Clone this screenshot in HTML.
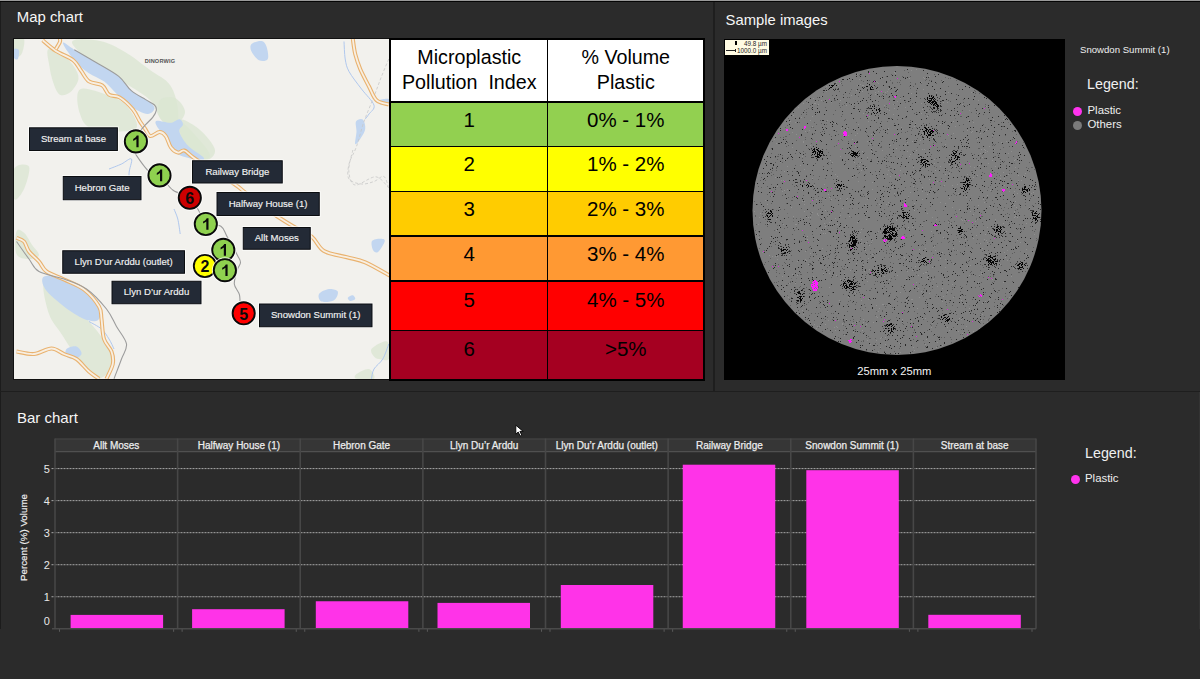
<!DOCTYPE html>
<html><head><meta charset="utf-8"><style>
html,body{margin:0;padding:0;width:1200px;height:679px;overflow:hidden;background:#2b2b2b;font-family:"Liberation Sans", sans-serif;}
div{box-sizing:border-box;}
</style></head><body>
<div style="position:relative;width:1200px;height:679px;overflow:hidden">
<div style="position:absolute;left:0px;top:0px;width:1200px;height:1px;background:#9a9a9a"></div><div style="position:absolute;left:0px;top:1px;width:1200px;height:1px;background:#050505"></div><div style="position:absolute;left:0px;top:2px;width:1px;height:627px;background:#1c1c1c"></div><div style="position:absolute;left:713px;top:2px;width:2px;height:389px;background:#1e1e1e"></div><div style="position:absolute;left:0px;top:390.5px;width:1200px;height:1.8000000000000114px;background:#1e1e1e"></div><div style="position:absolute;left:16.8px;top:9.6px;font-size:14.9px;line-height:1;color:#f6f6f6;font-weight:400;white-space:nowrap;">Map chart</div><div style="position:absolute;left:725.6px;top:12.8px;font-size:14.8px;line-height:1;color:#f6f6f6;font-weight:400;white-space:nowrap;">Sample images</div><div style="position:absolute;left:17px;top:410px;font-size:15px;line-height:1;color:#f6f6f6;font-weight:400;white-space:nowrap;">Bar chart</div><div style="position:absolute;left:13px;top:38px;width:377px;height:342px;background:#111"></div><div style="position:absolute;left:14px;top:39px;width:376px;height:340px;overflow:hidden"><svg width="376" height="340" viewBox="14 39 376 340" style="display:block">
<rect x="0" y="0" width="400" height="400" fill="#f2f1ed"/>
<path d="M72.0,42.0 C72.8,38.0 91.2,39.3 100.0,41.0 C108.8,42.7 116.7,47.2 125.0,52.0 C133.3,56.8 142.5,64.5 150.0,70.0 C157.5,75.5 165.3,78.3 170.0,85.0 C174.7,91.7 177.2,101.7 178.0,110.0 C178.8,118.3 178.0,133.7 175.0,135.0 C172.0,136.3 164.2,123.8 160.0,118.0 C155.8,112.2 156.7,106.3 150.0,100.0 C143.3,93.7 129.2,85.8 120.0,80.0 C110.8,74.2 103.0,71.3 95.0,65.0 C87.0,58.7 71.2,46.0 72.0,42.0Z" fill="#dbe6d2" fill-opacity="0.8"/>
<path d="M178.0,120.0 C180.8,119.5 189.7,129.2 195.0,135.0 C200.3,140.8 209.2,150.8 210.0,155.0 C210.8,159.2 204.2,160.8 200.0,160.0 C195.8,159.2 188.7,153.7 185.0,150.0 C181.3,146.3 179.2,143.0 178.0,138.0 C176.8,133.0 175.2,120.5 178.0,120.0Z" fill="#dbe6d2" fill-opacity="0.8"/>
<path d="M48.0,49.6 C49.7,47.4 55.7,49.6 59.9,52.3 C64.1,54.9 70.1,61.1 73.2,65.5 C76.3,69.9 78.9,74.4 78.5,78.8 C78.0,83.2 73.6,89.4 70.5,92.1 C67.4,94.7 62.8,96.3 59.9,94.7 C57.0,93.2 55.0,87.6 53.3,82.8 C51.5,77.9 50.2,71.1 49.3,65.5 C48.4,60.0 46.2,51.8 48.0,49.6Z" fill="#dbe6d2" fill-opacity="0.8"/>
<path d="M79.8,89.4 C84.2,86.3 98.6,92.1 106.3,94.7 C114.0,97.4 121.3,99.6 126.2,105.3 C131.1,111.0 141.0,125.1 135.5,129.1 C130.0,133.0 102.3,131.7 93.1,129.1 C83.8,126.4 82.0,119.9 79.8,113.3 C77.6,106.7 75.4,92.5 79.8,89.4Z" fill="#dbe6d2" fill-opacity="0.8"/>
<path d="M160.0,100.0 C162.5,96.7 170.8,96.0 175.0,98.0 C179.2,100.0 185.0,107.5 185.0,112.0 C185.0,116.5 179.2,124.0 175.0,125.0 C170.8,126.0 162.5,122.2 160.0,118.0 C157.5,113.8 157.5,103.3 160.0,100.0Z" fill="#dbe6d2" fill-opacity="0.8"/>
<path d="M180.0,120.0 C182.5,117.5 194.2,125.0 200.0,130.0 C205.8,135.0 214.2,145.0 215.0,150.0 C215.8,155.0 210.0,160.8 205.0,160.0 C200.0,159.2 189.2,151.7 185.0,145.0 C180.8,138.3 177.5,122.5 180.0,120.0Z" fill="#dbe6d2" fill-opacity="0.8"/>
<path d="M44.0,284.0 C46.5,281.5 56.5,292.8 64.0,299.0 C71.5,305.2 81.5,313.2 89.0,321.5 C96.5,329.8 105.5,341.1 109.0,349.0 C112.5,356.9 112.3,364.0 110.2,369.0 C108.2,374.0 101.3,379.6 96.5,378.8 C91.7,377.9 87.3,371.5 81.5,364.0 C75.7,356.5 66.9,342.3 61.5,334.0 C56.1,325.7 51.9,322.3 49.0,314.0 C46.1,305.7 41.5,286.5 44.0,284.0Z" fill="#dbe6d2" fill-opacity="0.8"/>
<path d="M16.5,231.5 C17.8,228.0 21.5,230.7 24.0,232.8 C26.5,234.8 29.0,240.2 31.5,244.0 C34.0,247.8 39.4,252.8 39.0,255.2 C38.6,257.8 32.8,259.2 29.0,259.0 C25.2,258.8 18.6,258.6 16.5,254.0 C14.4,249.4 15.2,235.0 16.5,231.5Z" fill="#dbe6d2" fill-opacity="0.8"/>
<path d="M371.5,349.0 C373.2,346.5 381.1,342.3 384.0,341.5 C386.9,340.7 388.0,341.1 388.8,344.0 C389.5,346.9 390.4,356.5 388.8,359.0 C387.1,361.5 381.5,359.4 379.0,359.0 C376.5,358.6 375.2,358.2 374.0,356.5 C372.8,354.8 369.8,351.5 371.5,349.0Z" fill="#dbe6d2" fill-opacity="0.8"/>
<path d="M356.5,374.0 C358.6,372.4 366.1,368.2 369.0,369.0 C371.9,369.8 376.1,377.1 374.0,378.8 C371.9,380.4 359.4,379.5 356.5,378.8 C353.6,378.0 354.4,375.6 356.5,374.0Z" fill="#dbe6d2" fill-opacity="0.8"/>
<path d="M14.0,169.0 C16.5,163.6 27.3,163.2 29.0,166.5 C30.7,169.8 26.5,183.6 24.0,189.0 C21.5,194.4 15.7,202.3 14.0,199.0 C12.3,195.7 11.5,174.4 14.0,169.0Z" fill="#dbe6d2" fill-opacity="0.8"/>
<path d="M14.0,39.0 C15.7,36.1 22.8,36.5 24.0,39.0 C25.2,41.5 23.2,51.1 21.5,54.0 C19.8,56.9 15.2,59.0 14.0,56.5 C12.8,54.0 12.3,41.9 14.0,39.0Z" fill="#dbe6d2" fill-opacity="0.8"/>
<path d="M63.6,42.6 C65.1,42.9 69.0,46.4 74.3,49.7 C79.6,53.0 88.3,57.8 95.7,62.2 C103.1,66.7 112.9,71.7 118.8,76.4 C124.7,81.2 126.3,86.5 131.3,90.7 C136.4,94.9 145.2,98.4 149.1,101.4 C153.0,104.4 154.8,106.4 154.5,108.5 C154.2,110.6 151.2,114.2 147.3,113.9 C143.4,113.6 136.4,110.0 131.3,106.7 C126.3,103.4 121.5,98.5 117.0,94.3 C112.5,90.1 109.3,85.4 104.6,81.8 C99.8,78.2 93.3,76.2 88.5,72.9 C83.7,69.6 79.9,66.4 76.0,62.2 C72.1,58.0 67.4,51.2 65.3,47.9 C63.2,44.6 62.1,42.3 63.6,42.6Z" fill="#c2d6f0"/>
<path d="M156.3,121.0 C158.4,120.1 166.7,123.1 170.5,122.8 C174.3,122.5 177.3,118.9 179.4,119.2 C181.5,119.5 183.0,122.5 183.0,124.6 C183.0,126.7 178.5,128.1 179.4,131.7 C180.3,135.3 184.4,141.8 188.3,146.0 C192.2,150.2 200.2,154.3 202.6,156.6 C205.0,158.9 204.2,159.4 203.0,160.0 C201.8,160.6 200.0,161.2 195.5,160.0 C191.0,158.8 180.7,156.6 175.9,153.1 C171.2,149.6 170.0,143.0 167.0,138.8 C164.0,134.6 159.8,131.1 158.0,128.1 C156.2,125.1 154.2,121.9 156.3,121.0Z" fill="#c2d6f0"/>
<path d="M251.5,44.0 C253.2,42.2 259.0,40.6 261.5,41.0 C264.0,41.4 265.5,43.5 266.5,46.5 C267.5,49.5 269.0,56.7 267.8,59.0 C266.5,61.3 261.7,61.5 259.0,60.2 C256.3,59.0 252.8,54.2 251.5,51.5 C250.2,48.8 249.8,45.8 251.5,44.0Z" fill="#c2d6f0"/>
<path d="M356.0,121.5 C357.0,119.5 361.2,118.2 362.8,119.5 C364.3,120.8 365.7,125.8 365.2,129.0 C364.8,132.2 361.9,136.5 360.2,139.0 C358.6,141.5 355.9,145.2 355.2,144.0 C354.6,142.8 356.4,135.2 356.5,131.5 C356.6,127.8 355.0,123.5 356.0,121.5Z" fill="#c2d6f0"/>
<path d="M379.0,100.2 C380.4,99.3 387.1,98.3 388.8,99.0 C390.4,99.7 390.2,103.6 388.8,104.5 C387.3,105.4 381.9,105.2 380.2,104.5 C378.6,103.8 377.6,101.2 379.0,100.2Z" fill="#c2d6f0"/>
<path d="M44.0,276.5 C47.1,274.8 57.3,276.0 64.0,278.5 C70.7,281.0 78.2,286.4 84.0,291.5 C89.8,296.6 96.7,304.2 99.0,309.0 C101.3,313.8 100.2,318.6 97.8,320.2 C95.2,321.9 89.6,321.3 84.0,319.0 C78.4,316.7 70.5,311.5 64.0,306.5 C57.5,301.5 48.6,294.0 45.2,289.0 C41.9,284.0 40.9,278.2 44.0,276.5Z" fill="#c2d6f0"/>
<path d="M66.5,349.0 C68.2,347.3 74.0,345.7 76.5,346.5 C79.0,347.3 81.9,351.9 81.5,354.0 C81.1,356.1 76.5,358.6 74.0,359.0 C71.5,359.4 67.8,358.2 66.5,356.5 C65.2,354.8 64.8,350.7 66.5,349.0Z" fill="#c2d6f0"/>
<path d="M372.0,241.0 C373.2,239.1 377.9,238.7 380.0,238.7 C382.1,238.7 385.1,238.8 384.8,241.0 C384.5,243.2 380.0,250.5 378.0,252.0 C376.0,253.5 374.0,251.8 373.0,250.0 C372.0,248.2 370.8,242.9 372.0,241.0Z" fill="#c2d6f0"/>
<path d="M319.0,294.0 C320.2,291.9 325.9,289.4 329.0,289.0 C332.1,288.6 336.9,289.6 337.8,291.5 C338.6,293.4 336.7,298.6 334.0,300.2 C331.3,301.9 324.0,302.5 321.5,301.5 C319.0,300.5 317.8,296.1 319.0,294.0Z" fill="#c2d6f0"/>
<path d="M347.8,297.8 C348.2,296.8 351.5,295.0 352.8,295.2 C354.0,295.5 355.7,298.0 355.2,299.0 C354.8,300.0 351.5,301.2 350.2,301.0 C349.0,300.8 347.3,298.7 347.8,297.8Z" fill="#c2d6f0"/>
<path d="M14.0,49.0 C14.8,47.8 18.4,48.6 19.0,50.2 C19.6,51.9 18.6,57.8 17.8,59.0 C16.9,60.2 14.6,59.4 14.0,57.8 C13.4,56.1 13.2,50.2 14.0,49.0Z" fill="#c2d6f0"/>
<path d="M344.0,41.5 C344.2,44.4 344.4,54.0 345.2,59.0 C346.1,64.0 346.3,66.5 349.0,71.5 C351.7,76.5 357.3,83.4 361.5,89.0 C365.7,94.6 372.8,101.1 374.0,105.2 C375.2,109.4 370.5,111.7 369.0,114.0 C367.5,116.3 365.9,118.2 365.2,119.0" fill="none" stroke="#b0c8ee" stroke-width="1"/>
<path d="M109.0,169.0 C111.1,168.2 117.8,165.7 121.5,164.0 C125.2,162.3 130.2,157.3 131.5,159.0 C132.8,160.7 129.0,169.0 129.0,174.0 C129.0,179.0 131.1,186.5 131.5,189.0" fill="none" stroke="#b0c8ee" stroke-width="1"/>
<path d="M174.0,209.0 C174.6,210.7 176.7,214.8 177.8,219.0 C178.8,223.2 179.8,231.5 180.2,234.0" fill="none" stroke="#b0c8ee" stroke-width="1"/>
<path d="M89.0,321.5 C91.1,322.8 98.2,326.1 101.5,329.0 C104.8,331.9 106.9,335.7 109.0,339.0 C111.1,342.3 113.2,347.3 114.0,349.0" fill="none" stroke="#b0c8ee" stroke-width="1"/>
<path d="M388.8,344.0 C387.8,346.5 385.2,354.8 382.8,359.0 C380.3,363.2 375.9,365.7 374.0,369.0 C372.1,372.3 371.9,377.1 371.5,378.8" fill="none" stroke="#b0c8ee" stroke-width="1"/>
<path d="M388.8,59.0 C387.5,61.9 384.0,70.2 381.5,76.5 C379.0,82.8 376.9,89.0 374.0,96.5 C371.1,104.0 366.9,113.2 364.0,121.5 C361.1,129.8 359.0,139.4 356.5,146.5 C354.0,153.6 350.2,158.6 349.0,164.0 C347.8,169.4 346.9,175.7 349.0,179.0 C351.1,182.3 357.3,183.6 361.5,184.0 C365.7,184.4 370.2,182.8 374.0,181.5 C377.8,180.2 381.5,175.2 384.0,176.5 C386.5,177.8 388.0,186.9 388.8,189.0" fill="none" stroke="#c8c8c8" stroke-width="0.8" stroke-dasharray="3,2"/>
<path d="M352.9,150.0 C352.2,153.4 348.4,164.8 348.8,170.6 C349.2,176.4 350.5,184.0 355.0,185.0 C359.5,186.0 370.1,176.5 375.6,176.8 C381.1,177.1 385.9,185.3 388.0,187.0" fill="none" stroke="#c8c8c8" stroke-width="0.8" stroke-dasharray="3,2"/>
<path d="M42.7,40.3 C44.9,42.1 50.8,47.6 55.9,50.9 C61.0,54.2 69.0,56.9 73.2,60.2 C77.4,63.5 78.4,67.3 81.1,70.8 C83.8,74.3 85.6,79.0 89.1,81.4 C92.6,83.8 99.0,83.2 102.3,85.4 C105.6,87.6 106.1,92.7 109.0,94.7 C111.9,96.7 115.6,95.0 119.6,97.4 C123.6,99.8 129.4,105.3 132.8,109.3 C136.2,113.3 137.9,118.3 140.0,121.6 C142.1,124.9 143.5,126.5 145.2,128.9 C146.9,131.3 147.9,135.6 150.3,136.1 C152.7,136.6 157.0,132.0 159.6,132.0 C162.2,132.0 163.9,133.5 165.8,136.1 C167.7,138.7 168.9,144.7 170.9,147.4 C172.9,150.2 175.9,152.1 178.1,152.6 C180.3,153.1 181.7,149.7 184.3,150.5 C186.9,151.3 188.5,154.1 193.6,157.7 C198.7,161.3 208.2,167.6 215.0,172.0 C221.8,176.4 229.5,180.8 234.3,184.0 C239.1,187.2 239.0,187.5 243.6,191.2 C248.2,194.9 256.5,201.9 262.0,206.0 C267.5,210.1 271.4,212.6 276.6,216.0 C281.8,219.4 287.3,222.9 293.1,226.3 C298.9,229.7 306.5,232.5 311.6,236.6 C316.8,240.7 318.1,247.6 324.0,251.0 C329.9,254.4 339.8,255.3 346.7,257.2 C353.6,259.1 358.1,259.3 365.3,262.4 C372.5,265.5 385.9,273.6 390.0,275.8" fill="none" stroke="#e9b26f" stroke-width="4.0" stroke-linejoin="round"/>
<path d="M42.7,40.3 C44.9,42.1 50.8,47.6 55.9,50.9 C61.0,54.2 69.0,56.9 73.2,60.2 C77.4,63.5 78.4,67.3 81.1,70.8 C83.8,74.3 85.6,79.0 89.1,81.4 C92.6,83.8 99.0,83.2 102.3,85.4 C105.6,87.6 106.1,92.7 109.0,94.7 C111.9,96.7 115.6,95.0 119.6,97.4 C123.6,99.8 129.4,105.3 132.8,109.3 C136.2,113.3 137.9,118.3 140.0,121.6 C142.1,124.9 143.5,126.5 145.2,128.9 C146.9,131.3 147.9,135.6 150.3,136.1 C152.7,136.6 157.0,132.0 159.6,132.0 C162.2,132.0 163.9,133.5 165.8,136.1 C167.7,138.7 168.9,144.7 170.9,147.4 C172.9,150.2 175.9,152.1 178.1,152.6 C180.3,153.1 181.7,149.7 184.3,150.5 C186.9,151.3 188.5,154.1 193.6,157.7 C198.7,161.3 208.2,167.6 215.0,172.0 C221.8,176.4 229.5,180.8 234.3,184.0 C239.1,187.2 239.0,187.5 243.6,191.2 C248.2,194.9 256.5,201.9 262.0,206.0 C267.5,210.1 271.4,212.6 276.6,216.0 C281.8,219.4 287.3,222.9 293.1,226.3 C298.9,229.7 306.5,232.5 311.6,236.6 C316.8,240.7 318.1,247.6 324.0,251.0 C329.9,254.4 339.8,255.3 346.7,257.2 C353.6,259.1 358.1,259.3 365.3,262.4 C372.5,265.5 385.9,273.6 390.0,275.8" fill="none" stroke="#f8efe2" stroke-width="1.7999999999999998" stroke-linejoin="round"/>
<path d="M59.9,39.0 C59.9,39.5 60.6,40.3 59.9,42.0 C59.2,43.7 56.6,47.8 55.9,49.0" fill="none" stroke="#e9b26f" stroke-width="4.0" stroke-linejoin="round"/>
<path d="M59.9,39.0 C59.9,39.5 60.6,40.3 59.9,42.0 C59.2,43.7 56.6,47.8 55.9,49.0" fill="none" stroke="#f8efe2" stroke-width="1.7999999999999998" stroke-linejoin="round"/>
<path d="M352.8,39.0 C353.2,41.5 354.0,49.0 355.2,54.0 C356.5,59.0 358.0,63.6 360.2,69.0 C362.5,74.4 366.3,81.3 369.0,86.5 C371.7,91.7 373.2,97.2 376.5,100.2 C379.8,103.2 386.7,103.8 388.8,104.5" fill="none" stroke="#e9b26f" stroke-width="4.0" stroke-linejoin="round"/>
<path d="M352.8,39.0 C353.2,41.5 354.0,49.0 355.2,54.0 C356.5,59.0 358.0,63.6 360.2,69.0 C362.5,74.4 366.3,81.3 369.0,86.5 C371.7,91.7 373.2,97.2 376.5,100.2 C379.8,103.2 386.7,103.8 388.8,104.5" fill="none" stroke="#f8efe2" stroke-width="1.7999999999999998" stroke-linejoin="round"/>
<path d="M16.5,237.8 C17.8,238.4 21.9,239.2 24.0,241.5 C26.1,243.8 26.5,248.2 29.0,251.5 C31.5,254.8 36.1,258.2 39.0,261.5 C41.9,264.8 42.3,268.5 46.5,271.5 C50.7,274.5 57.8,276.5 64.0,279.5 C70.2,282.5 78.2,285.0 84.0,289.5 C89.8,294.0 96.1,301.6 99.0,306.5 C101.9,311.4 100.7,313.6 101.5,319.0 C102.3,324.4 102.3,333.6 104.0,339.0 C105.7,344.4 110.0,347.3 111.5,351.5 C113.0,355.7 113.6,359.5 112.8,364.0 C111.9,368.5 107.5,376.3 106.5,378.8" fill="none" stroke="#e9b26f" stroke-width="4.0" stroke-linejoin="round"/>
<path d="M16.5,237.8 C17.8,238.4 21.9,239.2 24.0,241.5 C26.1,243.8 26.5,248.2 29.0,251.5 C31.5,254.8 36.1,258.2 39.0,261.5 C41.9,264.8 42.3,268.5 46.5,271.5 C50.7,274.5 57.8,276.5 64.0,279.5 C70.2,282.5 78.2,285.0 84.0,289.5 C89.8,294.0 96.1,301.6 99.0,306.5 C101.9,311.4 100.7,313.6 101.5,319.0 C102.3,324.4 102.3,333.6 104.0,339.0 C105.7,344.4 110.0,347.3 111.5,351.5 C113.0,355.7 113.6,359.5 112.8,364.0 C111.9,368.5 107.5,376.3 106.5,378.8" fill="none" stroke="#f8efe2" stroke-width="1.7999999999999998" stroke-linejoin="round"/>
<path d="M16.5,351.5 C19.4,351.9 28.2,354.5 34.0,354.0 C39.8,353.5 46.5,348.5 51.5,348.5 C56.5,348.5 59.8,352.2 64.0,354.0 C68.2,355.8 72.3,356.1 76.5,359.0 C80.7,361.9 85.2,368.2 89.0,371.5 C92.8,374.8 97.3,377.5 99.0,378.8" fill="none" stroke="#e9b26f" stroke-width="4.0" stroke-linejoin="round"/>
<path d="M16.5,351.5 C19.4,351.9 28.2,354.5 34.0,354.0 C39.8,353.5 46.5,348.5 51.5,348.5 C56.5,348.5 59.8,352.2 64.0,354.0 C68.2,355.8 72.3,356.1 76.5,359.0 C80.7,361.9 85.2,368.2 89.0,371.5 C92.8,374.8 97.3,377.5 99.0,378.8" fill="none" stroke="#f8efe2" stroke-width="1.7999999999999998" stroke-linejoin="round"/>
<path d="M74.3,49.7 C77.9,51.8 88.3,57.8 95.7,62.2 C103.1,66.7 112.9,71.7 118.8,76.4 C124.7,81.2 126.8,86.8 131.3,90.7 C135.8,94.6 141.7,97.2 145.6,99.6 C149.5,102.0 152.7,103.2 154.5,105.0 C156.3,106.8 156.6,108.2 156.3,110.3 C156.0,112.4 154.5,115.0 152.7,117.4 C150.9,119.8 148.0,121.9 145.6,124.6 C143.2,127.3 140.0,130.8 138.4,133.5 C136.8,136.2 136.9,138.4 136.0,141.0 C135.1,143.6 130.6,143.7 132.7,148.8 C134.8,153.9 144.3,167.1 148.8,171.5 C153.3,175.9 155.4,172.3 159.5,175.4 C163.6,178.5 168.0,186.6 173.1,190.3 C178.2,194.0 185.8,194.2 190.0,197.4 C194.2,200.7 195.6,205.7 198.2,209.8 C200.8,213.9 201.7,219.2 205.5,222.0 C209.3,224.8 217.3,223.9 220.9,226.3 C224.5,228.7 224.3,231.8 227.1,236.6 C229.8,241.4 235.2,250.9 237.4,255.2 C239.6,259.5 240.5,260.0 240.5,262.4 C240.5,264.8 238.4,266.0 237.4,269.6 C236.4,273.2 234.0,279.8 234.3,284.0 C234.7,288.2 238.6,290.7 239.5,295.0 C240.4,299.3 239.9,307.5 240.0,310.0" fill="none" stroke="#9c9c9c" stroke-width="1.1"/>
<path d="M16.5,241.5 C18.6,244.4 25.2,254.0 29.0,259.0 C32.8,264.0 33.2,268.2 39.0,271.5 C44.8,274.8 56.1,276.1 64.0,279.0 C71.9,281.9 79.4,284.0 86.5,289.0 C93.6,294.0 101.5,302.8 106.5,309.0 C111.5,315.2 113.2,320.7 116.5,326.5 C119.8,332.3 125.7,338.6 126.5,344.0 C127.3,349.4 123.6,353.2 121.5,359.0 C119.4,364.8 115.2,375.5 114.0,378.8" fill="none" stroke="#9c9c9c" stroke-width="1.1"/>
<text x="160" y="63" font-family="Liberation Sans" font-size="5.6" font-weight="700" fill="#555" text-anchor="middle" letter-spacing="0.2">DINORWIG</text>
<rect x="28.2" y="126.5" width="90.5" height="25.300000000000004" fill="#fff" opacity="0.85"/>
<rect x="29.5" y="127.8" width="87.9" height="22.700000000000003" fill="#232a36" stroke="#0b0d10" stroke-width="1"/>
<text x="73.45" y="142.05" font-family="Liberation Sans" font-size="9.6" fill="#f2f2f2" stroke="#f2f2f2" stroke-width="0.15" text-anchor="middle">Stream at base</text>
<rect x="61.95" y="175.2" width="80.35" height="25.85" fill="#fff" opacity="0.85"/>
<rect x="63.25" y="176.5" width="77.75" height="23.25" fill="#232a36" stroke="#0b0d10" stroke-width="1"/>
<text x="102.12" y="191.03" font-family="Liberation Sans" font-size="9.6" fill="#f2f2f2" stroke="#f2f2f2" stroke-width="0.15" text-anchor="middle">Hebron Gate</text>
<rect x="191.2" y="159.45" width="92.35" height="24.85" fill="#fff" opacity="0.85"/>
<rect x="192.5" y="160.75" width="89.75" height="22.25" fill="#232a36" stroke="#0b0d10" stroke-width="1"/>
<text x="237.38" y="174.78" font-family="Liberation Sans" font-size="9.6" fill="#f2f2f2" stroke="#f2f2f2" stroke-width="0.15" text-anchor="middle">Railway Bridge</text>
<rect x="215.7" y="191.2" width="104.85" height="25.6" fill="#fff" opacity="0.85"/>
<rect x="217.0" y="192.5" width="102.25" height="23" fill="#232a36" stroke="#0b0d10" stroke-width="1"/>
<text x="268.12" y="206.90" font-family="Liberation Sans" font-size="9.6" fill="#f2f2f2" stroke="#f2f2f2" stroke-width="0.15" text-anchor="middle">Halfway House (1)</text>
<rect x="241.95" y="226.2" width="69.6" height="24.35" fill="#fff" opacity="0.85"/>
<rect x="243.25" y="227.5" width="67.0" height="21.75" fill="#232a36" stroke="#0b0d10" stroke-width="1"/>
<text x="276.75" y="241.28" font-family="Liberation Sans" font-size="9.6" fill="#f2f2f2" stroke="#f2f2f2" stroke-width="0.15" text-anchor="middle">Allt Moses</text>
<rect x="61.45" y="249.45" width="124.35" height="25.1" fill="#fff" opacity="0.85"/>
<rect x="62.75" y="250.75" width="121.75" height="22.5" fill="#232a36" stroke="#0b0d10" stroke-width="1"/>
<text x="123.62" y="264.90" font-family="Liberation Sans" font-size="9.6" fill="#f2f2f2" stroke="#f2f2f2" stroke-width="0.15" text-anchor="middle">Llyn D’ur Arddu (outlet)</text>
<rect x="110.7" y="279.95" width="91.6" height="25.1" fill="#fff" opacity="0.85"/>
<rect x="112.0" y="281.25" width="89.0" height="22.5" fill="#232a36" stroke="#0b0d10" stroke-width="1"/>
<text x="156.50" y="295.40" font-family="Liberation Sans" font-size="9.6" fill="#f2f2f2" stroke="#f2f2f2" stroke-width="0.15" text-anchor="middle">Llyn D’ur Arddu</text>
<rect x="258.2" y="302.7" width="115.1" height="25.35" fill="#fff" opacity="0.85"/>
<rect x="259.5" y="304.0" width="112.5" height="22.75" fill="#232a36" stroke="#0b0d10" stroke-width="1"/>
<text x="315.75" y="318.27" font-family="Liberation Sans" font-size="9.6" fill="#f2f2f2" stroke="#f2f2f2" stroke-width="0.15" text-anchor="middle">Snowdon Summit (1)</text>
<circle cx="135.9" cy="141.4" r="12.4" fill="none" stroke="#fff" stroke-opacity="0.75" stroke-width="1.2"/>
<circle cx="135.9" cy="141.4" r="11.1" fill="#8fd14f" stroke="#0a0a0a" stroke-width="1.9"/>
<path transform="translate(131.80 147.20)" d="M6.8,0 L6.8,-11.6 L5.0,-11.6 C4.4,-10.1 3.0,-8.9 1.4,-8.3 L1.4,-6.3 C2.6,-6.7 3.8,-7.4 4.6,-8.2 L4.6,0 Z" fill="#0a0a0a"/>
<circle cx="159.5" cy="175.4" r="12.4" fill="none" stroke="#fff" stroke-opacity="0.75" stroke-width="1.2"/>
<circle cx="159.5" cy="175.4" r="11.1" fill="#8fd14f" stroke="#0a0a0a" stroke-width="1.9"/>
<path transform="translate(155.40 181.20)" d="M6.8,0 L6.8,-11.6 L5.0,-11.6 C4.4,-10.1 3.0,-8.9 1.4,-8.3 L1.4,-6.3 C2.6,-6.7 3.8,-7.4 4.6,-8.2 L4.6,0 Z" fill="#0a0a0a"/>
<circle cx="189.8" cy="197.8" r="12.4" fill="none" stroke="#fff" stroke-opacity="0.75" stroke-width="1.2"/>
<circle cx="189.8" cy="197.8" r="11.1" fill="#cc0000" stroke="#0a0a0a" stroke-width="1.9"/>
<text x="189.8" y="204.0" font-family="Liberation Sans" font-size="16" font-weight="700" fill="#0a0a0a" text-anchor="middle">6</text>
<circle cx="205.8" cy="224.0" r="12.4" fill="none" stroke="#fff" stroke-opacity="0.75" stroke-width="1.2"/>
<circle cx="205.8" cy="224.0" r="11.1" fill="#8fd14f" stroke="#0a0a0a" stroke-width="1.9"/>
<path transform="translate(201.70 229.80)" d="M6.8,0 L6.8,-11.6 L5.0,-11.6 C4.4,-10.1 3.0,-8.9 1.4,-8.3 L1.4,-6.3 C2.6,-6.7 3.8,-7.4 4.6,-8.2 L4.6,0 Z" fill="#0a0a0a"/>
<circle cx="223.3" cy="249.9" r="12.4" fill="none" stroke="#fff" stroke-opacity="0.75" stroke-width="1.2"/>
<circle cx="223.3" cy="249.9" r="11.1" fill="#8fd14f" stroke="#0a0a0a" stroke-width="1.9"/>
<path transform="translate(219.20 255.70)" d="M6.8,0 L6.8,-11.6 L5.0,-11.6 C4.4,-10.1 3.0,-8.9 1.4,-8.3 L1.4,-6.3 C2.6,-6.7 3.8,-7.4 4.6,-8.2 L4.6,0 Z" fill="#0a0a0a"/>
<circle cx="204.9" cy="266.0" r="12.4" fill="none" stroke="#fff" stroke-opacity="0.75" stroke-width="1.2"/>
<circle cx="204.9" cy="266.0" r="11.1" fill="#ffff00" stroke="#0a0a0a" stroke-width="1.9"/>
<text x="204.9" y="272.2" font-family="Liberation Sans" font-size="16" font-weight="700" fill="#0a0a0a" text-anchor="middle">2</text>
<circle cx="224.9" cy="270.2" r="12.4" fill="none" stroke="#fff" stroke-opacity="0.75" stroke-width="1.2"/>
<circle cx="224.9" cy="270.2" r="11.1" fill="#8fd14f" stroke="#0a0a0a" stroke-width="1.9"/>
<path transform="translate(220.80 276.00)" d="M6.8,0 L6.8,-11.6 L5.0,-11.6 C4.4,-10.1 3.0,-8.9 1.4,-8.3 L1.4,-6.3 C2.6,-6.7 3.8,-7.4 4.6,-8.2 L4.6,0 Z" fill="#0a0a0a"/>
<circle cx="243.7" cy="313.3" r="12.4" fill="none" stroke="#fff" stroke-opacity="0.75" stroke-width="1.2"/>
<circle cx="243.7" cy="313.3" r="11.1" fill="#ff0000" stroke="#0a0a0a" stroke-width="1.9"/>
<text x="243.7" y="319.5" font-family="Liberation Sans" font-size="16" font-weight="700" fill="#0a0a0a" text-anchor="middle">5</text>
</svg></div><div style="position:absolute;left:389px;top:38px;width:316px;height:342.5px;background:#000"></div><div style="position:absolute;left:391px;top:40px;width:155.75px;height:60.75px;background:#ffffff"></div><div style="position:absolute;left:548.25px;top:40px;width:154.75px;height:60.75px;background:#ffffff"></div><div style="position:absolute;left:391px;top:102.5px;width:155.75px;height:43.05000000000001px;background:#92d050"></div><div style="position:absolute;left:548.25px;top:102.5px;width:154.75px;height:43.05000000000001px;background:#92d050"></div><div style="position:absolute;left:391px;width:156.5px;top:109.59px;height:21px;line-height:20.5px;text-align:center;font-size:20.5px;color:#000">1</div><div style="position:absolute;left:548.5px;width:154.5px;top:109.59px;height:21px;line-height:20.5px;text-align:center;font-size:20.5px;color:#000">0% - 1%</div><div style="position:absolute;left:391px;top:147.3px;width:155.75px;height:43.25px;background:#ffff00"></div><div style="position:absolute;left:548.25px;top:147.3px;width:154.75px;height:43.25px;background:#ffff00"></div><div style="position:absolute;left:391px;width:156.5px;top:154.39px;height:21px;line-height:20.5px;text-align:center;font-size:20.5px;color:#000">2</div><div style="position:absolute;left:548.5px;width:154.5px;top:154.39px;height:21px;line-height:20.5px;text-align:center;font-size:20.5px;color:#000">1% - 2%</div><div style="position:absolute;left:391px;top:192.3px;width:155.75px;height:42.94999999999999px;background:#ffcc00"></div><div style="position:absolute;left:548.25px;top:192.3px;width:154.75px;height:42.94999999999999px;background:#ffcc00"></div><div style="position:absolute;left:391px;width:156.5px;top:199.39px;height:21px;line-height:20.5px;text-align:center;font-size:20.5px;color:#000">3</div><div style="position:absolute;left:548.5px;width:154.5px;top:199.39px;height:21px;line-height:20.5px;text-align:center;font-size:20.5px;color:#000">2% - 3%</div><div style="position:absolute;left:391px;top:237px;width:155.75px;height:43.25px;background:#ff9933"></div><div style="position:absolute;left:548.25px;top:237px;width:154.75px;height:43.25px;background:#ff9933"></div><div style="position:absolute;left:391px;width:156.5px;top:244.09px;height:21px;line-height:20.5px;text-align:center;font-size:20.5px;color:#000">4</div><div style="position:absolute;left:548.5px;width:154.5px;top:244.09px;height:21px;line-height:20.5px;text-align:center;font-size:20.5px;color:#000">3% - 4%</div><div style="position:absolute;left:391px;top:282px;width:155.75px;height:47.55000000000001px;background:#ff0000"></div><div style="position:absolute;left:548.25px;top:282px;width:154.75px;height:47.55000000000001px;background:#ff0000"></div><div style="position:absolute;left:391px;width:156.5px;top:289.89px;height:21px;line-height:20.5px;text-align:center;font-size:20.5px;color:#000">5</div><div style="position:absolute;left:548.5px;width:154.5px;top:289.89px;height:21px;line-height:20.5px;text-align:center;font-size:20.5px;color:#000">4% - 5%</div><div style="position:absolute;left:391px;top:331.3px;width:155.75px;height:47.44999999999999px;background:#a50021"></div><div style="position:absolute;left:548.25px;top:331.3px;width:154.75px;height:47.44999999999999px;background:#a50021"></div><div style="position:absolute;left:391px;width:156.5px;top:339.19px;height:21px;line-height:20.5px;text-align:center;font-size:20.5px;color:#000">6</div><div style="position:absolute;left:548.5px;width:154.5px;top:339.19px;height:21px;line-height:20.5px;text-align:center;font-size:20.5px;color:#000">&gt;5%</div><div style="position:absolute;left:391px;width:156.5px;top:45.1px;line-height:25px;text-align:center;font-size:19.7px;color:#000">Microplastic<br>Pollution&nbsp; Index</div><div style="position:absolute;left:548.5px;width:154.5px;top:45.1px;line-height:25px;text-align:center;font-size:19.7px;color:#000">% Volume<br>Plastic</div><div style="position:absolute;left:724px;top:39px;width:341px;height:341px;background:#000"></div><svg style="position:absolute;left:724px;top:39px" width="341" height="341" viewBox="724 39 341 341" shape-rendering="crispEdges"><circle cx="897" cy="210.5" r="144.5" fill="#7e7e7e" shape-rendering="auto"/><path fill="#111" fill-opacity="0.8" d="M990 297h1v1h-1zM1012 163h1v1h-1zM846 328h1v1h-1zM995 161h1v1h-1zM800 294h1v1h-1zM907 138h1v1h-1zM773 268h1v1h-1zM983 146h1v1h-1zM770 163h1v1h-1zM875 81h1v1h-1zM989 233h1v1h-1zM977 166h1v1h-1zM1017 185h1v1h-1zM902 321h1v1h-1zM986 208h1v1h-1zM794 196h1v1h-1zM913 183h1v1h-1zM1014 213h1v1h-1zM957 121h1v1h-1zM900 263h1v1h-1zM859 92h1v1h-1zM992 258h1v1h-1zM955 280h1v1h-1zM853 204h1v1h-1zM924 110h1v1h-1zM911 236h1v1h-1zM812 134h1v1h-1zM878 117h1v1h-1zM990 315h1v1h-1zM848 295h1v1h-1zM1012 163h1v1h-1zM819 280h1v1h-1zM948 125h1v1h-1zM954 281h1v1h-1zM890 221h1v1h-1zM762 173h1v1h-1zM847 267h1v1h-1zM826 175h1v1h-1zM978 198h1v1h-1zM756 234h1v1h-1zM903 263h1v1h-1zM798 172h1v1h-1zM876 73h1v1h-1zM940 256h1v1h-1zM984 131h1v1h-1zM999 135h1v1h-1zM949 159h1v1h-1zM830 225h1v1h-1zM868 193h1v1h-1zM849 147h1v1h-1zM950 313h1v1h-1zM792 281h1v1h-1zM1014 196h1v1h-1zM874 266h1v1h-1zM883 281h1v1h-1zM1003 216h1v1h-1zM1018 155h1v1h-1zM787 130h1v1h-1zM868 311h1v1h-1zM895 174h1v1h-1zM856 74h1v1h-1zM787 203h1v1h-1zM962 294h1v1h-1zM879 96h1v1h-1zM775 156h1v1h-1zM896 254h1v1h-1zM799 251h1v1h-1zM822 296h1v1h-1zM921 333h1v1h-1zM935 225h1v1h-1zM786 225h1v1h-1zM915 135h1v1h-1zM940 88h1v1h-1zM818 240h1v1h-1zM932 109h1v1h-1zM994 105h1v1h-1zM947 260h1v1h-1zM793 112h1v1h-1zM811 197h1v1h-1zM965 235h1v1h-1zM950 300h1v1h-1zM977 302h1v1h-1zM767 224h1v1h-1zM796 312h1v1h-1zM763 183h1v1h-1zM809 320h1v1h-1zM1000 196h1v1h-1zM906 139h1v1h-1zM855 331h1v1h-1zM838 241h1v1h-1zM978 321h1v1h-1zM875 233h1v1h-1zM959 194h1v1h-1zM853 286h1v1h-1zM854 175h1v1h-1zM948 178h1v1h-1zM914 173h1v1h-1zM821 134h1v1h-1zM1006 245h1v1h-1zM893 152h1v1h-1zM809 296h1v1h-1zM993 206h1v1h-1zM861 277h1v1h-1zM947 332h1v1h-1zM1004 227h1v1h-1zM983 230h1v1h-1zM894 87h1v1h-1zM895 247h1v1h-1zM959 298h1v1h-1zM849 78h1v1h-1zM888 187h1v1h-1zM824 90h1v1h-1zM811 294h1v1h-1zM940 105h1v1h-1zM853 168h1v1h-1zM995 197h1v1h-1zM770 157h1v1h-1zM867 205h1v1h-1zM929 342h1v1h-1zM833 267h1v1h-1zM866 110h1v1h-1zM962 264h1v1h-1zM818 296h1v1h-1zM984 166h1v1h-1zM927 303h1v1h-1zM919 170h1v1h-1zM802 129h1v1h-1zM861 190h1v1h-1zM951 110h1v1h-1zM910 340h1v1h-1zM916 200h1v1h-1zM760 244h1v1h-1zM927 347h1v1h-1zM967 206h1v1h-1zM863 98h1v1h-1zM840 338h1v1h-1zM923 137h1v1h-1zM992 142h1v1h-1zM977 318h1v1h-1zM796 179h1v1h-1zM1038 214h1v1h-1zM1038 197h1v1h-1zM911 261h1v1h-1zM858 221h1v1h-1zM1020 205h1v1h-1zM1006 168h1v1h-1zM810 323h1v1h-1zM837 99h1v1h-1zM963 272h1v1h-1zM889 192h1v1h-1zM817 239h1v1h-1zM974 309h1v1h-1zM1020 228h1v1h-1zM807 164h1v1h-1zM885 132h1v1h-1zM851 145h1v1h-1zM868 72h1v1h-1zM897 230h1v1h-1zM933 191h1v1h-1zM1007 119h1v1h-1zM1007 128h1v1h-1zM1013 194h1v1h-1zM853 337h1v1h-1zM944 277h1v1h-1zM1023 147h1v1h-1zM1027 170h1v1h-1zM1025 177h1v1h-1zM1023 176h1v1h-1zM871 243h1v1h-1zM844 227h1v1h-1zM913 165h1v1h-1zM863 165h1v1h-1zM801 134h1v1h-1zM874 133h1v1h-1zM797 198h1v1h-1zM950 115h1v1h-1zM974 281h1v1h-1zM854 272h1v1h-1zM854 249h1v1h-1zM936 125h1v1h-1zM1010 241h1v1h-1zM1009 162h1v1h-1zM827 163h1v1h-1zM846 124h1v1h-1zM856 154h1v1h-1zM832 210h1v1h-1zM820 302h1v1h-1zM791 115h1v1h-1zM919 266h1v1h-1zM991 284h1v1h-1zM1015 247h1v1h-1zM972 173h1v1h-1zM772 168h1v1h-1zM844 274h1v1h-1zM984 250h1v1h-1zM941 273h1v1h-1zM851 150h1v1h-1zM759 231h1v1h-1zM795 273h1v1h-1zM849 324h1v1h-1zM926 198h1v1h-1zM895 125h1v1h-1zM833 273h1v1h-1zM820 234h1v1h-1zM1027 255h1v1h-1zM973 158h1v1h-1zM959 171h1v1h-1zM846 102h1v1h-1zM926 220h1v1h-1zM992 117h1v1h-1zM777 184h1v1h-1zM891 219h1v1h-1zM924 176h1v1h-1zM959 159h1v1h-1zM951 329h1v1h-1zM1006 175h1v1h-1zM813 268h1v1h-1zM807 187h1v1h-1zM883 293h1v1h-1zM957 324h1v1h-1zM777 166h1v1h-1zM802 198h1v1h-1zM880 207h1v1h-1zM926 347h1v1h-1zM964 332h1v1h-1zM803 293h1v1h-1zM775 263h1v1h-1zM833 263h1v1h-1zM993 152h1v1h-1zM781 285h1v1h-1zM1005 281h1v1h-1zM897 335h1v1h-1zM956 225h1v1h-1zM939 337h1v1h-1zM898 313h1v1h-1zM890 353h1v1h-1zM897 217h1v1h-1zM877 87h1v1h-1zM832 275h1v1h-1zM951 93h1v1h-1zM913 269h1v1h-1zM777 229h1v1h-1zM789 180h1v1h-1zM971 310h1v1h-1zM880 190h1v1h-1zM802 305h1v1h-1zM825 191h1v1h-1zM965 299h1v1h-1zM812 170h1v1h-1zM778 248h1v1h-1zM1022 145h1v1h-1zM815 252h1v1h-1zM978 137h1v1h-1zM965 299h1v1h-1zM886 280h1v1h-1zM938 337h1v1h-1zM822 214h1v1h-1zM817 188h1v1h-1zM998 124h1v1h-1zM1009 224h1v1h-1zM1011 249h1v1h-1zM892 205h1v1h-1zM894 188h1v1h-1zM849 193h1v1h-1zM1009 166h1v1h-1zM756 204h1v1h-1zM884 283h1v1h-1zM804 179h1v1h-1zM1029 208h1v1h-1zM872 257h1v1h-1zM999 311h1v1h-1zM933 173h1v1h-1zM925 241h1v1h-1zM1005 134h1v1h-1zM790 127h1v1h-1zM981 175h1v1h-1zM979 283h1v1h-1zM884 265h1v1h-1zM829 254h1v1h-1zM830 232h1v1h-1zM900 346h1v1h-1zM846 284h1v1h-1zM941 115h1v1h-1zM988 231h1v1h-1zM794 287h1v1h-1zM989 219h1v1h-1zM910 175h1v1h-1zM793 221h1v1h-1zM1005 233h1v1h-1zM896 139h1v1h-1zM864 249h1v1h-1zM919 253h1v1h-1zM812 231h1v1h-1zM977 208h1v1h-1zM908 300h1v1h-1zM914 179h1v1h-1zM956 330h1v1h-1zM879 109h1v1h-1zM937 253h1v1h-1zM764 252h1v1h-1zM954 264h1v1h-1zM940 265h1v1h-1zM842 111h1v1h-1zM984 210h1v1h-1zM763 179h1v1h-1zM903 77h1v1h-1zM968 98h1v1h-1zM1031 222h1v1h-1zM923 107h1v1h-1zM892 119h1v1h-1zM912 109h1v1h-1zM801 282h1v1h-1zM877 178h1v1h-1zM925 301h1v1h-1zM953 245h1v1h-1zM924 236h1v1h-1zM821 318h1v1h-1zM962 244h1v1h-1zM797 303h1v1h-1zM1020 251h1v1h-1zM967 281h1v1h-1zM826 191h1v1h-1zM835 258h1v1h-1zM837 230h1v1h-1zM856 265h1v1h-1zM901 206h1v1h-1zM909 124h1v1h-1zM907 145h1v1h-1zM843 97h1v1h-1zM912 121h1v1h-1zM853 160h1v1h-1zM935 177h1v1h-1zM872 307h1v1h-1zM1012 180h1v1h-1zM978 160h1v1h-1zM895 272h1v1h-1zM840 225h1v1h-1zM997 199h1v1h-1zM1000 272h1v1h-1zM927 346h1v1h-1zM799 313h1v1h-1zM865 270h1v1h-1zM777 177h1v1h-1zM820 263h1v1h-1zM892 95h1v1h-1zM873 71h1v1h-1zM993 256h1v1h-1zM982 192h1v1h-1zM967 146h1v1h-1zM964 146h1v1h-1zM916 140h1v1h-1zM884 330h1v1h-1zM819 202h1v1h-1zM779 143h1v1h-1zM856 142h1v1h-1zM817 108h1v1h-1zM932 204h1v1h-1zM997 305h1v1h-1zM1011 221h1v1h-1zM965 164h1v1h-1zM798 291h1v1h-1zM858 85h1v1h-1zM832 225h1v1h-1zM913 225h1v1h-1zM959 104h1v1h-1zM1036 222h1v1h-1zM936 104h1v1h-1zM823 120h1v1h-1zM953 302h1v1h-1zM814 293h1v1h-1zM995 187h1v1h-1zM810 300h1v1h-1zM829 214h1v1h-1zM944 342h1v1h-1zM904 238h1v1h-1zM796 197h1v1h-1zM848 168h1v1h-1zM944 122h1v1h-1zM920 224h1v1h-1zM992 235h1v1h-1zM980 261h1v1h-1zM799 118h1v1h-1zM824 114h1v1h-1zM819 157h1v1h-1zM844 164h1v1h-1zM957 84h1v1h-1zM989 112h1v1h-1zM803 182h1v1h-1zM815 288h1v1h-1zM960 103h1v1h-1zM926 284h1v1h-1zM1013 137h1v1h-1zM857 141h1v1h-1zM949 313h1v1h-1zM921 277h1v1h-1zM914 191h1v1h-1zM885 235h1v1h-1zM848 241h1v1h-1zM909 291h1v1h-1zM945 170h1v1h-1zM1012 236h1v1h-1zM902 118h1v1h-1zM833 195h1v1h-1zM1027 218h1v1h-1zM1032 185h1v1h-1zM932 322h1v1h-1zM1014 138h1v1h-1zM853 330h1v1h-1zM852 79h1v1h-1zM853 108h1v1h-1zM821 191h1v1h-1zM996 279h1v1h-1zM922 234h1v1h-1zM798 250h1v1h-1zM888 303h1v1h-1zM815 297h1v1h-1zM821 188h1v1h-1zM1038 201h1v1h-1zM838 237h1v1h-1zM826 128h1v1h-1zM938 189h1v1h-1zM937 150h1v1h-1zM791 298h1v1h-1zM768 272h1v1h-1zM844 136h1v1h-1zM909 261h1v1h-1zM854 276h1v1h-1zM949 126h1v1h-1zM959 154h1v1h-1zM924 332h1v1h-1zM819 200h1v1h-1zM876 236h1v1h-1zM826 272h1v1h-1zM1006 118h1v1h-1zM992 242h1v1h-1zM960 210h1v1h-1zM1000 303h1v1h-1zM961 288h1v1h-1zM921 334h1v1h-1zM1018 287h1v1h-1zM916 93h1v1h-1zM903 287h1v1h-1zM944 230h1v1h-1zM908 101h1v1h-1zM877 129h1v1h-1zM980 190h1v1h-1zM1009 269h1v1h-1zM874 345h1v1h-1zM908 268h1v1h-1zM872 101h1v1h-1zM940 345h1v1h-1zM836 179h1v1h-1zM967 128h1v1h-1zM903 190h1v1h-1zM905 78h1v1h-1zM918 154h1v1h-1zM784 291h1v1h-1zM955 138h1v1h-1zM934 184h1v1h-1zM775 222h1v1h-1zM912 223h1v1h-1zM918 321h1v1h-1zM825 307h1v1h-1zM857 169h1v1h-1zM903 96h1v1h-1zM852 227h1v1h-1zM933 307h1v1h-1zM1024 186h1v1h-1zM850 91h1v1h-1zM806 222h1v1h-1zM912 206h1v1h-1zM967 135h1v1h-1zM923 293h1v1h-1zM964 106h1v1h-1zM838 180h1v1h-1zM909 127h1v1h-1zM852 203h1v1h-1zM844 186h1v1h-1zM1008 217h1v1h-1zM891 256h1v1h-1zM1016 183h1v1h-1zM906 158h1v1h-1zM867 207h1v1h-1zM819 112h1v1h-1zM988 105h1v1h-1zM897 341h1v1h-1zM880 282h1v1h-1zM796 150h1v1h-1zM897 163h1v1h-1zM877 157h1v1h-1zM894 346h1v1h-1zM766 161h1v1h-1zM988 262h1v1h-1zM782 158h1v1h-1zM936 230h1v1h-1zM1016 215h1v1h-1zM1024 155h1v1h-1zM836 123h1v1h-1zM975 186h1v1h-1zM883 186h1v1h-1zM884 316h1v1h-1zM1030 179h1v1h-1zM1007 199h1v1h-1zM770 169h1v1h-1zM844 232h1v1h-1zM1006 288h1v1h-1zM1009 292h1v1h-1zM886 81h1v1h-1zM789 124h1v1h-1zM873 140h1v1h-1zM779 225h1v1h-1zM969 87h1v1h-1zM912 335h1v1h-1zM887 321h1v1h-1zM839 259h1v1h-1zM882 193h1v1h-1zM833 320h1v1h-1zM984 97h1v1h-1zM913 276h1v1h-1zM991 252h1v1h-1zM862 87h1v1h-1zM817 316h1v1h-1zM820 140h1v1h-1zM875 275h1v1h-1zM798 267h1v1h-1zM1036 218h1v1h-1zM993 283h1v1h-1zM869 217h1v1h-1zM881 126h1v1h-1zM1034 189h1v1h-1zM966 302h1v1h-1zM796 182h1v1h-1zM938 224h1v1h-1zM924 177h1v1h-1zM772 148h1v1h-1zM958 95h1v1h-1zM927 156h1v1h-1zM988 267h1v1h-1zM861 261h1v1h-1zM945 91h1v1h-1zM862 280h1v1h-1zM929 192h1v1h-1zM835 311h1v1h-1zM856 270h1v1h-1zM861 305h1v1h-1zM909 307h1v1h-1zM980 316h1v1h-1zM844 315h1v1h-1zM856 342h1v1h-1zM948 280h1v1h-1zM893 251h1v1h-1zM892 75h1v1h-1zM1017 159h1v1h-1zM886 328h1v1h-1zM953 177h1v1h-1zM889 118h1v1h-1zM936 95h1v1h-1zM830 250h1v1h-1zM822 189h1v1h-1zM916 262h1v1h-1zM982 108h1v1h-1zM947 232h1v1h-1zM883 331h1v1h-1zM780 220h1v1h-1zM953 188h1v1h-1zM848 143h1v1h-1zM1015 131h1v1h-1zM768 172h1v1h-1zM911 276h1v1h-1zM969 311h1v1h-1zM885 226h1v1h-1zM983 259h1v1h-1zM827 170h1v1h-1zM895 339h1v1h-1zM982 273h1v1h-1zM821 263h1v1h-1zM1016 248h1v1h-1zM867 118h1v1h-1zM901 255h1v1h-1zM928 176h1v1h-1zM904 100h1v1h-1zM932 128h1v1h-1zM943 186h1v1h-1zM884 112h1v1h-1zM970 127h1v1h-1zM952 318h1v1h-1zM948 234h1v1h-1zM897 320h1v1h-1zM895 179h1v1h-1zM833 272h1v1h-1zM855 309h1v1h-1zM837 245h1v1h-1zM874 332h1v1h-1zM799 241h1v1h-1zM968 143h1v1h-1zM996 197h1v1h-1zM1035 223h1v1h-1zM813 252h1v1h-1zM784 273h1v1h-1zM891 93h1v1h-1zM945 319h1v1h-1zM905 306h1v1h-1zM918 195h1v1h-1zM770 243h1v1h-1zM917 257h1v1h-1zM886 161h1v1h-1zM992 262h1v1h-1zM926 251h1v1h-1zM767 176h1v1h-1zM964 98h1v1h-1zM893 100h1v1h-1zM989 296h1v1h-1zM947 263h1v1h-1zM1011 205h1v1h-1zM910 319h1v1h-1zM936 308h1v1h-1zM850 204h1v1h-1zM868 198h1v1h-1zM864 186h1v1h-1zM887 243h1v1h-1zM912 172h1v1h-1zM954 146h1v1h-1zM850 148h1v1h-1zM833 236h1v1h-1zM902 255h1v1h-1zM964 212h1v1h-1zM939 339h1v1h-1zM1007 187h1v1h-1zM879 251h1v1h-1zM918 157h1v1h-1zM1015 130h1v1h-1zM804 224h1v1h-1zM809 297h1v1h-1zM772 149h1v1h-1zM963 312h1v1h-1zM779 242h1v1h-1zM881 269h1v1h-1zM1011 266h1v1h-1zM881 194h1v1h-1zM940 233h1v1h-1zM845 236h1v1h-1zM818 281h1v1h-1zM816 203h1v1h-1zM834 130h1v1h-1zM854 258h1v1h-1zM901 184h1v1h-1zM993 134h1v1h-1zM889 204h1v1h-1zM966 195h1v1h-1zM955 263h1v1h-1zM823 90h1v1h-1zM832 126h1v1h-1zM773 165h1v1h-1zM898 248h1v1h-1zM959 234h1v1h-1zM999 153h1v1h-1zM943 100h1v1h-1zM910 290h1v1h-1zM897 180h1v1h-1zM952 274h1v1h-1zM824 265h1v1h-1zM862 345h1v1h-1zM896 141h1v1h-1zM978 155h1v1h-1zM880 315h1v1h-1zM973 127h1v1h-1zM829 231h1v1h-1zM761 204h1v1h-1zM892 270h1v1h-1zM892 230h1v1h-1zM868 107h1v1h-1zM998 168h1v1h-1zM884 352h1v1h-1zM778 143h1v1h-1zM910 106h1v1h-1zM924 313h1v1h-1zM823 169h1v1h-1zM961 313h1v1h-1zM781 176h1v1h-1zM1033 195h1v1h-1zM893 162h1v1h-1zM900 193h1v1h-1zM842 79h1v1h-1zM838 341h1v1h-1zM812 104h1v1h-1zM890 249h1v1h-1zM910 98h1v1h-1zM784 252h1v1h-1zM887 191h1v1h-1zM1005 270h1v1h-1zM909 338h1v1h-1zM803 312h1v1h-1zM957 275h1v1h-1zM880 78h1v1h-1zM868 231h1v1h-1zM950 255h1v1h-1zM1011 207h1v1h-1zM938 296h1v1h-1zM933 225h1v1h-1zM894 100h1v1h-1zM916 114h1v1h-1zM887 237h1v1h-1zM861 158h1v1h-1zM860 90h1v1h-1zM907 171h1v1h-1zM842 243h1v1h-1zM806 145h1v1h-1zM825 256h1v1h-1zM931 159h1v1h-1zM958 114h1v1h-1zM916 341h1v1h-1zM856 76h1v1h-1zM841 230h1v1h-1zM786 121h1v1h-1zM916 286h1v1h-1zM994 178h1v1h-1zM1007 275h1v1h-1zM843 205h1v1h-1zM787 265h1v1h-1zM916 159h1v1h-1zM934 334h1v1h-1zM945 94h1v1h-1zM860 242h1v1h-1zM977 283h1v1h-1zM1010 124h1v1h-1zM814 298h1v1h-1zM975 305h1v1h-1zM966 262h1v1h-1zM1008 183h1v1h-1zM944 343h1v1h-1zM983 294h1v1h-1zM897 89h1v1h-1zM779 232h1v1h-1zM991 234h1v1h-1zM883 226h1v1h-1zM848 306h1v1h-1zM1003 122h1v1h-1zM871 161h1v1h-1zM824 124h1v1h-1zM880 199h1v1h-1zM785 160h1v1h-1zM771 241h1v1h-1zM880 331h1v1h-1zM930 298h1v1h-1zM858 340h1v1h-1zM852 316h1v1h-1zM895 188h1v1h-1zM789 120h1v1h-1zM1003 189h1v1h-1zM785 143h1v1h-1zM939 157h1v1h-1zM803 236h1v1h-1zM770 243h1v1h-1zM864 213h1v1h-1zM812 279h1v1h-1zM845 264h1v1h-1zM797 171h1v1h-1zM1024 227h1v1h-1zM972 259h1v1h-1zM759 239h1v1h-1zM913 208h1v1h-1zM858 173h1v1h-1zM844 131h1v1h-1zM839 304h1v1h-1zM894 125h1v1h-1zM884 242h1v1h-1zM935 223h1v1h-1zM787 171h1v1h-1zM936 224h1v1h-1zM961 168h1v1h-1zM826 102h1v1h-1zM888 283h1v1h-1zM943 275h1v1h-1zM894 299h1v1h-1zM820 325h1v1h-1zM815 114h1v1h-1zM929 329h1v1h-1zM965 186h1v1h-1zM1004 126h1v1h-1zM897 129h1v1h-1zM898 106h1v1h-1zM984 181h1v1h-1zM996 264h1v1h-1zM853 277h1v1h-1zM864 295h1v1h-1zM784 253h1v1h-1zM966 236h1v1h-1zM896 291h1v1h-1zM889 215h1v1h-1zM758 191h1v1h-1zM943 133h1v1h-1zM880 264h1v1h-1zM967 208h1v1h-1zM926 118h1v1h-1zM802 298h1v1h-1zM859 111h1v1h-1zM938 74h1v1h-1zM943 81h1v1h-1zM928 77h1v1h-1zM831 306h1v1h-1zM789 251h1v1h-1zM839 303h1v1h-1zM1010 227h1v1h-1zM865 76h1v1h-1zM954 287h1v1h-1zM869 343h1v1h-1zM957 177h1v1h-1zM1017 173h1v1h-1zM1006 255h1v1h-1zM825 329h1v1h-1zM954 115h1v1h-1zM837 195h1v1h-1zM994 127h1v1h-1zM973 305h1v1h-1zM941 253h1v1h-1zM931 277h1v1h-1zM800 220h1v1h-1zM815 100h1v1h-1zM873 132h1v1h-1zM1014 223h1v1h-1zM902 246h1v1h-1zM877 192h1v1h-1zM963 304h1v1h-1zM779 177h1v1h-1zM983 153h1v1h-1zM987 136h1v1h-1zM831 139h1v1h-1zM840 274h1v1h-1zM812 277h1v1h-1zM757 183h1v1h-1zM830 122h1v1h-1zM944 146h1v1h-1zM902 337h1v1h-1zM808 318h1v1h-1zM905 344h1v1h-1zM775 265h1v1h-1zM965 219h1v1h-1zM792 175h1v1h-1zM885 340h1v1h-1zM809 280h1v1h-1zM920 316h1v1h-1zM822 322h1v1h-1zM801 267h1v1h-1zM905 202h1v1h-1zM884 178h1v1h-1zM940 109h1v1h-1zM971 310h1v1h-1zM948 249h1v1h-1zM972 236h1v1h-1zM982 125h1v1h-1zM777 225h1v1h-1zM835 336h1v1h-1zM917 270h1v1h-1zM866 116h1v1h-1zM942 82h1v1h-1zM912 250h1v1h-1zM999 183h1v1h-1zM943 274h1v1h-1zM934 192h1v1h-1zM939 254h1v1h-1zM906 173h1v1h-1zM780 227h1v1h-1zM846 320h1v1h-1zM928 93h1v1h-1zM799 175h1v1h-1zM881 204h1v1h-1zM969 257h1v1h-1zM957 111h1v1h-1zM898 115h1v1h-1zM795 269h1v1h-1zM867 194h1v1h-1zM920 82h1v1h-1zM914 142h1v1h-1zM831 212h1v1h-1zM896 95h1v1h-1zM954 108h1v1h-1zM926 77h1v1h-1zM860 345h1v1h-1zM966 237h1v1h-1zM790 154h1v1h-1zM794 291h1v1h-1zM823 259h1v1h-1zM981 289h1v1h-1zM812 293h1v1h-1zM915 102h1v1h-1zM811 248h1v1h-1zM812 269h1v1h-1zM910 352h1v1h-1zM810 174h1v1h-1zM801 278h1v1h-1zM917 340h1v1h-1zM823 129h1v1h-1zM831 206h1v1h-1zM993 274h1v1h-1zM945 168h1v1h-1zM975 264h1v1h-1zM837 231h1v1h-1zM929 149h1v1h-1zM931 259h1v1h-1zM1018 264h1v1h-1zM983 302h1v1h-1zM935 141h1v1h-1zM998 268h1v1h-1zM919 112h1v1h-1zM1002 185h1v1h-1zM885 245h1v1h-1zM962 89h1v1h-1zM883 98h1v1h-1zM882 259h1v1h-1zM876 175h1v1h-1zM973 99h1v1h-1zM963 337h1v1h-1zM985 264h1v1h-1zM1001 126h1v1h-1zM870 161h1v1h-1zM804 222h1v1h-1zM1008 142h1v1h-1zM769 246h1v1h-1zM1002 236h1v1h-1zM1002 143h1v1h-1zM980 248h1v1h-1zM906 116h1v1h-1zM878 145h1v1h-1zM863 168h1v1h-1zM1025 242h1v1h-1zM813 149h1v1h-1zM849 152h1v1h-1zM940 232h1v1h-1zM938 121h1v1h-1zM900 201h1v1h-1zM808 193h1v1h-1zM935 76h1v1h-1zM840 341h1v1h-1zM881 216h1v1h-1zM898 195h1v1h-1zM886 314h1v1h-1zM790 205h1v1h-1zM766 211h1v1h-1zM894 326h1v1h-1zM829 265h1v1h-1zM819 111h1v1h-1zM1025 199h1v1h-1zM908 93h1v1h-1zM970 251h1v1h-1zM1029 185h1v1h-1zM998 297h1v1h-1zM941 242h1v1h-1zM862 324h1v1h-1zM930 184h1v1h-1zM808 102h1v1h-1zM813 165h1v1h-1zM940 224h1v1h-1zM933 138h1v1h-1zM963 139h1v1h-1zM791 289h1v1h-1zM1021 160h1v1h-1zM933 321h1v1h-1zM853 118h1v1h-1zM965 137h1v1h-1zM1000 164h1v1h-1zM821 219h1v1h-1zM883 237h1v1h-1zM864 205h1v1h-1zM831 284h1v1h-1zM913 152h1v1h-1zM807 123h1v1h-1zM904 220h1v1h-1zM847 332h1v1h-1zM942 100h1v1h-1zM862 268h1v1h-1zM870 274h1v1h-1zM931 237h1v1h-1zM864 243h1v1h-1zM875 200h1v1h-1zM776 255h1v1h-1zM1021 237h1v1h-1zM1018 246h1v1h-1zM984 186h1v1h-1zM964 155h1v1h-1zM854 142h1v1h-1zM860 195h1v1h-1zM983 311h1v1h-1zM865 236h1v1h-1zM846 187h1v1h-1zM885 333h1v1h-1zM882 77h1v1h-1zM846 225h1v1h-1zM870 99h1v1h-1zM906 326h1v1h-1zM920 170h1v1h-1zM769 192h1v1h-1zM877 292h1v1h-1zM863 88h1v1h-1zM822 255h1v1h-1zM934 101h1v1h-1zM789 264h1v1h-1zM821 280h1v1h-1zM871 239h1v1h-1zM857 260h1v1h-1zM898 353h1v1h-1zM946 99h1v1h-1zM969 147h1v1h-1zM825 100h1v1h-1zM857 147h1v1h-1zM1004 181h1v1h-1zM915 241h1v1h-1zM822 135h1v1h-1zM824 229h1v1h-1zM773 164h1v1h-1zM873 135h1v1h-1zM873 298h1v1h-1zM940 256h1v1h-1zM813 205h1v1h-1zM826 102h1v1h-1zM846 243h1v1h-1zM909 230h1v1h-1zM845 128h1v1h-1zM892 335h1v1h-1zM886 113h1v1h-1zM793 180h1v1h-1zM910 323h1v1h-1zM847 148h1v1h-1zM921 119h1v1h-1zM902 313h1v1h-1zM987 245h1v1h-1zM1002 304h1v1h-1zM771 163h1v1h-1zM827 306h1v1h-1zM778 210h1v1h-1zM835 89h1v1h-1zM840 271h1v1h-1zM860 76h1v1h-1zM764 178h1v1h-1zM969 321h1v1h-1zM764 159h1v1h-1zM927 73h1v1h-1zM837 221h1v1h-1zM773 238h1v1h-1zM885 353h1v1h-1zM941 308h1v1h-1zM880 228h1v1h-1zM837 248h1v1h-1zM825 279h1v1h-1zM987 197h1v1h-1zM922 317h1v1h-1zM871 149h1v1h-1zM1039 213h1v1h-1zM839 226h1v1h-1zM872 350h1v1h-1zM958 146h1v1h-1zM925 211h1v1h-1zM929 311h1v1h-1zM1006 271h1v1h-1zM889 320h1v1h-1zM798 229h1v1h-1zM783 139h1v1h-1zM765 209h1v1h-1zM895 91h1v1h-1zM872 270h1v1h-1zM773 196h1v1h-1zM851 324h1v1h-1zM804 284h1v1h-1zM829 214h1v1h-1zM913 323h1v1h-1zM1009 241h1v1h-1zM852 176h1v1h-1zM980 218h1v1h-1zM817 192h1v1h-1zM892 218h1v1h-1zM842 126h1v1h-1zM995 221h1v1h-1zM876 88h1v1h-1zM927 307h1v1h-1zM956 99h1v1h-1zM833 122h1v1h-1zM884 213h1v1h-1zM951 225h1v1h-1zM882 161h1v1h-1zM885 130h1v1h-1zM781 289h1v1h-1zM960 267h1v1h-1zM867 262h1v1h-1zM932 86h1v1h-1zM1007 183h1v1h-1zM870 126h1v1h-1zM830 330h1v1h-1zM972 227h1v1h-1zM990 205h1v1h-1zM847 79h1v1h-1zM888 118h1v1h-1zM921 234h1v1h-1zM900 338h1v1h-1zM907 303h1v1h-1zM781 236h1v1h-1zM807 209h1v1h-1zM863 333h1v1h-1zM879 213h1v1h-1zM854 252h1v1h-1zM875 288h1v1h-1zM919 269h1v1h-1zM787 239h1v1h-1zM778 247h1v1h-1zM903 335h1v1h-1zM862 274h1v1h-1zM872 308h1v1h-1zM792 128h1v1h-1zM971 287h1v1h-1zM995 278h1v1h-1zM880 343h1v1h-1zM848 159h1v1h-1zM781 142h1v1h-1zM891 229h1v1h-1zM889 87h1v1h-1zM783 287h1v1h-1zM806 309h1v1h-1zM851 195h1v1h-1zM889 303h1v1h-1zM976 131h1v1h-1zM969 321h1v1h-1zM877 272h1v1h-1zM874 275h1v1h-1zM877 94h1v1h-1zM994 272h1v1h-1zM789 266h1v1h-1zM991 120h1v1h-1zM858 191h1v1h-1zM1001 227h1v1h-1zM813 237h1v1h-1zM907 77h1v1h-1zM865 326h1v1h-1zM962 270h1v1h-1zM850 197h1v1h-1zM889 295h1v1h-1zM858 253h1v1h-1zM975 170h1v1h-1zM983 288h1v1h-1zM913 174h1v1h-1zM907 111h1v1h-1zM985 308h1v1h-1zM944 324h1v1h-1zM957 104h1v1h-1zM868 217h1v1h-1zM869 298h1v1h-1zM974 174h1v1h-1zM904 181h1v1h-1zM965 242h1v1h-1zM970 198h1v1h-1zM798 260h1v1h-1zM865 269h1v1h-1zM905 166h1v1h-1zM974 96h1v1h-1zM862 266h1v1h-1zM786 239h1v1h-1zM938 310h1v1h-1zM880 197h1v1h-1zM918 326h1v1h-1zM763 206h1v1h-1zM927 336h1v1h-1zM1005 233h1v1h-1zM837 319h1v1h-1zM1001 214h1v1h-1zM967 140h1v1h-1zM987 302h1v1h-1zM900 246h1v1h-1zM973 92h1v1h-1zM905 345h1v1h-1zM838 252h1v1h-1zM862 260h1v1h-1zM892 140h1v1h-1zM935 341h1v1h-1zM1028 257h1v1h-1zM955 273h1v1h-1zM828 225h1v1h-1zM879 171h1v1h-1zM843 79h1v1h-1zM812 109h1v1h-1zM765 163h1v1h-1zM887 76h1v1h-1zM766 215h1v1h-1zM921 174h1v1h-1zM937 230h1v1h-1zM924 177h1v1h-1zM994 226h1v1h-1zM896 324h1v1h-1zM935 180h1v1h-1zM1032 180h1v1h-1zM915 142h1v1h-1zM926 291h1v1h-1zM972 155h1v1h-1zM845 153h1v1h-1zM994 247h1v1h-1zM930 176h1v1h-1zM915 181h1v1h-1zM997 252h1v1h-1zM782 183h1v1h-1zM917 88h1v1h-1zM932 317h1v1h-1zM1025 263h1v1h-1zM891 88h1v1h-1zM830 231h1v1h-1zM899 179h1v1h-1zM934 193h1v1h-1zM879 215h1v1h-1zM905 199h1v1h-1zM938 224h1v1h-1zM965 154h1v1h-1zM889 154h1v1h-1zM809 149h1v1h-1zM801 306h1v1h-1zM1014 163h1v1h-1zM911 345h1v1h-1zM979 322h1v1h-1zM877 277h1v1h-1zM951 251h1v1h-1zM1010 201h1v1h-1zM991 293h1v1h-1zM866 211h1v1h-1zM763 217h1v1h-1zM906 266h1v1h-1zM985 212h1v1h-1zM1019 163h1v1h-1zM988 256h1v1h-1zM984 112h1v1h-1zM955 322h1v1h-1zM1035 182h1v1h-1zM851 104h1v1h-1zM808 192h1v1h-1zM1025 237h1v1h-1zM910 85h1v1h-1zM900 330h1v1h-1zM934 104h1v1h-1zM951 122h1v1h-1zM780 154h1v1h-1zM876 321h1v1h-1zM862 294h1v1h-1zM1030 238h1v1h-1zM864 175h1v1h-1zM789 190h1v1h-1zM911 236h1v1h-1zM846 200h1v1h-1zM848 180h1v1h-1zM836 95h1v1h-1zM928 83h1v1h-1zM823 169h1v1h-1zM994 230h1v1h-1zM884 160h1v1h-1zM915 124h1v1h-1zM1040 221h1v1h-1zM948 195h1v1h-1zM950 160h1v1h-1zM964 319h1v1h-1zM770 188h1v1h-1zM894 204h1v1h-1zM854 108h1v1h-1zM785 194h1v1h-1zM847 187h1v1h-1zM947 214h1v1h-1zM813 262h1v1h-1zM915 318h1v1h-1zM962 317h1v1h-1zM948 128h1v1h-1zM1023 195h1v1h-1zM766 250h1v1h-1zM920 265h1v1h-1zM827 158h1v1h-1zM856 322h1v1h-1zM981 163h1v1h-1zM849 262h1v1h-1zM991 181h1v1h-1zM975 258h1v1h-1zM835 252h1v1h-1zM778 245h1v1h-1zM786 141h1v1h-1zM893 149h1v1h-1zM875 261h1v1h-1zM826 110h1v1h-1zM775 137h1v1h-1zM927 85h1v1h-1zM809 183h1v1h-1zM898 158h1v1h-1zM849 296h1v1h-1zM809 289h1v1h-1zM854 103h1v1h-1zM1019 152h1v1h-1zM788 152h1v1h-1zM1026 258h1v1h-1zM961 142h1v1h-1zM945 326h1v1h-1zM801 264h1v1h-1zM909 86h1v1h-1zM766 165h1v1h-1zM923 70h1v1h-1zM968 266h1v1h-1zM900 343h1v1h-1zM898 133h1v1h-1zM834 262h1v1h-1zM942 121h1v1h-1zM772 201h1v1h-1zM897 218h1v1h-1zM901 191h1v1h-1zM802 161h1v1h-1zM953 240h1v1h-1zM880 123h1v1h-1zM964 251h1v1h-1zM894 185h1v1h-1zM999 204h1v1h-1zM825 198h1v1h-1zM958 320h1v1h-1zM819 97h1v1h-1zM974 209h1v1h-1zM858 231h1v1h-1zM951 164h1v1h-1zM889 295h1v1h-1zM767 200h1v1h-1zM847 253h1v1h-1zM1011 163h1v1h-1zM1029 200h1v1h-1zM853 260h1v1h-1zM1037 239h1v1h-1zM920 206h1v1h-1zM972 185h1v1h-1zM998 157h1v1h-1zM989 308h1v1h-1zM967 203h1v1h-1zM955 189h1v1h-1zM912 303h1v1h-1zM855 130h1v1h-1zM834 84h1v1h-1zM967 277h1v1h-1zM851 249h1v1h-1zM781 255h1v1h-1zM823 301h1v1h-1zM883 196h1v1h-1zM942 123h1v1h-1zM995 183h1v1h-1zM834 98h1v1h-1zM834 338h1v1h-1zM930 131h1v1h-1zM799 242h1v1h-1zM813 256h1v1h-1zM942 284h1v1h-1zM1035 189h1v1h-1zM919 212h1v1h-1zM979 212h1v1h-1zM969 305h1v1h-1zM977 309h1v1h-1zM886 312h1v1h-1zM1012 146h1v1h-1zM1013 202h1v1h-1zM819 250h1v1h-1zM939 115h1v1h-1zM900 103h1v1h-1zM967 209h1v1h-1zM953 313h1v1h-1zM955 311h1v1h-1zM934 107h1v1h-1zM956 339h1v1h-1zM792 143h1v1h-1zM979 142h1v1h-1zM968 116h1v1h-1zM869 141h1v1h-1zM979 217h1v1h-1zM911 254h1v1h-1zM948 175h1v1h-1zM838 313h1v1h-1zM824 133h1v1h-1zM835 135h1v1h-1zM810 98h1v1h-1zM831 175h1v1h-1zM922 294h1v1h-1zM845 92h1v1h-1zM896 90h1v1h-1zM923 139h1v1h-1zM969 104h1v1h-1zM771 236h1v1h-1zM992 271h1v1h-1zM857 89h1v1h-1zM843 306h1v1h-1zM1005 220h1v1h-1zM909 279h1v1h-1zM858 103h1v1h-1zM966 146h1v1h-1zM986 158h1v1h-1zM916 96h1v1h-1zM965 86h1v1h-1zM1010 188h1v1h-1zM897 193h1v1h-1zM1016 228h1v1h-1zM838 200h1v1h-1zM876 238h1v1h-1zM967 180h1v1h-1zM812 326h1v1h-1zM800 184h1v1h-1zM838 190h1v1h-1zM967 320h1v1h-1zM1000 252h1v1h-1zM853 254h1v1h-1zM791 156h1v1h-1zM867 192h1v1h-1zM817 112h1v1h-1zM973 274h1v1h-1zM873 257h1v1h-1zM962 253h1v1h-1zM815 194h1v1h-1zM932 304h1v1h-1zM889 144h1v1h-1zM899 263h1v1h-1zM774 194h1v1h-1zM948 227h1v1h-1zM803 154h1v1h-1zM906 259h1v1h-1zM811 138h1v1h-1zM1025 196h1v1h-1zM1002 181h1v1h-1zM932 308h1v1h-1zM855 214h1v1h-1zM969 208h1v1h-1zM908 311h1v1h-1zM767 173h1v1h-1zM918 320h1v1h-1zM813 280h1v1h-1zM875 298h1v1h-1zM991 315h1v1h-1zM915 229h1v1h-1zM967 290h1v1h-1zM933 198h1v1h-1zM820 250h1v1h-1zM815 130h1v1h-1zM926 112h1v1h-1zM799 157h1v1h-1zM962 146h1v1h-1zM905 228h1v1h-1zM903 216h1v1h-1zM792 298h1v1h-1zM819 226h1v1h-1zM813 146h1v1h-1zM963 329h1v1h-1zM979 113h1v1h-1zM826 90h1v1h-1zM834 224h1v1h-1zM810 290h1v1h-1zM823 304h1v1h-1zM895 235h1v1h-1zM805 237h1v1h-1zM945 113h1v1h-1zM860 101h1v1h-1zM930 202h1v1h-1zM845 277h1v1h-1zM920 332h1v1h-1zM856 285h1v1h-1zM883 96h1v1h-1zM990 120h1v1h-1zM853 338h1v1h-1zM946 147h1v1h-1zM995 291h1v1h-1zM843 319h1v1h-1zM858 127h1v1h-1zM939 150h1v1h-1zM970 184h1v1h-1zM994 131h1v1h-1zM932 112h1v1h-1zM875 211h1v1h-1zM1027 244h1v1h-1zM975 299h1v1h-1zM941 299h1v1h-1zM1010 233h1v1h-1zM826 144h1v1h-1zM935 82h1v1h-1zM969 180h1v1h-1zM931 81h1v1h-1zM793 228h1v1h-1zM866 254h1v1h-1zM810 225h1v1h-1zM822 96h1v1h-1zM947 238h1v1h-1zM842 160h1v1h-1zM805 240h1v1h-1zM870 161h1v1h-1zM794 168h1v1h-1zM848 259h1v1h-1zM913 306h1v1h-1zM798 221h1v1h-1zM1002 247h1v1h-1zM797 307h1v1h-1zM803 200h1v1h-1zM784 218h1v1h-1zM927 337h1v1h-1zM800 153h1v1h-1zM920 168h1v1h-1zM866 128h1v1h-1zM986 220h1v1h-1zM978 104h1v1h-1zM915 170h1v1h-1zM796 278h1v1h-1zM777 217h1v1h-1zM898 215h1v1h-1zM966 270h1v1h-1zM791 278h1v1h-1zM788 276h1v1h-1zM877 272h1v1h-1zM926 290h1v1h-1zM868 321h1v1h-1zM909 277h1v1h-1zM890 345h1v1h-1zM901 270h1v1h-1zM900 254h1v1h-1zM775 237h1v1h-1zM1003 259h1v1h-1zM799 204h1v1h-1zM903 218h1v1h-1zM832 124h1v1h-1zM873 81h1v1h-1zM766 250h1v1h-1zM966 117h1v1h-1zM1004 115h1v1h-1zM928 263h1v1h-1zM890 323h1v1h-1zM951 138h1v1h-1zM905 302h1v1h-1zM819 258h1v1h-1zM1040 204h1v1h-1zM825 316h1v1h-1zM809 223h1v1h-1zM920 181h1v1h-1zM945 206h1v1h-1zM793 275h1v1h-1zM997 193h1v1h-1zM925 153h1v1h-1zM805 261h1v1h-1zM988 129h1v1h-1zM980 130h1v1h-1zM891 348h1v1h-1zM1008 122h1v1h-1zM845 236h1v1h-1zM948 276h1v1h-1zM820 225h1v1h-1zM868 191h1v1h-1zM853 301h1v1h-1zM998 244h1v1h-1zM902 225h1v1h-1zM798 173h1v1h-1zM773 187h1v1h-1zM803 190h1v1h-1zM812 107h1v1h-1zM886 346h1v1h-1zM804 293h1v1h-1zM894 307h1v1h-1zM817 245h1v1h-1zM1012 204h1v1h-1zM1020 232h1v1h-1zM821 141h1v1h-1zM883 174h1v1h-1zM841 181h1v1h-1zM961 237h1v1h-1zM774 267h1v1h-1zM980 168h1v1h-1zM914 288h1v1h-1zM940 96h1v1h-1zM786 259h1v1h-1zM959 302h1v1h-1zM857 142h1v1h-1zM983 292h1v1h-1zM955 191h1v1h-1zM868 136h1v1h-1zM865 278h1v1h-1zM840 223h1v1h-1zM841 247h1v1h-1zM794 239h1v1h-1zM788 244h1v1h-1zM988 301h1v1h-1zM939 252h1v1h-1zM917 317h1v1h-1zM1000 167h1v1h-1zM769 173h1v1h-1zM988 269h1v1h-1zM918 245h1v1h-1zM783 268h1v1h-1zM913 206h1v1h-1zM908 268h1v1h-1zM815 112h1v1h-1zM1013 282h1v1h-1zM934 89h1v1h-1zM925 166h1v1h-1zM1023 220h1v1h-1zM867 232h1v1h-1zM906 279h1v1h-1zM901 239h1v1h-1zM888 339h1v1h-1zM935 99h1v1h-1zM960 244h1v1h-1zM897 134h1v1h-1zM911 259h1v1h-1zM780 243h1v1h-1zM818 192h1v1h-1zM832 121h1v1h-1zM976 303h1v1h-1zM820 262h1v1h-1zM912 327h1v1h-1zM889 96h1v1h-1zM977 263h1v1h-1zM884 114h1v1h-1zM863 153h1v1h-1zM906 298h1v1h-1zM970 229h1v1h-1zM881 249h1v1h-1zM998 116h1v1h-1zM1014 130h1v1h-1zM866 335h1v1h-1zM980 319h1v1h-1zM889 86h1v1h-1zM991 125h1v1h-1zM920 156h1v1h-1zM964 234h1v1h-1zM816 277h1v1h-1zM893 213h1v1h-1zM902 244h1v1h-1zM795 268h1v1h-1zM939 170h1v1h-1zM803 112h1v1h-1zM993 149h1v1h-1zM777 237h1v1h-1zM951 217h1v1h-1zM891 185h1v1h-1zM795 179h1v1h-1zM1004 281h1v1h-1zM963 254h1v1h-1zM1032 226h1v1h-1zM908 162h1v1h-1zM804 303h1v1h-1zM767 248h1v1h-1zM876 130h1v1h-1zM871 231h1v1h-1zM855 191h1v1h-1zM903 145h1v1h-1zM806 176h1v1h-1zM778 254h1v1h-1zM862 100h1v1h-1zM839 217h1v1h-1zM933 108h1v1h-1zM934 89h1v1h-1zM856 287h1v1h-1zM874 181h1v1h-1zM801 249h1v1h-1zM1025 218h1v1h-1zM780 130h1v1h-1zM978 116h1v1h-1zM886 291h1v1h-1zM815 190h1v1h-1zM953 201h1v1h-1zM1026 189h1v1h-1zM981 138h1v1h-1zM1000 180h1v1h-1zM853 129h1v1h-1zM998 210h1v1h-1zM866 349h1v1h-1zM928 279h1v1h-1zM988 265h1v1h-1zM872 153h1v1h-1zM784 296h1v1h-1zM816 307h1v1h-1zM794 243h1v1h-1zM995 279h1v1h-1zM822 211h1v1h-1zM882 136h1v1h-1zM907 297h1v1h-1zM825 270h1v1h-1zM1002 161h1v1h-1zM1004 176h1v1h-1zM914 242h1v1h-1zM855 94h1v1h-1zM979 300h1v1h-1zM994 290h1v1h-1zM821 214h1v1h-1zM892 286h1v1h-1zM901 164h1v1h-1zM891 220h1v1h-1zM1010 140h1v1h-1zM785 253h1v1h-1zM988 107h1v1h-1zM965 311h1v1h-1zM858 109h1v1h-1zM945 300h1v1h-1zM1010 291h1v1h-1zM780 128h1v1h-1zM960 140h1v1h-1zM986 98h1v1h-1zM822 127h1v1h-1zM969 121h1v1h-1zM822 120h1v1h-1zM833 207h1v1h-1zM763 168h1v1h-1zM929 286h1v1h-1zM801 135h1v1h-1zM786 198h1v1h-1zM833 89h1v1h-1zM928 275h1v1h-1zM1014 171h1v1h-1zM992 170h1v1h-1zM860 74h1v1h-1zM799 271h1v1h-1zM931 241h1v1h-1zM878 161h1v1h-1zM854 336h1v1h-1zM895 353h1v1h-1zM900 200h1v1h-1zM853 198h1v1h-1zM860 347h1v1h-1zM929 152h1v1h-1zM883 85h1v1h-1zM910 124h1v1h-1zM772 192h1v1h-1zM875 100h1v1h-1zM803 163h1v1h-1zM824 305h1v1h-1zM891 162h1v1h-1zM840 190h1v1h-1zM870 231h1v1h-1zM803 260h1v1h-1zM897 192h1v1h-1zM952 151h1v1h-1zM867 80h1v1h-1zM876 253h1v1h-1zM812 288h1v1h-1zM903 331h1v1h-1zM1034 186h1v1h-1zM901 129h1v1h-1zM977 225h1v1h-1zM806 216h1v1h-1zM993 157h1v1h-1zM795 182h1v1h-1zM894 169h1v1h-1zM792 157h1v1h-1zM1020 154h1v1h-1zM997 307h1v1h-1zM824 217h1v1h-1zM862 207h1v1h-1zM803 219h1v1h-1zM889 347h1v1h-1zM858 213h1v1h-1zM909 256h1v1h-1zM973 318h1v1h-1zM934 140h1v1h-1zM1017 239h1v1h-1zM832 262h1v1h-1zM976 110h1v1h-1zM914 183h1v1h-1zM975 314h1v1h-1zM1032 251h1v1h-1zM1038 203h1v1h-1zM777 285h1v1h-1zM997 312h1v1h-1zM837 266h1v1h-1zM1013 249h1v1h-1zM904 150h1v1h-1zM842 159h1v1h-1zM839 330h1v1h-1zM865 215h1v1h-1zM797 297h1v1h-1zM854 295h1v1h-1zM791 301h1v1h-1zM835 248h1v1h-1zM941 291h1v1h-1zM898 124h1v1h-1zM917 162h1v1h-1zM890 240h1v1h-1zM775 187h1v1h-1zM1001 242h1v1h-1zM899 318h1v1h-1zM833 292h1v1h-1zM870 172h1v1h-1zM976 184h1v1h-1zM968 245h1v1h-1zM890 304h1v1h-1zM994 156h1v1h-1zM873 345h1v1h-1zM923 250h1v1h-1zM882 288h1v1h-1zM975 320h1v1h-1zM883 201h1v1h-1zM947 290h1v1h-1zM953 271h1v1h-1zM968 139h1v1h-1zM871 143h1v1h-1zM851 113h1v1h-1zM934 129h1v1h-1zM779 207h1v1h-1zM767 156h1v1h-1zM1005 119h1v1h-1zM836 233h1v1h-1zM952 227h1v1h-1zM874 120h1v1h-1zM769 188h1v1h-1zM995 256h1v1h-1zM937 311h1v1h-1zM808 278h1v1h-1zM970 313h1v1h-1zM866 168h1v1h-1zM833 317h1v1h-1zM1000 205h1v1h-1zM870 95h1v1h-1zM798 189h1v1h-1zM780 161h1v1h-1zM921 324h1v1h-1zM955 118h1v1h-1zM868 71h1v1h-1zM886 82h1v1h-1zM922 189h1v1h-1zM998 299h1v1h-1zM852 326h1v1h-1zM842 194h1v1h-1zM795 118h1v1h-1zM852 200h1v1h-1zM980 233h1v1h-1zM827 302h1v1h-1zM1035 184h1v1h-1zM853 286h1v1h-1zM1022 193h1v1h-1zM817 108h1v1h-1zM1011 180h1v1h-1zM881 211h1v1h-1zM973 297h1v1h-1zM884 71h1v1h-1zM1004 270h1v1h-1zM887 129h1v1h-1zM959 232h1v1h-1zM960 228h1v1h-1zM934 266h1v1h-1zM864 247h1v1h-1zM905 328h1v1h-1zM827 300h1v1h-1zM881 272h1v1h-1zM761 192h1v1h-1zM915 332h1v1h-1zM969 332h1v1h-1zM805 317h1v1h-1zM1003 195h1v1h-1zM904 285h1v1h-1zM933 145h1v1h-1zM812 268h1v1h-1zM865 131h1v1h-1zM1037 220h1v1h-1zM1005 153h1v1h-1zM982 185h1v1h-1zM871 304h1v1h-1zM846 334h1v1h-1zM1019 160h1v1h-1zM866 100h1v1h-1zM848 213h1v1h-1zM987 279h1v1h-1zM962 302h1v1h-1zM1024 253h1v1h-1zM854 108h1v1h-1zM878 118h1v1h-1zM787 213h1v1h-1zM879 143h1v1h-1zM932 285h1v1h-1zM874 154h1v1h-1zM907 69h1v1h-1zM822 229h1v1h-1zM991 226h1v1h-1zM1011 295h1v1h-1zM786 285h1v1h-1zM960 295h1v1h-1zM897 226h1v1h-1zM858 203h1v1h-1zM965 185h1v1h-1zM971 252h1v1h-1zM895 71h1v1h-1zM894 309h1v1h-1zM895 75h1v1h-1zM831 101h1v1h-1zM904 243h1v1h-1zM1019 157h1v1h-1zM945 181h1v1h-1zM1005 236h1v1h-1zM900 138h1v1h-1zM983 197h1v1h-1zM782 280h1v1h-1zM997 260h1v1h-1zM787 158h1v1h-1zM1019 215h1v1h-1zM940 319h1v1h-1zM775 241h1v1h-1zM991 183h1v1h-1zM857 331h1v1h-1zM888 196h1v1h-1zM992 189h1v1h-1zM932 348h1v1h-1zM966 142h1v1h-1zM881 163h1v1h-1zM812 265h1v1h-1zM984 272h1v1h-1zM823 257h1v1h-1zM919 212h1v1h-1zM930 190h1v1h-1zM852 287h1v1h-1zM957 157h1v1h-1zM797 122h1v1h-1zM831 220h1v1h-1zM949 254h1v1h-1z"/><path fill="#444" fill-opacity="0.55" d="M945 191h1v1h-1zM923 221h1v1h-1zM937 190h1v1h-1zM834 146h1v1h-1zM956 113h1v1h-1zM900 247h1v1h-1zM887 156h1v1h-1zM971 171h1v1h-1zM805 319h1v1h-1zM890 262h1v1h-1zM983 277h1v1h-1zM838 300h1v1h-1zM938 233h1v1h-1zM956 250h1v1h-1zM790 282h1v1h-1zM827 229h1v1h-1zM872 145h1v1h-1zM963 295h1v1h-1zM876 205h1v1h-1zM1022 224h1v1h-1zM922 244h1v1h-1zM917 190h1v1h-1zM792 234h1v1h-1zM777 156h1v1h-1zM944 221h1v1h-1zM871 159h1v1h-1zM966 212h1v1h-1zM810 256h1v1h-1zM833 114h1v1h-1zM1003 147h1v1h-1zM904 289h1v1h-1zM1019 224h1v1h-1zM943 210h1v1h-1zM951 164h1v1h-1zM806 287h1v1h-1zM831 104h1v1h-1zM985 200h1v1h-1zM821 202h1v1h-1zM827 310h1v1h-1zM805 153h1v1h-1zM985 292h1v1h-1zM755 216h1v1h-1zM809 265h1v1h-1zM997 231h1v1h-1zM898 188h1v1h-1zM913 332h1v1h-1zM900 239h1v1h-1zM952 305h1v1h-1zM949 221h1v1h-1zM975 275h1v1h-1zM801 241h1v1h-1zM982 172h1v1h-1zM971 185h1v1h-1zM876 151h1v1h-1zM995 235h1v1h-1zM950 260h1v1h-1zM954 296h1v1h-1zM838 204h1v1h-1zM985 106h1v1h-1zM899 327h1v1h-1zM776 276h1v1h-1zM843 227h1v1h-1zM853 321h1v1h-1zM951 158h1v1h-1zM994 121h1v1h-1zM845 326h1v1h-1zM840 301h1v1h-1zM859 150h1v1h-1zM986 202h1v1h-1zM1004 161h1v1h-1zM837 228h1v1h-1zM860 194h1v1h-1zM968 299h1v1h-1zM825 127h1v1h-1zM909 101h1v1h-1zM897 109h1v1h-1zM845 218h1v1h-1zM841 83h1v1h-1zM844 104h1v1h-1zM947 277h1v1h-1zM814 183h1v1h-1zM884 107h1v1h-1zM949 171h1v1h-1zM951 312h1v1h-1zM915 84h1v1h-1zM834 258h1v1h-1zM866 290h1v1h-1zM889 147h1v1h-1zM791 300h1v1h-1zM792 197h1v1h-1zM980 323h1v1h-1zM988 276h1v1h-1zM980 157h1v1h-1zM923 290h1v1h-1zM823 205h1v1h-1zM976 319h1v1h-1zM929 80h1v1h-1zM904 302h1v1h-1zM864 152h1v1h-1zM976 176h1v1h-1zM892 251h1v1h-1zM899 348h1v1h-1zM794 230h1v1h-1zM780 137h1v1h-1zM784 209h1v1h-1zM904 310h1v1h-1zM856 73h1v1h-1zM935 296h1v1h-1zM975 91h1v1h-1zM861 80h1v1h-1zM907 131h1v1h-1zM866 350h1v1h-1zM831 313h1v1h-1zM886 253h1v1h-1zM997 207h1v1h-1zM850 288h1v1h-1zM884 257h1v1h-1zM856 324h1v1h-1zM944 337h1v1h-1zM905 229h1v1h-1zM888 246h1v1h-1zM822 131h1v1h-1zM842 114h1v1h-1zM950 337h1v1h-1zM926 257h1v1h-1zM916 92h1v1h-1zM876 122h1v1h-1zM946 231h1v1h-1zM904 70h1v1h-1zM972 223h1v1h-1zM860 297h1v1h-1zM793 218h1v1h-1zM897 78h1v1h-1zM925 114h1v1h-1zM796 304h1v1h-1zM838 337h1v1h-1zM934 112h1v1h-1zM901 128h1v1h-1zM862 310h1v1h-1zM825 107h1v1h-1zM952 287h1v1h-1zM956 213h1v1h-1zM776 270h1v1h-1zM811 127h1v1h-1zM788 118h1v1h-1zM994 281h1v1h-1zM864 187h1v1h-1zM862 270h1v1h-1zM827 245h1v1h-1zM795 282h1v1h-1zM932 95h1v1h-1zM977 166h1v1h-1zM949 300h1v1h-1zM1015 248h1v1h-1zM787 227h1v1h-1zM822 269h1v1h-1zM860 319h1v1h-1zM911 267h1v1h-1zM981 139h1v1h-1zM840 270h1v1h-1zM900 84h1v1h-1zM800 286h1v1h-1zM865 276h1v1h-1zM789 299h1v1h-1zM845 161h1v1h-1zM999 157h1v1h-1zM1031 196h1v1h-1zM825 178h1v1h-1zM874 80h1v1h-1zM906 174h1v1h-1zM910 353h1v1h-1zM1011 202h1v1h-1zM1035 185h1v1h-1zM956 188h1v1h-1zM882 95h1v1h-1zM897 305h1v1h-1zM796 140h1v1h-1zM894 140h1v1h-1zM983 323h1v1h-1zM948 284h1v1h-1zM936 158h1v1h-1zM910 100h1v1h-1zM876 311h1v1h-1zM981 312h1v1h-1zM915 184h1v1h-1zM991 168h1v1h-1zM1007 298h1v1h-1zM932 240h1v1h-1zM810 246h1v1h-1zM824 131h1v1h-1zM931 154h1v1h-1zM966 284h1v1h-1zM810 215h1v1h-1zM767 194h1v1h-1zM813 256h1v1h-1zM939 336h1v1h-1zM905 187h1v1h-1zM849 97h1v1h-1zM1008 225h1v1h-1zM865 253h1v1h-1zM915 172h1v1h-1zM842 268h1v1h-1zM929 123h1v1h-1zM951 234h1v1h-1zM978 148h1v1h-1zM886 288h1v1h-1zM885 307h1v1h-1zM788 174h1v1h-1zM771 184h1v1h-1zM945 181h1v1h-1zM1000 149h1v1h-1zM865 112h1v1h-1zM901 132h1v1h-1zM902 323h1v1h-1zM908 222h1v1h-1zM830 155h1v1h-1zM908 206h1v1h-1zM1017 209h1v1h-1zM905 117h1v1h-1zM840 212h1v1h-1zM884 231h1v1h-1zM941 142h1v1h-1zM949 302h1v1h-1zM860 129h1v1h-1zM891 250h1v1h-1zM1024 241h1v1h-1zM827 317h1v1h-1zM848 301h1v1h-1zM770 188h1v1h-1zM1040 217h1v1h-1zM854 106h1v1h-1zM916 112h1v1h-1zM912 159h1v1h-1zM964 236h1v1h-1zM839 103h1v1h-1zM938 162h1v1h-1zM831 136h1v1h-1zM869 290h1v1h-1zM860 109h1v1h-1zM759 248h1v1h-1zM816 124h1v1h-1zM889 182h1v1h-1zM812 272h1v1h-1zM817 105h1v1h-1zM896 296h1v1h-1zM980 270h1v1h-1zM923 245h1v1h-1zM1009 173h1v1h-1zM874 254h1v1h-1zM773 174h1v1h-1zM766 164h1v1h-1zM930 281h1v1h-1zM998 290h1v1h-1zM865 307h1v1h-1zM862 196h1v1h-1zM961 294h1v1h-1zM881 109h1v1h-1zM984 173h1v1h-1zM881 121h1v1h-1zM900 80h1v1h-1zM925 80h1v1h-1zM853 242h1v1h-1zM948 86h1v1h-1zM863 187h1v1h-1zM886 158h1v1h-1zM912 326h1v1h-1zM946 157h1v1h-1zM924 159h1v1h-1zM971 233h1v1h-1zM755 230h1v1h-1zM931 131h1v1h-1zM759 173h1v1h-1zM962 229h1v1h-1zM782 155h1v1h-1zM923 123h1v1h-1zM905 291h1v1h-1zM913 178h1v1h-1zM878 115h1v1h-1zM816 228h1v1h-1zM933 100h1v1h-1zM868 336h1v1h-1zM776 272h1v1h-1zM1001 208h1v1h-1zM843 334h1v1h-1zM875 86h1v1h-1zM771 172h1v1h-1zM905 77h1v1h-1zM904 227h1v1h-1zM953 193h1v1h-1zM841 244h1v1h-1zM916 90h1v1h-1zM971 311h1v1h-1zM819 97h1v1h-1zM886 216h1v1h-1zM800 274h1v1h-1zM970 130h1v1h-1zM1009 259h1v1h-1zM1036 238h1v1h-1zM960 291h1v1h-1zM882 337h1v1h-1zM792 200h1v1h-1zM934 166h1v1h-1zM818 313h1v1h-1zM934 320h1v1h-1zM980 264h1v1h-1zM912 255h1v1h-1zM939 181h1v1h-1zM786 136h1v1h-1zM911 177h1v1h-1zM796 218h1v1h-1zM886 236h1v1h-1zM976 113h1v1h-1zM813 289h1v1h-1zM946 303h1v1h-1zM914 113h1v1h-1zM1006 165h1v1h-1zM823 274h1v1h-1zM778 215h1v1h-1zM1007 175h1v1h-1zM917 270h1v1h-1zM798 274h1v1h-1zM805 139h1v1h-1zM942 114h1v1h-1zM876 107h1v1h-1zM857 238h1v1h-1zM934 105h1v1h-1zM817 286h1v1h-1zM832 292h1v1h-1zM923 319h1v1h-1zM843 325h1v1h-1zM878 276h1v1h-1zM886 94h1v1h-1zM870 299h1v1h-1zM913 235h1v1h-1zM795 287h1v1h-1zM903 324h1v1h-1zM801 208h1v1h-1zM927 191h1v1h-1zM933 335h1v1h-1zM804 184h1v1h-1zM914 150h1v1h-1zM951 342h1v1h-1zM891 172h1v1h-1zM1035 184h1v1h-1zM804 117h1v1h-1zM790 305h1v1h-1zM902 203h1v1h-1zM947 109h1v1h-1zM952 243h1v1h-1zM927 112h1v1h-1zM920 98h1v1h-1zM870 250h1v1h-1zM792 171h1v1h-1zM836 255h1v1h-1zM832 305h1v1h-1zM845 247h1v1h-1zM827 216h1v1h-1zM873 253h1v1h-1zM936 83h1v1h-1zM1019 258h1v1h-1zM894 351h1v1h-1zM815 313h1v1h-1zM1027 257h1v1h-1zM951 195h1v1h-1zM892 215h1v1h-1zM868 234h1v1h-1zM811 325h1v1h-1zM1006 166h1v1h-1zM959 171h1v1h-1zM985 127h1v1h-1zM773 242h1v1h-1zM863 340h1v1h-1zM867 135h1v1h-1zM1034 169h1v1h-1zM983 267h1v1h-1zM1018 228h1v1h-1zM921 83h1v1h-1zM765 180h1v1h-1zM981 216h1v1h-1zM999 309h1v1h-1zM966 180h1v1h-1zM795 287h1v1h-1zM799 117h1v1h-1zM915 221h1v1h-1zM857 177h1v1h-1zM810 212h1v1h-1zM967 105h1v1h-1zM786 240h1v1h-1zM877 163h1v1h-1zM847 246h1v1h-1zM836 145h1v1h-1zM943 147h1v1h-1zM996 176h1v1h-1zM813 284h1v1h-1zM971 112h1v1h-1zM979 276h1v1h-1zM871 120h1v1h-1zM915 83h1v1h-1zM900 97h1v1h-1zM916 270h1v1h-1zM963 99h1v1h-1zM1004 240h1v1h-1zM835 100h1v1h-1zM869 80h1v1h-1zM928 77h1v1h-1zM993 259h1v1h-1zM810 263h1v1h-1zM812 179h1v1h-1zM874 248h1v1h-1zM960 286h1v1h-1zM992 282h1v1h-1zM987 198h1v1h-1zM914 271h1v1h-1zM782 265h1v1h-1zM850 290h1v1h-1zM891 168h1v1h-1zM950 310h1v1h-1zM984 254h1v1h-1zM833 265h1v1h-1zM1008 157h1v1h-1zM858 285h1v1h-1zM1029 171h1v1h-1zM941 80h1v1h-1zM1003 199h1v1h-1zM982 216h1v1h-1zM872 150h1v1h-1zM1009 214h1v1h-1zM816 298h1v1h-1zM942 299h1v1h-1zM956 80h1v1h-1zM982 311h1v1h-1zM957 238h1v1h-1zM836 239h1v1h-1zM843 330h1v1h-1zM961 318h1v1h-1zM961 324h1v1h-1zM776 170h1v1h-1zM880 130h1v1h-1zM931 325h1v1h-1zM821 123h1v1h-1zM986 166h1v1h-1zM946 277h1v1h-1zM754 201h1v1h-1zM763 210h1v1h-1zM989 318h1v1h-1zM917 347h1v1h-1zM819 303h1v1h-1zM1035 203h1v1h-1zM867 241h1v1h-1zM790 281h1v1h-1zM953 327h1v1h-1zM900 150h1v1h-1zM790 292h1v1h-1zM919 226h1v1h-1zM1030 226h1v1h-1zM965 243h1v1h-1zM843 320h1v1h-1zM881 281h1v1h-1zM963 324h1v1h-1zM1025 271h1v1h-1zM908 197h1v1h-1zM997 292h1v1h-1zM950 101h1v1h-1zM801 114h1v1h-1zM895 279h1v1h-1zM803 151h1v1h-1zM1034 218h1v1h-1zM881 141h1v1h-1zM895 298h1v1h-1zM841 266h1v1h-1zM955 285h1v1h-1zM796 171h1v1h-1zM866 132h1v1h-1zM976 243h1v1h-1zM901 157h1v1h-1zM887 340h1v1h-1zM1013 156h1v1h-1zM994 259h1v1h-1zM906 205h1v1h-1zM809 315h1v1h-1zM794 186h1v1h-1zM900 346h1v1h-1zM1003 305h1v1h-1zM1009 170h1v1h-1zM830 245h1v1h-1zM880 348h1v1h-1zM937 147h1v1h-1zM927 305h1v1h-1zM819 292h1v1h-1zM890 89h1v1h-1zM877 220h1v1h-1zM877 232h1v1h-1zM870 290h1v1h-1zM767 186h1v1h-1zM1001 265h1v1h-1zM941 178h1v1h-1zM771 246h1v1h-1zM884 157h1v1h-1zM937 336h1v1h-1zM947 170h1v1h-1zM908 72h1v1h-1zM994 306h1v1h-1zM777 159h1v1h-1zM931 331h1v1h-1zM812 139h1v1h-1zM815 297h1v1h-1zM806 175h1v1h-1zM812 261h1v1h-1zM907 279h1v1h-1zM963 154h1v1h-1zM859 220h1v1h-1zM818 100h1v1h-1zM972 171h1v1h-1zM999 124h1v1h-1zM889 257h1v1h-1zM983 319h1v1h-1zM905 260h1v1h-1zM951 168h1v1h-1zM893 143h1v1h-1zM963 131h1v1h-1zM936 294h1v1h-1zM758 186h1v1h-1zM875 343h1v1h-1zM771 203h1v1h-1zM1007 220h1v1h-1zM1010 262h1v1h-1zM804 288h1v1h-1zM858 208h1v1h-1zM921 167h1v1h-1zM988 187h1v1h-1zM919 283h1v1h-1zM888 324h1v1h-1zM885 231h1v1h-1zM903 265h1v1h-1zM995 299h1v1h-1zM820 262h1v1h-1zM992 137h1v1h-1zM911 246h1v1h-1zM781 189h1v1h-1zM941 101h1v1h-1zM933 245h1v1h-1zM835 110h1v1h-1zM869 338h1v1h-1zM904 224h1v1h-1zM860 308h1v1h-1zM1040 209h1v1h-1zM759 235h1v1h-1zM892 223h1v1h-1zM882 160h1v1h-1zM785 136h1v1h-1zM761 177h1v1h-1zM1033 211h1v1h-1zM1011 274h1v1h-1zM881 317h1v1h-1zM990 239h1v1h-1zM906 117h1v1h-1zM905 102h1v1h-1zM832 332h1v1h-1zM974 211h1v1h-1zM813 241h1v1h-1zM999 175h1v1h-1zM884 286h1v1h-1zM924 288h1v1h-1zM938 315h1v1h-1zM890 293h1v1h-1zM886 105h1v1h-1zM886 252h1v1h-1zM765 262h1v1h-1zM800 218h1v1h-1zM914 205h1v1h-1zM1033 215h1v1h-1zM899 82h1v1h-1zM907 312h1v1h-1zM871 94h1v1h-1zM846 186h1v1h-1zM886 250h1v1h-1zM813 206h1v1h-1zM919 178h1v1h-1zM788 197h1v1h-1zM867 102h1v1h-1zM961 116h1v1h-1zM886 76h1v1h-1zM844 120h1v1h-1zM916 142h1v1h-1zM807 272h1v1h-1zM859 286h1v1h-1zM861 162h1v1h-1zM918 340h1v1h-1zM887 167h1v1h-1zM812 133h1v1h-1zM877 129h1v1h-1zM944 238h1v1h-1zM961 144h1v1h-1zM930 324h1v1h-1zM852 252h1v1h-1zM914 311h1v1h-1zM843 294h1v1h-1zM980 128h1v1h-1zM837 124h1v1h-1zM782 195h1v1h-1zM820 132h1v1h-1zM912 151h1v1h-1zM994 302h1v1h-1zM863 169h1v1h-1zM829 134h1v1h-1zM947 271h1v1h-1zM907 330h1v1h-1zM972 215h1v1h-1zM968 261h1v1h-1zM888 108h1v1h-1zM771 175h1v1h-1zM969 260h1v1h-1zM983 114h1v1h-1zM781 249h1v1h-1zM925 191h1v1h-1zM830 253h1v1h-1zM934 74h1v1h-1zM818 327h1v1h-1zM803 195h1v1h-1zM986 261h1v1h-1zM927 330h1v1h-1zM894 276h1v1h-1zM880 169h1v1h-1zM969 200h1v1h-1zM983 210h1v1h-1zM931 278h1v1h-1zM867 260h1v1h-1zM837 319h1v1h-1zM798 223h1v1h-1zM994 274h1v1h-1zM971 274h1v1h-1zM1011 173h1v1h-1zM917 313h1v1h-1zM919 127h1v1h-1zM961 150h1v1h-1zM988 118h1v1h-1zM758 231h1v1h-1zM931 251h1v1h-1zM899 145h1v1h-1zM811 143h1v1h-1zM979 148h1v1h-1zM842 140h1v1h-1zM1019 272h1v1h-1zM867 322h1v1h-1zM785 127h1v1h-1zM991 191h1v1h-1zM888 97h1v1h-1zM764 250h1v1h-1zM981 213h1v1h-1zM944 162h1v1h-1zM775 157h1v1h-1zM938 260h1v1h-1zM868 273h1v1h-1zM920 254h1v1h-1zM761 187h1v1h-1zM811 264h1v1h-1zM837 248h1v1h-1zM770 196h1v1h-1zM813 199h1v1h-1zM844 321h1v1h-1zM975 93h1v1h-1zM776 210h1v1h-1zM910 76h1v1h-1zM893 97h1v1h-1zM836 190h1v1h-1zM860 257h1v1h-1zM916 171h1v1h-1zM861 341h1v1h-1zM820 226h1v1h-1zM901 302h1v1h-1zM811 149h1v1h-1zM971 195h1v1h-1zM937 162h1v1h-1zM833 211h1v1h-1zM922 334h1v1h-1zM951 293h1v1h-1zM914 330h1v1h-1zM1033 247h1v1h-1zM845 163h1v1h-1zM959 125h1v1h-1zM922 230h1v1h-1zM904 234h1v1h-1zM954 110h1v1h-1zM770 258h1v1h-1zM889 253h1v1h-1zM963 237h1v1h-1zM787 142h1v1h-1zM871 288h1v1h-1zM982 251h1v1h-1zM925 314h1v1h-1zM778 156h1v1h-1zM868 191h1v1h-1zM791 297h1v1h-1zM772 141h1v1h-1zM776 282h1v1h-1zM1017 262h1v1h-1zM842 260h1v1h-1zM905 132h1v1h-1zM870 254h1v1h-1zM861 196h1v1h-1zM1010 178h1v1h-1zM824 131h1v1h-1zM805 156h1v1h-1zM907 217h1v1h-1zM828 162h1v1h-1zM988 250h1v1h-1zM882 311h1v1h-1zM788 145h1v1h-1zM844 322h1v1h-1zM948 220h1v1h-1zM1013 197h1v1h-1zM852 269h1v1h-1zM1032 167h1v1h-1zM851 151h1v1h-1zM853 243h1v1h-1zM797 289h1v1h-1zM911 134h1v1h-1zM864 205h1v1h-1zM849 103h1v1h-1zM888 236h1v1h-1zM947 239h1v1h-1zM858 169h1v1h-1zM938 151h1v1h-1zM828 191h1v1h-1zM995 144h1v1h-1zM963 124h1v1h-1zM954 155h1v1h-1zM936 167h1v1h-1zM980 314h1v1h-1zM886 283h1v1h-1zM806 304h1v1h-1zM842 85h1v1h-1zM825 218h1v1h-1zM901 227h1v1h-1zM893 263h1v1h-1zM830 270h1v1h-1zM895 196h1v1h-1zM841 116h1v1h-1zM941 101h1v1h-1zM959 275h1v1h-1zM1026 167h1v1h-1zM761 243h1v1h-1zM934 119h1v1h-1zM863 81h1v1h-1zM806 101h1v1h-1zM784 262h1v1h-1zM1021 194h1v1h-1zM890 168h1v1h-1zM806 109h1v1h-1zM759 232h1v1h-1zM903 173h1v1h-1zM859 321h1v1h-1zM851 89h1v1h-1zM959 89h1v1h-1zM859 229h1v1h-1zM1015 246h1v1h-1zM982 154h1v1h-1zM938 303h1v1h-1zM819 303h1v1h-1zM835 250h1v1h-1zM884 305h1v1h-1zM890 319h1v1h-1zM769 270h1v1h-1zM879 132h1v1h-1zM775 223h1v1h-1zM845 334h1v1h-1zM837 247h1v1h-1zM966 261h1v1h-1zM835 198h1v1h-1zM1002 288h1v1h-1zM820 120h1v1h-1zM974 154h1v1h-1zM860 332h1v1h-1zM842 105h1v1h-1zM1019 204h1v1h-1zM894 104h1v1h-1zM857 156h1v1h-1zM892 184h1v1h-1zM877 203h1v1h-1zM883 93h1v1h-1zM1012 131h1v1h-1zM809 258h1v1h-1zM975 287h1v1h-1zM764 173h1v1h-1zM856 122h1v1h-1zM890 171h1v1h-1zM799 240h1v1h-1zM965 193h1v1h-1zM787 285h1v1h-1zM915 184h1v1h-1zM917 114h1v1h-1zM976 219h1v1h-1zM885 234h1v1h-1zM825 219h1v1h-1zM966 148h1v1h-1zM976 227h1v1h-1zM977 308h1v1h-1zM932 285h1v1h-1zM869 85h1v1h-1zM870 338h1v1h-1zM904 335h1v1h-1zM890 202h1v1h-1zM878 101h1v1h-1zM847 213h1v1h-1zM1021 231h1v1h-1zM995 156h1v1h-1zM872 174h1v1h-1zM844 266h1v1h-1zM889 296h1v1h-1zM762 215h1v1h-1zM861 74h1v1h-1zM811 213h1v1h-1zM767 226h1v1h-1zM828 231h1v1h-1zM983 132h1v1h-1zM990 122h1v1h-1zM921 175h1v1h-1zM979 188h1v1h-1zM859 75h1v1h-1zM834 99h1v1h-1zM937 197h1v1h-1zM930 106h1v1h-1zM889 166h1v1h-1zM826 149h1v1h-1zM808 302h1v1h-1zM796 227h1v1h-1zM774 230h1v1h-1zM864 304h1v1h-1zM985 104h1v1h-1zM1015 188h1v1h-1zM933 143h1v1h-1zM926 265h1v1h-1zM821 323h1v1h-1zM856 302h1v1h-1zM784 249h1v1h-1zM928 170h1v1h-1zM836 317h1v1h-1zM968 205h1v1h-1zM976 158h1v1h-1zM850 284h1v1h-1zM777 156h1v1h-1zM868 108h1v1h-1zM994 203h1v1h-1zM864 332h1v1h-1zM940 185h1v1h-1zM888 86h1v1h-1zM861 251h1v1h-1zM916 274h1v1h-1zM871 160h1v1h-1zM956 195h1v1h-1zM1037 213h1v1h-1zM982 265h1v1h-1zM842 105h1v1h-1zM844 235h1v1h-1zM990 185h1v1h-1zM834 253h1v1h-1zM934 277h1v1h-1zM802 158h1v1h-1zM859 172h1v1h-1zM984 316h1v1h-1zM821 200h1v1h-1zM819 301h1v1h-1zM992 143h1v1h-1zM874 349h1v1h-1zM847 311h1v1h-1zM895 87h1v1h-1zM1030 198h1v1h-1zM889 335h1v1h-1zM808 148h1v1h-1zM976 138h1v1h-1zM983 124h1v1h-1zM818 287h1v1h-1zM910 88h1v1h-1zM895 213h1v1h-1zM956 314h1v1h-1zM926 299h1v1h-1zM905 100h1v1h-1zM902 155h1v1h-1zM892 312h1v1h-1zM853 280h1v1h-1zM807 319h1v1h-1zM817 97h1v1h-1zM971 247h1v1h-1zM853 319h1v1h-1zM1005 214h1v1h-1zM896 317h1v1h-1zM971 200h1v1h-1zM908 296h1v1h-1zM775 189h1v1h-1zM823 101h1v1h-1zM1002 191h1v1h-1zM887 133h1v1h-1zM1012 223h1v1h-1zM764 264h1v1h-1zM787 125h1v1h-1zM808 310h1v1h-1zM941 337h1v1h-1zM809 293h1v1h-1zM905 216h1v1h-1zM818 260h1v1h-1zM847 97h1v1h-1zM806 112h1v1h-1zM847 243h1v1h-1zM795 293h1v1h-1zM806 308h1v1h-1zM816 254h1v1h-1zM971 153h1v1h-1zM957 107h1v1h-1zM940 307h1v1h-1zM914 187h1v1h-1zM942 310h1v1h-1zM949 241h1v1h-1zM867 325h1v1h-1zM852 189h1v1h-1zM848 227h1v1h-1zM863 228h1v1h-1zM1025 205h1v1h-1zM931 222h1v1h-1zM774 257h1v1h-1zM767 218h1v1h-1zM1007 213h1v1h-1zM966 221h1v1h-1zM956 94h1v1h-1zM791 250h1v1h-1zM788 157h1v1h-1zM963 329h1v1h-1zM913 339h1v1h-1zM981 178h1v1h-1zM1017 141h1v1h-1zM931 187h1v1h-1zM939 221h1v1h-1zM993 276h1v1h-1zM891 182h1v1h-1zM820 218h1v1h-1zM1036 186h1v1h-1zM915 218h1v1h-1zM855 278h1v1h-1zM774 191h1v1h-1zM1020 175h1v1h-1zM894 123h1v1h-1zM813 197h1v1h-1zM919 144h1v1h-1zM933 234h1v1h-1zM967 116h1v1h-1zM987 233h1v1h-1zM855 245h1v1h-1zM993 275h1v1h-1zM852 208h1v1h-1zM917 291h1v1h-1zM908 255h1v1h-1zM954 321h1v1h-1zM951 222h1v1h-1zM996 179h1v1h-1zM849 245h1v1h-1zM920 135h1v1h-1zM1017 264h1v1h-1zM784 228h1v1h-1zM863 260h1v1h-1zM950 78h1v1h-1zM936 283h1v1h-1zM964 223h1v1h-1zM857 285h1v1h-1zM960 103h1v1h-1zM1018 212h1v1h-1zM773 265h1v1h-1zM972 299h1v1h-1zM835 88h1v1h-1zM890 211h1v1h-1zM964 238h1v1h-1zM877 345h1v1h-1zM992 200h1v1h-1zM787 295h1v1h-1zM796 289h1v1h-1zM923 308h1v1h-1zM977 142h1v1h-1zM761 238h1v1h-1zM850 300h1v1h-1zM1031 167h1v1h-1zM974 225h1v1h-1zM1015 242h1v1h-1zM795 153h1v1h-1zM1011 202h1v1h-1zM969 187h1v1h-1zM977 131h1v1h-1zM951 250h1v1h-1zM887 280h1v1h-1zM815 141h1v1h-1zM906 214h1v1h-1zM810 219h1v1h-1zM863 194h1v1h-1zM875 315h1v1h-1zM935 192h1v1h-1zM800 272h1v1h-1zM870 97h1v1h-1zM994 260h1v1h-1zM906 270h1v1h-1zM929 109h1v1h-1zM956 235h1v1h-1zM998 155h1v1h-1zM807 132h1v1h-1zM979 93h1v1h-1zM780 187h1v1h-1zM859 153h1v1h-1zM922 226h1v1h-1zM778 154h1v1h-1zM1018 272h1v1h-1zM883 328h1v1h-1zM877 291h1v1h-1zM884 209h1v1h-1zM815 163h1v1h-1zM926 79h1v1h-1zM772 167h1v1h-1zM1022 187h1v1h-1zM948 78h1v1h-1zM1032 205h1v1h-1zM790 205h1v1h-1zM900 177h1v1h-1zM863 341h1v1h-1zM984 241h1v1h-1zM876 177h1v1h-1zM851 217h1v1h-1zM786 203h1v1h-1zM1003 210h1v1h-1zM1000 214h1v1h-1zM828 152h1v1h-1zM865 321h1v1h-1zM841 81h1v1h-1zM898 259h1v1h-1zM884 351h1v1h-1zM890 353h1v1h-1zM856 167h1v1h-1zM965 307h1v1h-1zM979 286h1v1h-1zM822 300h1v1h-1zM872 82h1v1h-1zM813 175h1v1h-1zM955 210h1v1h-1zM979 196h1v1h-1zM864 170h1v1h-1zM891 253h1v1h-1zM909 210h1v1h-1zM904 245h1v1h-1zM837 262h1v1h-1zM786 146h1v1h-1zM890 80h1v1h-1zM776 168h1v1h-1zM834 100h1v1h-1zM799 152h1v1h-1zM840 244h1v1h-1zM956 254h1v1h-1zM963 102h1v1h-1zM929 277h1v1h-1zM874 284h1v1h-1zM847 187h1v1h-1zM818 179h1v1h-1zM908 276h1v1h-1zM1024 148h1v1h-1zM891 278h1v1h-1zM1003 232h1v1h-1zM894 195h1v1h-1zM800 171h1v1h-1zM810 264h1v1h-1zM905 305h1v1h-1zM994 145h1v1h-1zM838 134h1v1h-1zM788 283h1v1h-1zM1001 180h1v1h-1zM976 218h1v1h-1zM1005 293h1v1h-1zM945 121h1v1h-1zM776 167h1v1h-1zM814 122h1v1h-1zM823 166h1v1h-1zM847 304h1v1h-1zM925 208h1v1h-1zM949 155h1v1h-1zM948 238h1v1h-1zM1014 252h1v1h-1zM1005 296h1v1h-1zM968 330h1v1h-1zM1001 122h1v1h-1zM931 80h1v1h-1zM809 263h1v1h-1zM1006 203h1v1h-1zM792 261h1v1h-1zM930 156h1v1h-1zM954 264h1v1h-1zM830 196h1v1h-1zM917 188h1v1h-1zM942 313h1v1h-1zM910 327h1v1h-1zM762 212h1v1h-1zM828 295h1v1h-1zM846 283h1v1h-1zM775 162h1v1h-1zM990 244h1v1h-1zM772 170h1v1h-1zM989 242h1v1h-1zM910 82h1v1h-1zM945 139h1v1h-1zM856 242h1v1h-1zM894 141h1v1h-1zM858 192h1v1h-1zM932 288h1v1h-1zM907 298h1v1h-1zM810 203h1v1h-1zM801 274h1v1h-1zM886 107h1v1h-1zM876 198h1v1h-1zM848 254h1v1h-1zM784 271h1v1h-1zM848 127h1v1h-1zM791 255h1v1h-1zM910 127h1v1h-1zM990 273h1v1h-1zM789 259h1v1h-1zM797 192h1v1h-1zM833 313h1v1h-1zM898 194h1v1h-1zM882 310h1v1h-1zM760 180h1v1h-1zM810 105h1v1h-1zM965 295h1v1h-1zM864 196h1v1h-1zM1003 162h1v1h-1zM866 274h1v1h-1zM921 204h1v1h-1zM882 232h1v1h-1zM849 93h1v1h-1zM941 345h1v1h-1zM1024 215h1v1h-1zM914 329h1v1h-1zM841 139h1v1h-1zM970 272h1v1h-1zM850 81h1v1h-1zM782 162h1v1h-1zM911 340h1v1h-1zM780 209h1v1h-1zM855 304h1v1h-1zM868 93h1v1h-1zM771 153h1v1h-1zM1033 218h1v1h-1zM900 166h1v1h-1zM886 305h1v1h-1zM1023 229h1v1h-1zM873 131h1v1h-1zM925 285h1v1h-1zM977 239h1v1h-1zM911 182h1v1h-1zM780 174h1v1h-1zM897 119h1v1h-1zM888 161h1v1h-1zM859 292h1v1h-1zM782 157h1v1h-1zM891 74h1v1h-1zM866 108h1v1h-1zM945 77h1v1h-1zM850 281h1v1h-1zM975 108h1v1h-1zM919 133h1v1h-1zM926 220h1v1h-1zM988 319h1v1h-1zM783 137h1v1h-1zM969 305h1v1h-1zM1028 209h1v1h-1zM865 174h1v1h-1zM827 328h1v1h-1zM798 303h1v1h-1zM870 330h1v1h-1zM954 214h1v1h-1zM935 210h1v1h-1zM951 262h1v1h-1zM989 110h1v1h-1zM989 109h1v1h-1zM874 104h1v1h-1zM872 87h1v1h-1zM933 236h1v1h-1zM883 251h1v1h-1zM921 183h1v1h-1zM913 86h1v1h-1zM990 276h1v1h-1zM806 240h1v1h-1zM1000 307h1v1h-1zM932 159h1v1h-1zM850 258h1v1h-1zM826 124h1v1h-1zM830 200h1v1h-1zM875 281h1v1h-1zM962 334h1v1h-1zM897 301h1v1h-1zM939 150h1v1h-1zM871 258h1v1h-1zM998 142h1v1h-1zM756 224h1v1h-1zM892 251h1v1h-1zM923 143h1v1h-1zM1016 134h1v1h-1zM923 340h1v1h-1zM891 270h1v1h-1zM879 174h1v1h-1zM863 266h1v1h-1zM865 180h1v1h-1zM900 194h1v1h-1zM891 118h1v1h-1zM934 276h1v1h-1zM860 257h1v1h-1zM944 254h1v1h-1zM843 269h1v1h-1zM1005 135h1v1h-1zM907 111h1v1h-1zM1021 229h1v1h-1zM901 286h1v1h-1zM980 158h1v1h-1zM773 209h1v1h-1zM859 202h1v1h-1zM855 329h1v1h-1zM946 305h1v1h-1zM880 147h1v1h-1zM974 206h1v1h-1zM818 196h1v1h-1zM933 254h1v1h-1zM992 145h1v1h-1zM889 328h1v1h-1zM871 205h1v1h-1zM921 245h1v1h-1zM812 278h1v1h-1zM1033 215h1v1h-1zM768 261h1v1h-1zM1009 146h1v1h-1zM935 327h1v1h-1zM902 76h1v1h-1zM924 343h1v1h-1zM959 168h1v1h-1zM883 129h1v1h-1zM757 204h1v1h-1zM813 189h1v1h-1zM789 134h1v1h-1zM1034 231h1v1h-1zM926 85h1v1h-1zM785 244h1v1h-1zM833 130h1v1h-1zM863 263h1v1h-1zM981 282h1v1h-1zM875 151h1v1h-1zM782 223h1v1h-1zM981 259h1v1h-1zM886 187h1v1h-1zM822 197h1v1h-1zM1035 229h1v1h-1zM836 131h1v1h-1zM931 262h1v1h-1zM792 159h1v1h-1zM856 293h1v1h-1zM1009 233h1v1h-1zM964 253h1v1h-1zM862 165h1v1h-1zM942 308h1v1h-1zM992 214h1v1h-1zM888 296h1v1h-1zM962 287h1v1h-1zM889 100h1v1h-1zM881 146h1v1h-1zM813 174h1v1h-1zM906 237h1v1h-1zM906 253h1v1h-1zM933 132h1v1h-1zM987 190h1v1h-1zM893 96h1v1h-1zM825 264h1v1h-1zM966 231h1v1h-1zM817 239h1v1h-1zM891 156h1v1h-1zM1028 168h1v1h-1zM825 88h1v1h-1zM831 277h1v1h-1zM901 162h1v1h-1zM771 210h1v1h-1zM852 240h1v1h-1zM819 176h1v1h-1zM851 133h1v1h-1zM812 234h1v1h-1zM1009 222h1v1h-1zM844 269h1v1h-1zM832 95h1v1h-1zM831 163h1v1h-1zM888 219h1v1h-1zM933 246h1v1h-1zM993 288h1v1h-1zM962 110h1v1h-1zM1020 207h1v1h-1zM907 322h1v1h-1zM978 114h1v1h-1zM954 194h1v1h-1zM856 165h1v1h-1zM955 162h1v1h-1zM912 200h1v1h-1zM917 147h1v1h-1zM914 173h1v1h-1zM925 346h1v1h-1zM860 294h1v1h-1zM937 243h1v1h-1zM825 270h1v1h-1zM860 130h1v1h-1zM855 331h1v1h-1zM912 171h1v1h-1zM875 171h1v1h-1zM981 164h1v1h-1zM1015 210h1v1h-1zM792 184h1v1h-1zM775 244h1v1h-1zM908 145h1v1h-1zM924 221h1v1h-1zM832 319h1v1h-1zM923 296h1v1h-1zM903 150h1v1h-1zM804 234h1v1h-1zM1010 257h1v1h-1zM827 255h1v1h-1zM826 251h1v1h-1zM894 250h1v1h-1zM800 307h1v1h-1zM951 339h1v1h-1zM929 106h1v1h-1zM767 219h1v1h-1zM936 325h1v1h-1zM895 156h1v1h-1zM906 323h1v1h-1zM992 173h1v1h-1zM828 164h1v1h-1zM983 225h1v1h-1zM914 140h1v1h-1zM925 104h1v1h-1zM928 115h1v1h-1zM948 100h1v1h-1zM760 202h1v1h-1zM937 346h1v1h-1zM922 285h1v1h-1zM1023 142h1v1h-1zM994 172h1v1h-1zM838 140h1v1h-1zM961 217h1v1h-1zM929 298h1v1h-1zM822 331h1v1h-1zM936 142h1v1h-1zM1020 229h1v1h-1zM957 307h1v1h-1zM1000 159h1v1h-1zM923 175h1v1h-1zM814 133h1v1h-1zM857 157h1v1h-1zM949 223h1v1h-1zM877 352h1v1h-1zM912 351h1v1h-1zM823 318h1v1h-1zM1027 265h1v1h-1zM1016 143h1v1h-1zM892 83h1v1h-1zM1000 162h1v1h-1zM852 231h1v1h-1zM906 141h1v1h-1zM931 237h1v1h-1zM856 153h1v1h-1zM997 153h1v1h-1zM886 155h1v1h-1zM832 171h1v1h-1zM860 118h1v1h-1zM963 154h1v1h-1zM925 243h1v1h-1zM823 318h1v1h-1zM843 94h1v1h-1zM958 170h1v1h-1zM788 217h1v1h-1zM774 282h1v1h-1zM814 320h1v1h-1zM992 133h1v1h-1zM821 287h1v1h-1zM795 165h1v1h-1zM857 283h1v1h-1zM965 246h1v1h-1zM999 290h1v1h-1zM890 281h1v1h-1zM870 327h1v1h-1zM974 90h1v1h-1zM927 271h1v1h-1zM804 110h1v1h-1zM820 208h1v1h-1zM912 103h1v1h-1zM868 97h1v1h-1zM883 294h1v1h-1zM869 235h1v1h-1zM890 156h1v1h-1zM985 158h1v1h-1zM771 148h1v1h-1zM900 258h1v1h-1zM936 231h1v1h-1zM808 289h1v1h-1zM839 105h1v1h-1zM778 281h1v1h-1zM1003 126h1v1h-1zM943 173h1v1h-1zM849 208h1v1h-1zM1022 193h1v1h-1zM994 236h1v1h-1zM799 287h1v1h-1zM897 297h1v1h-1zM858 96h1v1h-1zM875 338h1v1h-1zM1029 162h1v1h-1zM797 186h1v1h-1zM805 137h1v1h-1zM866 337h1v1h-1zM765 224h1v1h-1zM813 127h1v1h-1zM993 144h1v1h-1zM820 307h1v1h-1zM892 173h1v1h-1zM889 97h1v1h-1zM832 292h1v1h-1zM1012 139h1v1h-1zM755 215h1v1h-1zM946 294h1v1h-1zM1012 253h1v1h-1zM892 307h1v1h-1zM972 120h1v1h-1zM857 101h1v1h-1zM778 264h1v1h-1zM1001 301h1v1h-1zM939 133h1v1h-1zM842 148h1v1h-1zM930 132h1v1h-1zM919 171h1v1h-1zM1032 230h1v1h-1zM960 252h1v1h-1zM888 206h1v1h-1zM845 119h1v1h-1zM1036 240h1v1h-1zM886 167h1v1h-1zM808 108h1v1h-1zM938 136h1v1h-1zM843 321h1v1h-1zM906 138h1v1h-1zM825 319h1v1h-1zM806 114h1v1h-1zM917 138h1v1h-1zM954 250h1v1h-1zM967 161h1v1h-1zM785 263h1v1h-1zM967 282h1v1h-1zM895 178h1v1h-1zM765 219h1v1h-1zM1026 262h1v1h-1zM881 96h1v1h-1zM967 240h1v1h-1zM951 172h1v1h-1zM835 256h1v1h-1zM806 216h1v1h-1zM982 222h1v1h-1zM940 136h1v1h-1zM897 82h1v1h-1zM830 191h1v1h-1zM860 317h1v1h-1zM858 163h1v1h-1zM942 146h1v1h-1zM984 158h1v1h-1zM931 171h1v1h-1zM930 185h1v1h-1zM947 109h1v1h-1zM886 165h1v1h-1zM857 287h1v1h-1zM897 191h1v1h-1zM878 211h1v1h-1zM884 273h1v1h-1zM905 204h1v1h-1zM823 92h1v1h-1zM937 217h1v1h-1zM837 276h1v1h-1zM896 91h1v1h-1zM1017 229h1v1h-1zM820 312h1v1h-1zM798 310h1v1h-1zM1001 129h1v1h-1zM890 189h1v1h-1zM1018 168h1v1h-1zM930 238h1v1h-1zM850 193h1v1h-1zM980 131h1v1h-1zM811 313h1v1h-1zM840 180h1v1h-1zM930 206h1v1h-1zM910 120h1v1h-1zM867 113h1v1h-1zM804 305h1v1h-1zM913 249h1v1h-1zM960 116h1v1h-1zM1024 265h1v1h-1zM892 82h1v1h-1zM937 318h1v1h-1zM785 139h1v1h-1zM877 186h1v1h-1zM927 321h1v1h-1zM818 286h1v1h-1zM885 245h1v1h-1zM887 121h1v1h-1zM977 301h1v1h-1zM806 250h1v1h-1zM968 228h1v1h-1zM781 170h1v1h-1zM827 267h1v1h-1zM848 141h1v1h-1zM979 243h1v1h-1zM950 218h1v1h-1zM978 160h1v1h-1zM961 176h1v1h-1zM942 281h1v1h-1zM960 334h1v1h-1zM813 252h1v1h-1zM950 320h1v1h-1zM818 191h1v1h-1zM997 173h1v1h-1zM850 320h1v1h-1zM828 258h1v1h-1zM979 132h1v1h-1zM988 320h1v1h-1zM970 182h1v1h-1zM874 271h1v1h-1zM951 135h1v1h-1zM940 296h1v1h-1zM1002 126h1v1h-1zM936 177h1v1h-1zM925 303h1v1h-1zM954 221h1v1h-1zM868 244h1v1h-1zM973 313h1v1h-1zM938 271h1v1h-1zM948 242h1v1h-1zM1012 281h1v1h-1zM889 118h1v1h-1zM827 187h1v1h-1zM826 121h1v1h-1zM937 323h1v1h-1zM934 128h1v1h-1zM961 329h1v1h-1zM799 122h1v1h-1zM916 127h1v1h-1zM985 302h1v1h-1zM963 105h1v1h-1zM809 247h1v1h-1zM998 167h1v1h-1zM840 107h1v1h-1zM986 198h1v1h-1zM931 137h1v1h-1zM952 289h1v1h-1zM911 130h1v1h-1zM1025 202h1v1h-1zM867 159h1v1h-1zM798 229h1v1h-1zM924 265h1v1h-1zM924 126h1v1h-1zM935 245h1v1h-1zM864 284h1v1h-1zM997 190h1v1h-1zM902 200h1v1h-1zM827 211h1v1h-1zM972 248h1v1h-1zM903 287h1v1h-1zM967 263h1v1h-1zM881 147h1v1h-1zM778 286h1v1h-1zM910 122h1v1h-1zM912 128h1v1h-1zM877 281h1v1h-1zM910 186h1v1h-1zM1006 236h1v1h-1zM917 209h1v1h-1zM818 209h1v1h-1zM833 179h1v1h-1zM811 108h1v1h-1zM791 200h1v1h-1zM852 302h1v1h-1zM1004 207h1v1h-1zM879 127h1v1h-1zM947 125h1v1h-1zM839 91h1v1h-1zM779 273h1v1h-1zM760 222h1v1h-1zM831 168h1v1h-1zM930 291h1v1h-1zM777 240h1v1h-1zM826 224h1v1h-1zM965 176h1v1h-1zM971 271h1v1h-1zM868 145h1v1h-1zM1008 240h1v1h-1zM1018 181h1v1h-1zM997 186h1v1h-1zM884 191h1v1h-1zM1008 208h1v1h-1zM949 252h1v1h-1zM786 247h1v1h-1zM865 166h1v1h-1z"/><path fill="#9a9a9a" fill-opacity="0.6" d="M894 193h1v1h-1zM931 327h1v1h-1zM948 92h1v1h-1zM936 347h1v1h-1zM850 270h1v1h-1zM858 124h1v1h-1zM900 98h1v1h-1zM1016 267h1v1h-1zM1021 180h1v1h-1zM848 135h1v1h-1zM835 174h1v1h-1zM914 350h1v1h-1zM815 103h1v1h-1zM994 233h1v1h-1zM1000 227h1v1h-1zM875 94h1v1h-1zM816 328h1v1h-1zM871 243h1v1h-1zM981 274h1v1h-1zM803 298h1v1h-1zM1033 192h1v1h-1zM803 142h1v1h-1zM804 201h1v1h-1zM888 170h1v1h-1zM796 183h1v1h-1zM805 259h1v1h-1zM929 102h1v1h-1zM940 166h1v1h-1zM860 261h1v1h-1zM849 261h1v1h-1zM961 219h1v1h-1zM1008 187h1v1h-1zM859 229h1v1h-1zM825 233h1v1h-1zM905 174h1v1h-1zM860 232h1v1h-1zM885 337h1v1h-1zM858 173h1v1h-1zM863 265h1v1h-1zM881 228h1v1h-1zM1004 185h1v1h-1zM932 267h1v1h-1zM958 331h1v1h-1zM781 180h1v1h-1zM788 153h1v1h-1zM869 269h1v1h-1zM907 259h1v1h-1zM1017 217h1v1h-1zM862 151h1v1h-1zM966 326h1v1h-1zM867 340h1v1h-1zM826 86h1v1h-1zM779 208h1v1h-1zM977 219h1v1h-1zM967 335h1v1h-1zM969 220h1v1h-1zM835 123h1v1h-1zM878 311h1v1h-1zM830 160h1v1h-1zM926 272h1v1h-1zM934 193h1v1h-1zM892 251h1v1h-1zM887 174h1v1h-1zM914 210h1v1h-1zM814 324h1v1h-1zM787 213h1v1h-1zM877 162h1v1h-1zM827 120h1v1h-1zM981 149h1v1h-1zM982 303h1v1h-1zM803 103h1v1h-1zM889 279h1v1h-1zM964 220h1v1h-1zM953 121h1v1h-1zM861 243h1v1h-1zM927 213h1v1h-1zM801 283h1v1h-1zM873 322h1v1h-1zM819 326h1v1h-1zM867 141h1v1h-1zM1001 142h1v1h-1zM880 232h1v1h-1zM880 347h1v1h-1zM1020 242h1v1h-1zM981 320h1v1h-1zM839 300h1v1h-1zM867 199h1v1h-1zM960 297h1v1h-1zM825 226h1v1h-1zM849 216h1v1h-1zM804 169h1v1h-1zM813 174h1v1h-1zM809 130h1v1h-1zM988 163h1v1h-1zM871 148h1v1h-1zM970 265h1v1h-1zM935 250h1v1h-1zM875 198h1v1h-1zM855 135h1v1h-1zM883 304h1v1h-1zM973 331h1v1h-1zM863 113h1v1h-1zM900 352h1v1h-1zM796 278h1v1h-1zM894 72h1v1h-1zM889 268h1v1h-1zM889 88h1v1h-1zM1014 247h1v1h-1zM857 133h1v1h-1zM793 115h1v1h-1zM852 323h1v1h-1zM978 205h1v1h-1zM856 263h1v1h-1zM936 92h1v1h-1zM836 82h1v1h-1zM990 190h1v1h-1zM934 163h1v1h-1zM886 204h1v1h-1zM810 217h1v1h-1zM915 266h1v1h-1zM980 133h1v1h-1zM890 176h1v1h-1zM844 273h1v1h-1zM969 275h1v1h-1zM943 80h1v1h-1zM959 209h1v1h-1zM813 98h1v1h-1zM880 338h1v1h-1zM783 180h1v1h-1zM1005 257h1v1h-1zM832 162h1v1h-1zM1008 122h1v1h-1zM843 283h1v1h-1zM945 144h1v1h-1zM876 81h1v1h-1zM866 219h1v1h-1zM828 320h1v1h-1zM1037 239h1v1h-1zM776 230h1v1h-1zM1004 252h1v1h-1zM821 96h1v1h-1zM975 221h1v1h-1zM878 231h1v1h-1zM1020 175h1v1h-1zM862 91h1v1h-1zM936 219h1v1h-1zM900 170h1v1h-1zM895 73h1v1h-1zM890 145h1v1h-1zM955 118h1v1h-1zM858 181h1v1h-1zM813 276h1v1h-1zM990 262h1v1h-1zM937 181h1v1h-1zM1014 163h1v1h-1zM943 186h1v1h-1zM777 256h1v1h-1zM937 342h1v1h-1zM932 217h1v1h-1zM803 141h1v1h-1zM979 328h1v1h-1zM777 225h1v1h-1zM1013 268h1v1h-1zM948 222h1v1h-1zM920 157h1v1h-1zM889 331h1v1h-1zM944 185h1v1h-1zM970 200h1v1h-1zM973 122h1v1h-1zM800 165h1v1h-1zM1001 188h1v1h-1zM857 321h1v1h-1zM984 149h1v1h-1zM907 151h1v1h-1zM978 100h1v1h-1zM1015 159h1v1h-1zM887 109h1v1h-1zM803 314h1v1h-1zM921 130h1v1h-1zM988 270h1v1h-1zM986 253h1v1h-1zM922 257h1v1h-1zM872 189h1v1h-1zM847 240h1v1h-1zM846 319h1v1h-1zM897 275h1v1h-1zM1003 282h1v1h-1zM1026 223h1v1h-1zM912 299h1v1h-1zM829 287h1v1h-1zM916 69h1v1h-1zM842 208h1v1h-1zM870 344h1v1h-1zM784 190h1v1h-1zM925 272h1v1h-1zM810 253h1v1h-1zM1014 212h1v1h-1zM865 250h1v1h-1zM919 297h1v1h-1zM1001 237h1v1h-1zM840 100h1v1h-1zM776 219h1v1h-1zM783 224h1v1h-1zM838 320h1v1h-1zM812 116h1v1h-1zM862 85h1v1h-1zM802 156h1v1h-1zM795 122h1v1h-1zM878 83h1v1h-1zM775 177h1v1h-1zM949 173h1v1h-1zM837 327h1v1h-1zM847 128h1v1h-1zM932 138h1v1h-1zM795 283h1v1h-1zM909 78h1v1h-1zM907 142h1v1h-1zM925 248h1v1h-1zM867 157h1v1h-1zM963 253h1v1h-1zM935 170h1v1h-1zM826 91h1v1h-1zM929 341h1v1h-1zM863 85h1v1h-1zM868 121h1v1h-1zM827 311h1v1h-1zM970 166h1v1h-1zM887 91h1v1h-1zM902 319h1v1h-1zM930 191h1v1h-1zM957 250h1v1h-1zM925 318h1v1h-1zM985 152h1v1h-1zM871 151h1v1h-1zM995 219h1v1h-1zM911 321h1v1h-1zM905 107h1v1h-1zM967 266h1v1h-1zM942 252h1v1h-1zM897 91h1v1h-1zM922 109h1v1h-1zM863 322h1v1h-1zM882 304h1v1h-1zM787 166h1v1h-1zM1009 191h1v1h-1zM943 102h1v1h-1zM915 123h1v1h-1zM875 92h1v1h-1zM768 223h1v1h-1zM908 196h1v1h-1zM799 292h1v1h-1zM821 100h1v1h-1zM981 272h1v1h-1zM896 148h1v1h-1zM949 330h1v1h-1zM965 303h1v1h-1zM961 300h1v1h-1zM921 82h1v1h-1zM801 186h1v1h-1zM914 203h1v1h-1zM874 257h1v1h-1zM835 218h1v1h-1zM985 301h1v1h-1zM771 196h1v1h-1zM831 199h1v1h-1zM918 275h1v1h-1zM825 210h1v1h-1zM911 93h1v1h-1zM828 194h1v1h-1zM758 224h1v1h-1zM962 234h1v1h-1zM791 207h1v1h-1zM837 176h1v1h-1zM772 256h1v1h-1zM897 237h1v1h-1zM979 275h1v1h-1zM986 240h1v1h-1zM797 313h1v1h-1zM969 305h1v1h-1zM859 79h1v1h-1zM888 89h1v1h-1zM948 135h1v1h-1zM968 299h1v1h-1zM797 275h1v1h-1zM965 239h1v1h-1zM937 286h1v1h-1zM792 274h1v1h-1zM949 164h1v1h-1zM788 297h1v1h-1zM914 126h1v1h-1zM793 216h1v1h-1zM911 70h1v1h-1zM876 316h1v1h-1zM860 162h1v1h-1zM828 270h1v1h-1zM945 203h1v1h-1zM934 246h1v1h-1zM1026 255h1v1h-1zM969 312h1v1h-1zM804 204h1v1h-1zM1014 211h1v1h-1zM852 104h1v1h-1zM933 279h1v1h-1zM792 147h1v1h-1zM855 322h1v1h-1zM926 161h1v1h-1zM924 149h1v1h-1zM878 91h1v1h-1zM1014 160h1v1h-1zM922 191h1v1h-1zM957 184h1v1h-1zM983 199h1v1h-1zM961 319h1v1h-1zM846 105h1v1h-1zM835 330h1v1h-1zM807 239h1v1h-1zM1014 191h1v1h-1zM1029 207h1v1h-1zM793 221h1v1h-1zM823 233h1v1h-1zM929 293h1v1h-1zM798 301h1v1h-1zM777 186h1v1h-1zM791 278h1v1h-1zM978 282h1v1h-1zM888 128h1v1h-1zM860 84h1v1h-1zM847 198h1v1h-1zM967 130h1v1h-1zM813 174h1v1h-1zM765 200h1v1h-1zM1003 172h1v1h-1zM949 198h1v1h-1zM829 197h1v1h-1zM784 171h1v1h-1zM902 129h1v1h-1zM840 215h1v1h-1zM923 273h1v1h-1zM880 212h1v1h-1zM940 124h1v1h-1zM1009 297h1v1h-1zM947 162h1v1h-1zM975 184h1v1h-1zM777 259h1v1h-1zM1008 174h1v1h-1zM976 305h1v1h-1zM767 204h1v1h-1zM1018 175h1v1h-1zM802 310h1v1h-1zM980 243h1v1h-1zM1000 175h1v1h-1zM759 217h1v1h-1zM815 141h1v1h-1zM1003 119h1v1h-1zM861 300h1v1h-1zM861 170h1v1h-1zM973 177h1v1h-1zM971 132h1v1h-1zM806 217h1v1h-1zM877 317h1v1h-1zM942 288h1v1h-1zM869 116h1v1h-1zM902 322h1v1h-1zM836 275h1v1h-1zM932 323h1v1h-1zM847 251h1v1h-1zM780 247h1v1h-1zM814 103h1v1h-1zM871 106h1v1h-1zM984 239h1v1h-1zM909 86h1v1h-1zM1006 231h1v1h-1zM897 101h1v1h-1zM985 234h1v1h-1zM754 211h1v1h-1zM996 234h1v1h-1zM802 201h1v1h-1zM995 166h1v1h-1zM872 254h1v1h-1zM945 259h1v1h-1zM969 308h1v1h-1zM818 241h1v1h-1zM1006 141h1v1h-1zM987 242h1v1h-1zM916 282h1v1h-1zM955 126h1v1h-1zM922 318h1v1h-1zM1014 205h1v1h-1zM869 111h1v1h-1zM933 137h1v1h-1zM955 166h1v1h-1zM923 89h1v1h-1zM1025 173h1v1h-1zM1015 216h1v1h-1zM926 339h1v1h-1zM952 185h1v1h-1zM868 299h1v1h-1zM968 120h1v1h-1zM856 157h1v1h-1zM950 223h1v1h-1zM993 119h1v1h-1zM959 241h1v1h-1zM844 335h1v1h-1zM942 301h1v1h-1zM992 135h1v1h-1zM953 248h1v1h-1zM989 146h1v1h-1zM1000 228h1v1h-1zM924 78h1v1h-1zM792 132h1v1h-1zM789 254h1v1h-1zM916 150h1v1h-1zM808 264h1v1h-1zM817 214h1v1h-1zM879 308h1v1h-1zM953 263h1v1h-1zM854 162h1v1h-1zM979 165h1v1h-1zM881 337h1v1h-1zM1012 180h1v1h-1zM1011 276h1v1h-1zM836 326h1v1h-1zM789 283h1v1h-1zM977 113h1v1h-1zM790 121h1v1h-1zM861 229h1v1h-1zM989 206h1v1h-1zM1007 250h1v1h-1zM1017 193h1v1h-1zM1004 178h1v1h-1zM1000 178h1v1h-1zM894 108h1v1h-1zM871 134h1v1h-1zM867 325h1v1h-1zM987 195h1v1h-1zM879 204h1v1h-1zM787 189h1v1h-1zM905 144h1v1h-1zM804 211h1v1h-1zM917 259h1v1h-1zM927 116h1v1h-1zM782 276h1v1h-1zM899 343h1v1h-1zM842 324h1v1h-1zM881 78h1v1h-1zM878 351h1v1h-1zM967 174h1v1h-1zM854 292h1v1h-1zM927 126h1v1h-1zM970 211h1v1h-1zM987 227h1v1h-1zM882 150h1v1h-1zM1014 194h1v1h-1zM913 186h1v1h-1zM760 213h1v1h-1zM796 134h1v1h-1zM762 252h1v1h-1zM864 271h1v1h-1zM871 242h1v1h-1zM912 227h1v1h-1zM945 174h1v1h-1zM795 224h1v1h-1zM844 278h1v1h-1zM781 242h1v1h-1zM927 194h1v1h-1zM787 170h1v1h-1zM784 160h1v1h-1zM851 95h1v1h-1zM874 135h1v1h-1zM918 288h1v1h-1zM969 110h1v1h-1zM872 182h1v1h-1zM840 198h1v1h-1zM866 324h1v1h-1zM774 139h1v1h-1zM978 295h1v1h-1zM947 327h1v1h-1zM1024 175h1v1h-1zM862 330h1v1h-1zM921 291h1v1h-1zM901 127h1v1h-1zM805 251h1v1h-1zM922 199h1v1h-1zM931 231h1v1h-1zM782 191h1v1h-1zM812 178h1v1h-1zM823 273h1v1h-1zM776 143h1v1h-1zM910 192h1v1h-1zM1001 194h1v1h-1zM1016 207h1v1h-1zM845 225h1v1h-1zM851 339h1v1h-1zM856 90h1v1h-1zM895 175h1v1h-1zM940 258h1v1h-1zM906 300h1v1h-1zM992 160h1v1h-1zM1011 151h1v1h-1zM1016 239h1v1h-1zM866 167h1v1h-1zM941 242h1v1h-1zM867 211h1v1h-1zM948 230h1v1h-1zM986 106h1v1h-1zM910 154h1v1h-1zM873 86h1v1h-1zM884 105h1v1h-1zM982 248h1v1h-1zM1020 251h1v1h-1zM904 257h1v1h-1zM821 230h1v1h-1zM987 322h1v1h-1zM812 212h1v1h-1zM942 345h1v1h-1zM1008 153h1v1h-1zM1017 240h1v1h-1zM910 235h1v1h-1zM929 76h1v1h-1zM905 107h1v1h-1zM958 193h1v1h-1zM872 240h1v1h-1zM817 213h1v1h-1zM982 314h1v1h-1zM891 220h1v1h-1zM831 104h1v1h-1zM866 242h1v1h-1zM840 156h1v1h-1zM908 298h1v1h-1zM909 353h1v1h-1zM800 281h1v1h-1zM925 344h1v1h-1zM947 102h1v1h-1zM962 220h1v1h-1zM805 131h1v1h-1zM775 256h1v1h-1zM918 325h1v1h-1zM945 267h1v1h-1zM912 270h1v1h-1zM977 175h1v1h-1zM962 104h1v1h-1zM876 305h1v1h-1zM934 159h1v1h-1zM806 260h1v1h-1zM857 74h1v1h-1zM769 255h1v1h-1zM900 292h1v1h-1zM822 248h1v1h-1zM852 177h1v1h-1zM893 114h1v1h-1zM1003 223h1v1h-1zM810 120h1v1h-1zM855 146h1v1h-1zM818 258h1v1h-1zM824 184h1v1h-1zM1014 137h1v1h-1zM896 220h1v1h-1zM971 195h1v1h-1zM798 107h1v1h-1zM884 276h1v1h-1zM868 258h1v1h-1zM855 293h1v1h-1zM943 237h1v1h-1zM837 224h1v1h-1zM947 292h1v1h-1zM1015 201h1v1h-1zM973 238h1v1h-1zM801 117h1v1h-1zM838 85h1v1h-1zM919 249h1v1h-1zM812 126h1v1h-1zM1014 217h1v1h-1zM796 224h1v1h-1zM923 77h1v1h-1zM943 296h1v1h-1zM857 85h1v1h-1zM890 305h1v1h-1zM829 222h1v1h-1zM921 103h1v1h-1zM911 299h1v1h-1zM774 257h1v1h-1zM917 308h1v1h-1zM909 156h1v1h-1zM869 245h1v1h-1zM822 191h1v1h-1zM986 130h1v1h-1zM852 139h1v1h-1zM1031 193h1v1h-1zM797 261h1v1h-1zM859 166h1v1h-1zM984 202h1v1h-1zM906 323h1v1h-1zM857 330h1v1h-1zM889 246h1v1h-1zM1022 176h1v1h-1zM888 202h1v1h-1zM959 318h1v1h-1zM867 281h1v1h-1zM818 104h1v1h-1zM933 223h1v1h-1zM877 82h1v1h-1zM889 110h1v1h-1zM814 185h1v1h-1zM949 156h1v1h-1zM922 133h1v1h-1zM922 225h1v1h-1zM1000 264h1v1h-1zM825 324h1v1h-1zM962 333h1v1h-1zM807 236h1v1h-1zM870 144h1v1h-1zM922 187h1v1h-1zM831 102h1v1h-1zM770 237h1v1h-1zM1018 180h1v1h-1zM779 227h1v1h-1zM940 202h1v1h-1zM855 142h1v1h-1zM1026 249h1v1h-1zM881 109h1v1h-1zM933 247h1v1h-1zM912 141h1v1h-1zM758 237h1v1h-1zM865 204h1v1h-1zM929 179h1v1h-1zM913 167h1v1h-1zM885 92h1v1h-1zM985 150h1v1h-1zM953 133h1v1h-1zM825 199h1v1h-1zM840 180h1v1h-1zM987 151h1v1h-1zM977 139h1v1h-1zM906 278h1v1h-1zM972 131h1v1h-1zM817 326h1v1h-1zM973 214h1v1h-1zM838 300h1v1h-1zM840 83h1v1h-1zM907 271h1v1h-1zM974 167h1v1h-1zM908 227h1v1h-1zM994 149h1v1h-1zM980 153h1v1h-1zM780 162h1v1h-1zM921 113h1v1h-1zM993 262h1v1h-1zM982 157h1v1h-1zM878 251h1v1h-1zM840 279h1v1h-1zM855 243h1v1h-1zM829 273h1v1h-1zM913 347h1v1h-1zM842 323h1v1h-1zM927 277h1v1h-1zM866 194h1v1h-1zM894 353h1v1h-1zM846 199h1v1h-1zM857 222h1v1h-1zM818 282h1v1h-1zM818 215h1v1h-1zM1034 234h1v1h-1zM802 190h1v1h-1zM976 235h1v1h-1zM876 340h1v1h-1zM816 298h1v1h-1zM1007 260h1v1h-1zM834 327h1v1h-1zM992 279h1v1h-1zM989 299h1v1h-1zM845 133h1v1h-1zM905 200h1v1h-1zM892 256h1v1h-1zM899 158h1v1h-1zM922 149h1v1h-1zM816 199h1v1h-1zM841 128h1v1h-1zM824 223h1v1h-1zM953 297h1v1h-1zM853 332h1v1h-1zM848 297h1v1h-1zM892 187h1v1h-1zM863 319h1v1h-1zM808 217h1v1h-1zM850 91h1v1h-1zM818 294h1v1h-1zM952 284h1v1h-1zM994 156h1v1h-1zM952 207h1v1h-1zM885 344h1v1h-1zM861 239h1v1h-1zM757 234h1v1h-1zM938 303h1v1h-1zM1015 167h1v1h-1zM893 104h1v1h-1zM971 92h1v1h-1zM810 145h1v1h-1zM908 196h1v1h-1zM966 197h1v1h-1zM920 140h1v1h-1z"/><path fill="#050505" d="M812 150h1v1h-1zM812 152h1v1h-1zM812 154h1v1h-1zM813 149h1v1h-1zM813 151h1v1h-1zM813 152h1v1h-1zM814 148h1v1h-1zM814 149h1v1h-1zM814 150h1v1h-1zM814 151h1v1h-1zM814 154h1v1h-1zM815 151h1v1h-1zM815 152h1v1h-1zM815 153h1v1h-1zM815 156h1v1h-1zM816 147h1v1h-1zM816 149h1v1h-1zM816 156h1v1h-1zM817 149h1v1h-1zM817 150h1v1h-1zM817 152h1v1h-1zM817 153h1v1h-1zM817 154h1v1h-1zM817 155h1v1h-1zM817 156h1v1h-1zM817 157h1v1h-1zM818 148h1v1h-1zM818 150h1v1h-1zM818 151h1v1h-1zM818 154h1v1h-1zM818 156h1v1h-1zM818 157h1v1h-1zM819 151h1v1h-1zM819 152h1v1h-1zM819 153h1v1h-1zM819 154h1v1h-1zM819 155h1v1h-1zM820 150h1v1h-1zM820 151h1v1h-1zM820 152h1v1h-1zM820 155h1v1h-1zM820 156h1v1h-1zM821 151h1v1h-1zM821 153h1v1h-1zM821 155h1v1h-1zM822 151h1v1h-1zM822 152h1v1h-1zM822 153h1v1h-1zM850 154h1v1h-1zM851 153h1v1h-1zM851 155h1v1h-1zM852 151h1v1h-1zM852 153h1v1h-1zM852 155h1v1h-1zM852 156h1v1h-1zM853 151h1v1h-1zM853 152h1v1h-1zM853 153h1v1h-1zM853 154h1v1h-1zM853 155h1v1h-1zM854 152h1v1h-1zM854 153h1v1h-1zM854 154h1v1h-1zM854 156h1v1h-1zM855 152h1v1h-1zM855 153h1v1h-1zM855 154h1v1h-1zM855 155h1v1h-1zM856 153h1v1h-1zM856 154h1v1h-1zM856 155h1v1h-1zM857 152h1v1h-1zM857 153h1v1h-1zM857 155h1v1h-1zM921 159h1v1h-1zM921 160h1v1h-1zM921 161h1v1h-1zM921 162h1v1h-1zM922 159h1v1h-1zM922 160h1v1h-1zM922 163h1v1h-1zM923 159h1v1h-1zM923 162h1v1h-1zM923 164h1v1h-1zM923 165h1v1h-1zM924 159h1v1h-1zM924 161h1v1h-1zM924 162h1v1h-1zM925 159h1v1h-1zM925 161h1v1h-1zM925 163h1v1h-1zM925 164h1v1h-1zM925 165h1v1h-1zM926 160h1v1h-1zM926 163h1v1h-1zM927 160h1v1h-1zM927 161h1v1h-1zM927 164h1v1h-1zM927 166h1v1h-1zM928 161h1v1h-1zM928 164h1v1h-1zM929 164h1v1h-1zM883 231h1v1h-1zM883 232h1v1h-1zM884 229h1v1h-1zM884 230h1v1h-1zM884 231h1v1h-1zM884 232h1v1h-1zM884 233h1v1h-1zM884 235h1v1h-1zM884 236h1v1h-1zM885 228h1v1h-1zM885 229h1v1h-1zM885 230h1v1h-1zM885 231h1v1h-1zM885 232h1v1h-1zM885 233h1v1h-1zM885 235h1v1h-1zM885 236h1v1h-1zM885 237h1v1h-1zM886 228h1v1h-1zM886 229h1v1h-1zM886 231h1v1h-1zM886 232h1v1h-1zM886 233h1v1h-1zM886 236h1v1h-1zM886 238h1v1h-1zM887 226h1v1h-1zM887 227h1v1h-1zM887 228h1v1h-1zM887 230h1v1h-1zM887 232h1v1h-1zM887 236h1v1h-1zM887 237h1v1h-1zM887 238h1v1h-1zM888 227h1v1h-1zM888 231h1v1h-1zM888 232h1v1h-1zM888 235h1v1h-1zM888 238h1v1h-1zM888 239h1v1h-1zM889 226h1v1h-1zM889 228h1v1h-1zM889 229h1v1h-1zM889 230h1v1h-1zM889 232h1v1h-1zM889 234h1v1h-1zM889 235h1v1h-1zM889 236h1v1h-1zM889 237h1v1h-1zM889 238h1v1h-1zM889 239h1v1h-1zM890 226h1v1h-1zM890 227h1v1h-1zM890 228h1v1h-1zM890 229h1v1h-1zM890 231h1v1h-1zM890 233h1v1h-1zM890 235h1v1h-1zM890 236h1v1h-1zM890 237h1v1h-1zM890 238h1v1h-1zM890 239h1v1h-1zM891 228h1v1h-1zM891 229h1v1h-1zM891 231h1v1h-1zM891 234h1v1h-1zM891 236h1v1h-1zM891 237h1v1h-1zM891 238h1v1h-1zM891 239h1v1h-1zM892 226h1v1h-1zM892 227h1v1h-1zM892 228h1v1h-1zM892 229h1v1h-1zM892 230h1v1h-1zM892 232h1v1h-1zM892 233h1v1h-1zM892 234h1v1h-1zM892 235h1v1h-1zM892 238h1v1h-1zM893 228h1v1h-1zM893 229h1v1h-1zM893 230h1v1h-1zM893 233h1v1h-1zM893 235h1v1h-1zM893 236h1v1h-1zM894 228h1v1h-1zM894 229h1v1h-1zM894 230h1v1h-1zM894 235h1v1h-1zM894 236h1v1h-1zM895 231h1v1h-1zM895 233h1v1h-1zM895 234h1v1h-1zM895 236h1v1h-1zM896 232h1v1h-1zM896 233h1v1h-1zM896 234h1v1h-1zM896 235h1v1h-1zM986 258h1v1h-1zM986 260h1v1h-1zM987 259h1v1h-1zM987 260h1v1h-1zM988 256h1v1h-1zM988 258h1v1h-1zM988 259h1v1h-1zM988 260h1v1h-1zM988 261h1v1h-1zM988 262h1v1h-1zM988 264h1v1h-1zM989 256h1v1h-1zM989 258h1v1h-1zM989 260h1v1h-1zM989 261h1v1h-1zM989 263h1v1h-1zM990 255h1v1h-1zM990 256h1v1h-1zM990 257h1v1h-1zM990 259h1v1h-1zM990 260h1v1h-1zM990 261h1v1h-1zM990 262h1v1h-1zM990 264h1v1h-1zM991 257h1v1h-1zM991 260h1v1h-1zM991 262h1v1h-1zM991 263h1v1h-1zM991 264h1v1h-1zM992 257h1v1h-1zM992 258h1v1h-1zM992 261h1v1h-1zM992 262h1v1h-1zM993 259h1v1h-1zM993 261h1v1h-1zM993 262h1v1h-1zM993 263h1v1h-1zM994 256h1v1h-1zM994 259h1v1h-1zM994 260h1v1h-1zM994 264h1v1h-1zM995 258h1v1h-1zM995 259h1v1h-1zM995 261h1v1h-1zM995 263h1v1h-1zM996 261h1v1h-1zM996 263h1v1h-1zM997 261h1v1h-1zM843 283h1v1h-1zM843 284h1v1h-1zM843 285h1v1h-1zM844 282h1v1h-1zM844 283h1v1h-1zM844 286h1v1h-1zM844 287h1v1h-1zM845 281h1v1h-1zM845 283h1v1h-1zM845 285h1v1h-1zM845 288h1v1h-1zM846 285h1v1h-1zM846 286h1v1h-1zM846 287h1v1h-1zM846 288h1v1h-1zM847 280h1v1h-1zM847 281h1v1h-1zM847 286h1v1h-1zM847 287h1v1h-1zM848 280h1v1h-1zM848 282h1v1h-1zM848 287h1v1h-1zM849 280h1v1h-1zM849 281h1v1h-1zM849 284h1v1h-1zM849 285h1v1h-1zM849 286h1v1h-1zM849 288h1v1h-1zM850 281h1v1h-1zM850 283h1v1h-1zM850 284h1v1h-1zM850 286h1v1h-1zM851 281h1v1h-1zM851 282h1v1h-1zM851 283h1v1h-1zM851 284h1v1h-1zM851 286h1v1h-1zM851 288h1v1h-1zM851 290h1v1h-1zM852 281h1v1h-1zM852 283h1v1h-1zM852 284h1v1h-1zM852 287h1v1h-1zM852 289h1v1h-1zM853 282h1v1h-1zM853 287h1v1h-1zM853 288h1v1h-1zM853 289h1v1h-1zM854 283h1v1h-1zM854 284h1v1h-1zM854 286h1v1h-1zM854 289h1v1h-1zM855 283h1v1h-1zM855 286h1v1h-1zM849 240h1v1h-1zM849 241h1v1h-1zM849 244h1v1h-1zM849 245h1v1h-1zM849 246h1v1h-1zM849 247h1v1h-1zM850 237h1v1h-1zM850 238h1v1h-1zM850 239h1v1h-1zM850 240h1v1h-1zM850 245h1v1h-1zM850 249h1v1h-1zM850 250h1v1h-1zM851 236h1v1h-1zM851 237h1v1h-1zM851 242h1v1h-1zM851 243h1v1h-1zM851 245h1v1h-1zM851 246h1v1h-1zM851 249h1v1h-1zM852 236h1v1h-1zM852 237h1v1h-1zM852 238h1v1h-1zM852 239h1v1h-1zM852 240h1v1h-1zM852 241h1v1h-1zM852 244h1v1h-1zM852 245h1v1h-1zM852 246h1v1h-1zM852 248h1v1h-1zM853 235h1v1h-1zM853 237h1v1h-1zM853 238h1v1h-1zM853 240h1v1h-1zM853 241h1v1h-1zM853 242h1v1h-1zM853 243h1v1h-1zM853 244h1v1h-1zM853 245h1v1h-1zM853 246h1v1h-1zM854 236h1v1h-1zM854 237h1v1h-1zM854 238h1v1h-1zM854 240h1v1h-1zM854 241h1v1h-1zM854 242h1v1h-1zM854 243h1v1h-1zM854 244h1v1h-1zM854 245h1v1h-1zM854 247h1v1h-1zM855 239h1v1h-1zM855 240h1v1h-1zM855 241h1v1h-1zM855 242h1v1h-1zM855 243h1v1h-1zM855 244h1v1h-1zM855 245h1v1h-1zM856 238h1v1h-1zM856 240h1v1h-1zM856 241h1v1h-1zM856 242h1v1h-1zM927 97h1v1h-1zM927 98h1v1h-1zM927 99h1v1h-1zM927 101h1v1h-1zM928 100h1v1h-1zM928 102h1v1h-1zM929 95h1v1h-1zM929 96h1v1h-1zM929 98h1v1h-1zM929 100h1v1h-1zM929 101h1v1h-1zM929 102h1v1h-1zM930 98h1v1h-1zM930 100h1v1h-1zM930 101h1v1h-1zM930 103h1v1h-1zM931 95h1v1h-1zM931 96h1v1h-1zM931 98h1v1h-1zM931 99h1v1h-1zM931 100h1v1h-1zM931 102h1v1h-1zM931 104h1v1h-1zM932 97h1v1h-1zM932 98h1v1h-1zM932 101h1v1h-1zM932 102h1v1h-1zM932 103h1v1h-1zM933 96h1v1h-1zM933 97h1v1h-1zM933 99h1v1h-1zM933 101h1v1h-1zM933 102h1v1h-1zM933 104h1v1h-1zM933 105h1v1h-1zM933 107h1v1h-1zM934 98h1v1h-1zM934 100h1v1h-1zM934 101h1v1h-1zM934 103h1v1h-1zM934 104h1v1h-1zM934 108h1v1h-1zM935 101h1v1h-1zM935 102h1v1h-1zM935 103h1v1h-1zM935 105h1v1h-1zM936 102h1v1h-1zM936 103h1v1h-1zM936 104h1v1h-1zM936 106h1v1h-1zM937 104h1v1h-1zM937 105h1v1h-1zM937 106h1v1h-1zM937 107h1v1h-1zM937 108h1v1h-1zM938 105h1v1h-1zM938 106h1v1h-1zM922 129h1v1h-1zM923 131h1v1h-1zM924 127h1v1h-1zM924 131h1v1h-1zM924 132h1v1h-1zM924 133h1v1h-1zM924 134h1v1h-1zM925 127h1v1h-1zM925 128h1v1h-1zM925 130h1v1h-1zM926 128h1v1h-1zM926 129h1v1h-1zM926 130h1v1h-1zM926 131h1v1h-1zM926 135h1v1h-1zM927 129h1v1h-1zM927 132h1v1h-1zM927 133h1v1h-1zM927 136h1v1h-1zM927 137h1v1h-1zM928 127h1v1h-1zM928 130h1v1h-1zM928 131h1v1h-1zM928 134h1v1h-1zM928 135h1v1h-1zM929 129h1v1h-1zM929 132h1v1h-1zM929 134h1v1h-1zM929 135h1v1h-1zM930 129h1v1h-1zM930 131h1v1h-1zM930 132h1v1h-1zM930 133h1v1h-1zM930 134h1v1h-1zM930 135h1v1h-1zM931 130h1v1h-1zM931 131h1v1h-1zM931 133h1v1h-1zM932 130h1v1h-1zM932 131h1v1h-1zM932 132h1v1h-1zM932 135h1v1h-1zM933 131h1v1h-1zM933 135h1v1h-1zM951 154h1v1h-1zM951 157h1v1h-1zM951 159h1v1h-1zM952 155h1v1h-1zM952 161h1v1h-1zM952 162h1v1h-1zM953 152h1v1h-1zM953 153h1v1h-1zM953 155h1v1h-1zM953 161h1v1h-1zM954 153h1v1h-1zM954 154h1v1h-1zM954 158h1v1h-1zM954 161h1v1h-1zM955 151h1v1h-1zM955 153h1v1h-1zM955 155h1v1h-1zM955 156h1v1h-1zM955 157h1v1h-1zM955 160h1v1h-1zM955 163h1v1h-1zM956 151h1v1h-1zM956 152h1v1h-1zM956 155h1v1h-1zM956 159h1v1h-1zM957 156h1v1h-1zM957 157h1v1h-1zM957 158h1v1h-1zM957 159h1v1h-1zM958 156h1v1h-1zM958 157h1v1h-1zM959 153h1v1h-1zM959 157h1v1h-1zM1032 212h1v1h-1zM1032 213h1v1h-1zM1032 214h1v1h-1zM1032 215h1v1h-1zM1033 211h1v1h-1zM1033 215h1v1h-1zM1033 217h1v1h-1zM1033 218h1v1h-1zM1034 213h1v1h-1zM1034 215h1v1h-1zM1034 218h1v1h-1zM1035 212h1v1h-1zM1035 213h1v1h-1zM1035 215h1v1h-1zM1035 217h1v1h-1zM1035 218h1v1h-1zM1035 219h1v1h-1zM1035 220h1v1h-1zM1036 211h1v1h-1zM1036 213h1v1h-1zM1036 216h1v1h-1zM1036 218h1v1h-1zM1036 219h1v1h-1zM1037 215h1v1h-1zM1037 216h1v1h-1zM1037 217h1v1h-1zM1037 220h1v1h-1zM1038 214h1v1h-1zM1038 217h1v1h-1zM1039 217h1v1h-1zM900 215h1v1h-1zM901 216h1v1h-1zM902 212h1v1h-1zM902 217h1v1h-1zM903 212h1v1h-1zM903 213h1v1h-1zM903 214h1v1h-1zM903 215h1v1h-1zM903 217h1v1h-1zM904 212h1v1h-1zM904 215h1v1h-1zM904 217h1v1h-1zM905 212h1v1h-1zM905 216h1v1h-1zM906 214h1v1h-1zM906 216h1v1h-1zM906 217h1v1h-1zM906 218h1v1h-1zM907 212h1v1h-1zM907 218h1v1h-1zM908 214h1v1h-1zM908 216h1v1h-1zM908 218h1v1h-1zM909 215h1v1h-1zM873 270h1v1h-1zM874 271h1v1h-1zM875 270h1v1h-1zM875 273h1v1h-1zM875 274h1v1h-1zM877 270h1v1h-1zM878 267h1v1h-1zM878 268h1v1h-1zM878 270h1v1h-1zM878 272h1v1h-1zM879 274h1v1h-1zM881 266h1v1h-1zM881 268h1v1h-1zM881 269h1v1h-1zM881 270h1v1h-1zM882 269h1v1h-1zM882 270h1v1h-1zM882 271h1v1h-1zM882 273h1v1h-1zM883 269h1v1h-1zM883 272h1v1h-1zM883 273h1v1h-1zM884 268h1v1h-1zM884 270h1v1h-1zM885 267h1v1h-1zM885 270h1v1h-1zM885 271h1v1h-1zM886 269h1v1h-1zM886 271h1v1h-1zM941 316h1v1h-1zM941 317h1v1h-1zM942 319h1v1h-1zM943 315h1v1h-1zM943 318h1v1h-1zM944 315h1v1h-1zM944 317h1v1h-1zM945 314h1v1h-1zM945 317h1v1h-1zM945 321h1v1h-1zM946 314h1v1h-1zM946 318h1v1h-1zM946 320h1v1h-1zM947 317h1v1h-1zM947 319h1v1h-1zM947 320h1v1h-1zM947 321h1v1h-1zM948 316h1v1h-1zM948 319h1v1h-1zM948 320h1v1h-1zM949 318h1v1h-1zM949 319h1v1h-1zM885 328h1v1h-1zM886 325h1v1h-1zM887 324h1v1h-1zM887 326h1v1h-1zM888 325h1v1h-1zM888 328h1v1h-1zM888 330h1v1h-1zM888 331h1v1h-1zM889 324h1v1h-1zM889 325h1v1h-1zM889 330h1v1h-1zM890 324h1v1h-1zM890 332h1v1h-1zM891 323h1v1h-1zM891 324h1v1h-1zM891 326h1v1h-1zM891 328h1v1h-1zM891 329h1v1h-1zM891 330h1v1h-1zM891 331h1v1h-1zM892 325h1v1h-1zM892 331h1v1h-1zM893 327h1v1h-1zM893 328h1v1h-1zM893 329h1v1h-1zM894 328h1v1h-1zM796 294h1v1h-1zM797 292h1v1h-1zM797 297h1v1h-1zM797 300h1v1h-1zM798 292h1v1h-1zM798 293h1v1h-1zM798 297h1v1h-1zM798 300h1v1h-1zM799 291h1v1h-1zM799 292h1v1h-1zM799 293h1v1h-1zM799 296h1v1h-1zM799 298h1v1h-1zM800 293h1v1h-1zM800 296h1v1h-1zM800 297h1v1h-1zM800 298h1v1h-1zM800 299h1v1h-1zM800 300h1v1h-1zM800 301h1v1h-1zM801 290h1v1h-1zM801 296h1v1h-1zM801 299h1v1h-1zM801 300h1v1h-1zM802 294h1v1h-1zM802 298h1v1h-1zM803 296h1v1h-1zM767 213h1v1h-1zM767 215h1v1h-1zM767 216h1v1h-1zM768 212h1v1h-1zM768 213h1v1h-1zM768 217h1v1h-1zM768 219h1v1h-1zM769 213h1v1h-1zM769 216h1v1h-1zM769 219h1v1h-1zM770 210h1v1h-1zM770 211h1v1h-1zM770 213h1v1h-1zM770 215h1v1h-1zM770 219h1v1h-1zM771 211h1v1h-1zM771 212h1v1h-1zM771 214h1v1h-1zM772 213h1v1h-1zM772 215h1v1h-1zM772 216h1v1h-1zM961 188h1v1h-1zM962 188h1v1h-1zM963 182h1v1h-1zM963 184h1v1h-1zM963 186h1v1h-1zM963 191h1v1h-1zM964 182h1v1h-1zM964 184h1v1h-1zM964 187h1v1h-1zM964 188h1v1h-1zM964 189h1v1h-1zM965 181h1v1h-1zM965 182h1v1h-1zM965 185h1v1h-1zM965 190h1v1h-1zM966 178h1v1h-1zM966 179h1v1h-1zM966 180h1v1h-1zM966 184h1v1h-1zM966 188h1v1h-1zM966 189h1v1h-1zM967 178h1v1h-1zM967 180h1v1h-1zM967 181h1v1h-1zM967 183h1v1h-1zM967 184h1v1h-1zM967 185h1v1h-1zM967 186h1v1h-1zM967 187h1v1h-1zM968 179h1v1h-1zM968 180h1v1h-1zM968 184h1v1h-1zM968 185h1v1h-1zM968 186h1v1h-1zM969 182h1v1h-1zM969 184h1v1h-1zM871 108h1v1h-1zM872 106h1v1h-1zM872 110h1v1h-1zM873 112h1v1h-1zM874 106h1v1h-1zM874 108h1v1h-1zM874 113h1v1h-1zM876 109h1v1h-1zM876 110h1v1h-1zM877 112h1v1h-1zM878 109h1v1h-1zM879 108h1v1h-1zM879 110h1v1h-1zM879 111h1v1h-1zM994 229h1v1h-1zM994 230h1v1h-1zM995 232h1v1h-1zM996 227h1v1h-1zM996 229h1v1h-1zM996 230h1v1h-1zM996 231h1v1h-1zM997 226h1v1h-1zM997 227h1v1h-1zM997 229h1v1h-1zM997 230h1v1h-1zM998 226h1v1h-1zM998 228h1v1h-1zM998 231h1v1h-1zM998 233h1v1h-1zM998 234h1v1h-1zM999 229h1v1h-1zM999 231h1v1h-1zM1000 226h1v1h-1zM1000 227h1v1h-1zM1000 228h1v1h-1zM1000 230h1v1h-1zM1000 231h1v1h-1zM1000 232h1v1h-1zM1001 229h1v1h-1zM958 228h1v1h-1zM958 230h1v1h-1zM958 232h1v1h-1zM959 228h1v1h-1zM959 230h1v1h-1zM959 231h1v1h-1zM959 232h1v1h-1zM960 227h1v1h-1zM960 228h1v1h-1zM960 230h1v1h-1zM960 231h1v1h-1zM961 229h1v1h-1zM961 230h1v1h-1zM961 231h1v1h-1zM962 229h1v1h-1zM962 231h1v1h-1zM802 185h1v1h-1zM802 186h1v1h-1zM806 185h1v1h-1zM807 184h1v1h-1zM808 185h1v1h-1zM808 186h1v1h-1zM810 186h1v1h-1zM811 186h1v1h-1zM829 85h1v1h-1zM829 88h1v1h-1zM830 87h1v1h-1zM831 85h1v1h-1zM831 87h1v1h-1zM832 85h1v1h-1zM832 86h1v1h-1zM833 85h1v1h-1zM836 85h1v1h-1zM866 86h1v1h-1zM867 86h1v1h-1zM869 84h1v1h-1zM870 87h1v1h-1zM870 88h1v1h-1zM870 89h1v1h-1zM871 86h1v1h-1zM871 89h1v1h-1zM872 87h1v1h-1zM1022 188h1v1h-1zM1022 189h1v1h-1zM1022 190h1v1h-1zM1023 189h1v1h-1zM1023 191h1v1h-1zM1023 192h1v1h-1zM1024 187h1v1h-1zM1024 188h1v1h-1zM1024 189h1v1h-1zM1024 191h1v1h-1zM1025 186h1v1h-1zM1025 187h1v1h-1zM1025 189h1v1h-1zM1025 192h1v1h-1zM1026 190h1v1h-1zM1027 189h1v1h-1zM1027 190h1v1h-1zM1027 191h1v1h-1zM1028 188h1v1h-1zM1029 189h1v1h-1zM1029 190h1v1h-1zM836 185h1v1h-1zM837 184h1v1h-1zM837 186h1v1h-1zM837 187h1v1h-1zM838 184h1v1h-1zM838 185h1v1h-1zM839 184h1v1h-1zM839 185h1v1h-1zM839 188h1v1h-1zM840 185h1v1h-1zM840 186h1v1h-1zM841 184h1v1h-1zM841 185h1v1h-1zM841 188h1v1h-1zM843 184h1v1h-1zM843 186h1v1h-1zM781 249h1v1h-1zM781 250h1v1h-1zM781 251h1v1h-1zM782 250h1v1h-1zM783 247h1v1h-1zM783 249h1v1h-1zM783 250h1v1h-1zM783 253h1v1h-1zM784 249h1v1h-1zM784 253h1v1h-1zM785 249h1v1h-1zM785 252h1v1h-1zM786 247h1v1h-1zM786 250h1v1h-1zM787 249h1v1h-1zM787 252h1v1h-1zM1017 265h1v1h-1zM1018 264h1v1h-1zM1018 265h1v1h-1zM1018 268h1v1h-1zM1019 263h1v1h-1zM1019 264h1v1h-1zM1019 266h1v1h-1zM1019 267h1v1h-1zM1019 268h1v1h-1zM1020 263h1v1h-1zM1020 267h1v1h-1zM1020 269h1v1h-1zM1021 262h1v1h-1zM1021 264h1v1h-1zM1021 265h1v1h-1zM1021 267h1v1h-1zM1022 262h1v1h-1zM1022 263h1v1h-1zM1022 264h1v1h-1zM1022 266h1v1h-1zM1022 267h1v1h-1zM1023 268h1v1h-1zM1024 264h1v1h-1zM1025 265h1v1h-1zM921 261h1v1h-1zM922 259h1v1h-1zM922 261h1v1h-1zM923 258h1v1h-1zM923 260h1v1h-1zM923 261h1v1h-1zM924 258h1v1h-1zM924 260h1v1h-1zM924 262h1v1h-1zM925 257h1v1h-1zM925 261h1v1h-1zM926 262h1v1h-1zM927 259h1v1h-1zM928 259h1v1h-1zM929 261h1v1h-1z"/><path fill="#222" fill-opacity="0.8" d="M811 148h1v1h-1zM811 155h1v1h-1zM811 157h1v1h-1zM812 157h1v1h-1zM813 157h1v1h-1zM816 144h1v1h-1zM816 158h1v1h-1zM817 159h1v1h-1zM817 160h1v1h-1zM822 149h1v1h-1zM822 158h1v1h-1zM822 159h1v1h-1zM823 154h1v1h-1zM823 155h1v1h-1zM824 155h1v1h-1zM826 155h1v1h-1zM848 153h1v1h-1zM851 150h1v1h-1zM855 157h1v1h-1zM857 155h1v1h-1zM858 151h1v1h-1zM858 156h1v1h-1zM859 153h1v1h-1zM859 155h1v1h-1zM918 161h1v1h-1zM919 157h1v1h-1zM920 160h1v1h-1zM920 162h1v1h-1zM920 164h1v1h-1zM921 156h1v1h-1zM921 157h1v1h-1zM921 164h1v1h-1zM922 166h1v1h-1zM923 157h1v1h-1zM925 167h1v1h-1zM929 165h1v1h-1zM931 163h1v1h-1zM932 164h1v1h-1zM880 229h1v1h-1zM882 233h1v1h-1zM882 238h1v1h-1zM883 238h1v1h-1zM884 224h1v1h-1zM884 225h1v1h-1zM884 239h1v1h-1zM886 238h1v1h-1zM887 225h1v1h-1zM887 226h1v1h-1zM887 239h1v1h-1zM889 241h1v1h-1zM890 224h1v1h-1zM890 240h1v1h-1zM891 223h1v1h-1zM892 225h1v1h-1zM892 226h1v1h-1zM893 223h1v1h-1zM894 227h1v1h-1zM894 239h1v1h-1zM894 240h1v1h-1zM895 227h1v1h-1zM895 238h1v1h-1zM895 242h1v1h-1zM896 228h1v1h-1zM896 241h1v1h-1zM897 225h1v1h-1zM897 234h1v1h-1zM897 236h1v1h-1zM899 228h1v1h-1zM983 258h1v1h-1zM984 257h1v1h-1zM984 264h1v1h-1zM985 254h1v1h-1zM985 257h1v1h-1zM986 254h1v1h-1zM986 255h1v1h-1zM986 266h1v1h-1zM989 253h1v1h-1zM989 267h1v1h-1zM992 265h1v1h-1zM994 266h1v1h-1zM995 253h1v1h-1zM995 255h1v1h-1zM995 256h1v1h-1zM995 267h1v1h-1zM996 265h1v1h-1zM997 255h1v1h-1zM997 259h1v1h-1zM997 260h1v1h-1zM999 260h1v1h-1zM999 261h1v1h-1zM999 264h1v1h-1zM1000 259h1v1h-1zM840 285h1v1h-1zM841 280h1v1h-1zM841 284h1v1h-1zM842 286h1v1h-1zM842 288h1v1h-1zM843 281h1v1h-1zM844 279h1v1h-1zM845 281h1v1h-1zM846 290h1v1h-1zM848 277h1v1h-1zM848 279h1v1h-1zM849 292h1v1h-1zM850 280h1v1h-1zM850 290h1v1h-1zM852 293h1v1h-1zM853 279h1v1h-1zM853 280h1v1h-1zM853 291h1v1h-1zM853 292h1v1h-1zM855 282h1v1h-1zM855 289h1v1h-1zM856 282h1v1h-1zM857 281h1v1h-1zM858 286h1v1h-1zM858 290h1v1h-1zM859 283h1v1h-1zM859 286h1v1h-1zM860 286h1v1h-1zM846 243h1v1h-1zM847 245h1v1h-1zM847 253h1v1h-1zM848 243h1v1h-1zM848 250h1v1h-1zM850 234h1v1h-1zM850 235h1v1h-1zM852 231h1v1h-1zM852 232h1v1h-1zM852 234h1v1h-1zM852 253h1v1h-1zM853 233h1v1h-1zM853 252h1v1h-1zM854 230h1v1h-1zM854 231h1v1h-1zM855 232h1v1h-1zM856 231h1v1h-1zM856 235h1v1h-1zM856 238h1v1h-1zM856 246h1v1h-1zM856 249h1v1h-1zM857 233h1v1h-1zM857 240h1v1h-1zM857 247h1v1h-1zM858 242h1v1h-1zM858 243h1v1h-1zM924 98h1v1h-1zM924 102h1v1h-1zM925 99h1v1h-1zM927 106h1v1h-1zM930 107h1v1h-1zM931 95h1v1h-1zM931 108h1v1h-1zM931 111h1v1h-1zM932 109h1v1h-1zM933 111h1v1h-1zM934 111h1v1h-1zM935 111h1v1h-1zM936 94h1v1h-1zM936 110h1v1h-1zM936 112h1v1h-1zM937 97h1v1h-1zM937 100h1v1h-1zM937 108h1v1h-1zM937 109h1v1h-1zM938 108h1v1h-1zM938 110h1v1h-1zM938 112h1v1h-1zM939 98h1v1h-1zM940 101h1v1h-1zM940 103h1v1h-1zM940 106h1v1h-1zM940 110h1v1h-1zM940 111h1v1h-1zM941 106h1v1h-1zM941 110h1v1h-1zM917 128h1v1h-1zM918 133h1v1h-1zM918 134h1v1h-1zM919 127h1v1h-1zM919 131h1v1h-1zM920 129h1v1h-1zM921 125h1v1h-1zM921 134h1v1h-1zM922 136h1v1h-1zM922 137h1v1h-1zM924 125h1v1h-1zM926 124h1v1h-1zM926 125h1v1h-1zM929 138h1v1h-1zM929 140h1v1h-1zM931 126h1v1h-1zM932 128h1v1h-1zM933 138h1v1h-1zM933 139h1v1h-1zM934 139h1v1h-1zM935 130h1v1h-1zM935 134h1v1h-1zM936 129h1v1h-1zM936 131h1v1h-1zM937 130h1v1h-1zM937 132h1v1h-1zM937 133h1v1h-1zM948 161h1v1h-1zM948 162h1v1h-1zM949 155h1v1h-1zM949 160h1v1h-1zM949 162h1v1h-1zM950 161h1v1h-1zM950 165h1v1h-1zM951 162h1v1h-1zM951 163h1v1h-1zM951 164h1v1h-1zM952 164h1v1h-1zM952 167h1v1h-1zM953 150h1v1h-1zM954 150h1v1h-1zM956 167h1v1h-1zM957 150h1v1h-1zM957 164h1v1h-1zM957 165h1v1h-1zM958 147h1v1h-1zM958 148h1v1h-1zM958 166h1v1h-1zM959 162h1v1h-1zM960 152h1v1h-1zM961 152h1v1h-1zM961 154h1v1h-1zM963 155h1v1h-1zM1030 210h1v1h-1zM1030 218h1v1h-1zM1031 210h1v1h-1zM1031 212h1v1h-1zM1032 210h1v1h-1zM1032 211h1v1h-1zM1032 212h1v1h-1zM1032 219h1v1h-1zM1032 221h1v1h-1zM1033 206h1v1h-1zM1033 210h1v1h-1zM1035 222h1v1h-1zM1036 222h1v1h-1zM1037 221h1v1h-1zM1038 208h1v1h-1zM1040 209h1v1h-1zM1040 219h1v1h-1zM897 211h1v1h-1zM898 215h1v1h-1zM899 215h1v1h-1zM899 216h1v1h-1zM901 208h1v1h-1zM901 209h1v1h-1zM902 208h1v1h-1zM902 210h1v1h-1zM903 210h1v1h-1zM903 221h1v1h-1zM908 221h1v1h-1zM909 210h1v1h-1zM909 213h1v1h-1zM911 216h1v1h-1zM912 218h1v1h-1zM913 218h1v1h-1zM869 274h1v1h-1zM871 271h1v1h-1zM872 269h1v1h-1zM872 271h1v1h-1zM872 273h1v1h-1zM873 275h1v1h-1zM874 266h1v1h-1zM876 274h1v1h-1zM876 276h1v1h-1zM877 265h1v1h-1zM878 265h1v1h-1zM881 264h1v1h-1zM881 265h1v1h-1zM881 275h1v1h-1zM881 276h1v1h-1zM883 265h1v1h-1zM884 266h1v1h-1zM885 265h1v1h-1zM886 273h1v1h-1zM887 270h1v1h-1zM887 271h1v1h-1zM888 268h1v1h-1zM889 271h1v1h-1zM889 272h1v1h-1zM890 266h1v1h-1zM891 271h1v1h-1zM892 267h1v1h-1zM938 318h1v1h-1zM939 315h1v1h-1zM939 318h1v1h-1zM941 322h1v1h-1zM944 314h1v1h-1zM946 314h1v1h-1zM948 323h1v1h-1zM951 321h1v1h-1zM882 326h1v1h-1zM884 325h1v1h-1zM885 325h1v1h-1zM885 326h1v1h-1zM886 324h1v1h-1zM887 335h1v1h-1zM888 320h1v1h-1zM888 334h1v1h-1zM890 333h1v1h-1zM893 324h1v1h-1zM893 332h1v1h-1zM895 328h1v1h-1zM895 329h1v1h-1zM897 330h1v1h-1zM794 290h1v1h-1zM794 293h1v1h-1zM795 289h1v1h-1zM796 300h1v1h-1zM796 302h1v1h-1zM797 289h1v1h-1zM797 301h1v1h-1zM798 301h1v1h-1zM800 302h1v1h-1zM802 289h1v1h-1zM802 290h1v1h-1zM803 288h1v1h-1zM803 293h1v1h-1zM804 291h1v1h-1zM804 296h1v1h-1zM804 301h1v1h-1zM765 212h1v1h-1zM765 216h1v1h-1zM766 214h1v1h-1zM767 221h1v1h-1zM768 209h1v1h-1zM769 221h1v1h-1zM770 222h1v1h-1zM771 222h1v1h-1zM772 209h1v1h-1zM960 182h1v1h-1zM960 187h1v1h-1zM960 193h1v1h-1zM960 194h1v1h-1zM961 182h1v1h-1zM962 182h1v1h-1zM963 179h1v1h-1zM963 195h1v1h-1zM964 176h1v1h-1zM964 177h1v1h-1zM966 177h1v1h-1zM967 178h1v1h-1zM967 192h1v1h-1zM968 178h1v1h-1zM969 176h1v1h-1zM969 189h1v1h-1zM970 178h1v1h-1zM971 180h1v1h-1zM867 108h1v1h-1zM868 112h1v1h-1zM869 108h1v1h-1zM870 105h1v1h-1zM870 106h1v1h-1zM870 108h1v1h-1zM871 113h1v1h-1zM871 114h1v1h-1zM873 104h1v1h-1zM874 105h1v1h-1zM875 115h1v1h-1zM876 113h1v1h-1zM878 105h1v1h-1zM880 110h1v1h-1zM880 113h1v1h-1zM992 228h1v1h-1zM993 228h1v1h-1zM993 229h1v1h-1zM994 224h1v1h-1zM994 236h1v1h-1zM995 236h1v1h-1zM996 237h1v1h-1zM997 224h1v1h-1zM997 225h1v1h-1zM999 235h1v1h-1zM999 237h1v1h-1zM1000 226h1v1h-1zM1001 233h1v1h-1zM1001 235h1v1h-1zM1002 226h1v1h-1zM1002 233h1v1h-1zM1003 226h1v1h-1zM1003 227h1v1h-1zM1003 232h1v1h-1zM1004 231h1v1h-1zM957 230h1v1h-1zM959 234h1v1h-1zM960 226h1v1h-1zM960 234h1v1h-1zM961 233h1v1h-1zM964 231h1v1h-1zM796 185h1v1h-1zM797 182h1v1h-1zM800 180h1v1h-1zM800 181h1v1h-1zM803 181h1v1h-1zM808 182h1v1h-1zM809 183h1v1h-1zM812 185h1v1h-1zM813 186h1v1h-1zM814 188h1v1h-1zM828 89h1v1h-1zM834 83h1v1h-1zM834 90h1v1h-1zM835 83h1v1h-1zM837 89h1v1h-1zM838 88h1v1h-1zM838 89h1v1h-1zM864 87h1v1h-1zM867 83h1v1h-1zM867 89h1v1h-1zM867 90h1v1h-1zM872 89h1v1h-1zM873 89h1v1h-1zM874 85h1v1h-1zM1019 189h1v1h-1zM1021 192h1v1h-1zM1022 193h1v1h-1zM1024 184h1v1h-1zM1024 195h1v1h-1zM1025 196h1v1h-1zM1029 193h1v1h-1zM1029 194h1v1h-1zM1031 187h1v1h-1zM834 183h1v1h-1zM835 187h1v1h-1zM836 181h1v1h-1zM837 190h1v1h-1zM838 190h1v1h-1zM839 189h1v1h-1zM840 191h1v1h-1zM844 189h1v1h-1zM779 248h1v1h-1zM780 246h1v1h-1zM780 249h1v1h-1zM781 246h1v1h-1zM781 248h1v1h-1zM781 253h1v1h-1zM782 253h1v1h-1zM782 254h1v1h-1zM782 255h1v1h-1zM784 255h1v1h-1zM785 244h1v1h-1zM785 245h1v1h-1zM786 255h1v1h-1zM788 246h1v1h-1zM788 251h1v1h-1zM789 247h1v1h-1zM789 250h1v1h-1zM789 253h1v1h-1zM790 251h1v1h-1zM1013 266h1v1h-1zM1014 267h1v1h-1zM1015 264h1v1h-1zM1015 268h1v1h-1zM1016 263h1v1h-1zM1017 261h1v1h-1zM1017 268h1v1h-1zM1018 269h1v1h-1zM1020 261h1v1h-1zM1021 269h1v1h-1zM1022 271h1v1h-1zM1024 260h1v1h-1zM1026 263h1v1h-1zM1027 265h1v1h-1zM1027 268h1v1h-1zM918 260h1v1h-1zM918 262h1v1h-1zM919 260h1v1h-1zM920 262h1v1h-1zM921 264h1v1h-1zM923 264h1v1h-1zM926 264h1v1h-1zM927 263h1v1h-1zM930 261h1v1h-1zM930 263h1v1h-1zM931 260h1v1h-1z"/><path fill="#ff1aff" d="M811 284h1v1h-1zM811 285h1v1h-1zM811 286h1v1h-1zM812 282h1v1h-1zM812 284h1v1h-1zM812 286h1v1h-1zM812 287h1v1h-1zM812 288h1v1h-1zM813 281h1v1h-1zM813 282h1v1h-1zM813 283h1v1h-1zM813 284h1v1h-1zM813 285h1v1h-1zM813 286h1v1h-1zM813 287h1v1h-1zM813 288h1v1h-1zM813 289h1v1h-1zM813 290h1v1h-1zM814 280h1v1h-1zM814 281h1v1h-1zM814 283h1v1h-1zM814 285h1v1h-1zM814 286h1v1h-1zM814 287h1v1h-1zM814 289h1v1h-1zM814 290h1v1h-1zM815 280h1v1h-1zM815 281h1v1h-1zM815 282h1v1h-1zM815 283h1v1h-1zM815 284h1v1h-1zM815 285h1v1h-1zM815 286h1v1h-1zM815 288h1v1h-1zM815 289h1v1h-1zM815 290h1v1h-1zM816 281h1v1h-1zM816 282h1v1h-1zM816 283h1v1h-1zM816 284h1v1h-1zM816 285h1v1h-1zM816 286h1v1h-1zM816 287h1v1h-1zM816 289h1v1h-1zM816 290h1v1h-1zM817 282h1v1h-1zM817 283h1v1h-1zM817 284h1v1h-1zM817 286h1v1h-1zM817 287h1v1h-1zM817 288h1v1h-1zM843 132h1v1h-1zM843 133h1v1h-1zM843 135h1v1h-1zM844 131h1v1h-1zM844 132h1v1h-1zM844 133h1v1h-1zM844 134h1v1h-1zM844 135h1v1h-1zM845 131h1v1h-1zM845 132h1v1h-1zM845 133h1v1h-1zM845 134h1v1h-1zM845 135h1v1h-1zM846 132h1v1h-1zM846 133h1v1h-1zM846 134h1v1h-1zM846 135h1v1h-1zM989 175h1v1h-1zM989 176h1v1h-1zM990 173h1v1h-1zM990 174h1v1h-1zM990 175h1v1h-1zM990 176h1v1h-1zM991 174h1v1h-1zM991 175h1v1h-1zM991 176h1v1h-1zM904 203h1v1h-1zM904 204h1v1h-1zM904 205h1v1h-1zM904 206h1v1h-1zM905 204h1v1h-1zM905 205h1v1h-1zM905 206h1v1h-1zM906 205h1v1h-1zM906 206h1v1h-1zM883 240h1v1h-1zM884 239h1v1h-1zM884 240h1v1h-1zM884 241h1v1h-1zM885 241h1v1h-1zM886 239h1v1h-1zM886 240h1v1h-1zM901 237h1v1h-1zM901 238h1v1h-1zM902 236h1v1h-1zM902 237h1v1h-1zM902 238h1v1h-1zM903 236h1v1h-1zM903 237h1v1h-1zM903 238h1v1h-1zM904 237h1v1h-1zM904 238h1v1h-1zM848 340h1v1h-1zM849 340h1v1h-1zM849 341h1v1h-1zM849 342h1v1h-1zM850 339h1v1h-1zM850 340h1v1h-1zM850 341h1v1h-1zM850 342h1v1h-1zM851 339h1v1h-1zM851 341h1v1h-1zM979 296h1v1h-1zM980 294h1v1h-1zM980 295h1v1h-1zM981 295h1v1h-1zM981 296h1v1h-1zM786 129h1v1h-1zM786 130h1v1h-1zM787 129h1v1h-1zM787 130h1v1h-1zM804 126h1v1h-1zM804 127h1v1h-1zM804 128h1v1h-1zM805 126h1v1h-1zM805 127h1v1h-1zM894 96h1v1h-1zM895 96h1v1h-1zM895 97h1v1h-1zM1015 143h1v1h-1zM1016 141h1v1h-1zM1016 142h1v1h-1zM1002 189h1v1h-1zM1002 190h1v1h-1zM1003 189h1v1h-1zM1003 190h1v1h-1zM1003 191h1v1h-1zM1004 189h1v1h-1zM1004 190h1v1h-1zM934 225h1v1h-1zM935 224h1v1h-1zM935 225h1v1h-1zM936 225h1v1h-1zM824 189h1v1h-1zM824 190h1v1h-1zM825 189h1v1h-1zM825 190h1v1h-1z"/><path fill="#e020e0" fill-opacity="0.9" d="M960 113h1v1h-1zM913 249h1v1h-1zM947 134h1v1h-1zM902 312h1v1h-1zM829 303h1v1h-1zM967 334h1v1h-1zM922 230h1v1h-1zM929 261h1v1h-1zM1012 184h1v1h-1zM831 211h1v1h-1zM816 141h1v1h-1zM799 137h1v1h-1zM835 320h1v1h-1zM771 191h1v1h-1zM778 266h1v1h-1zM863 297h1v1h-1zM838 143h1v1h-1zM772 266h1v1h-1zM860 326h1v1h-1zM883 321h1v1h-1zM947 309h1v1h-1zM1002 299h1v1h-1zM972 222h1v1h-1zM913 284h1v1h-1zM870 272h1v1h-1zM969 163h1v1h-1zM978 295h1v1h-1zM874 81h1v1h-1zM784 181h1v1h-1zM854 143h1v1h-1zM899 175h1v1h-1zM934 145h1v1h-1zM889 103h1v1h-1zM839 81h1v1h-1zM881 91h1v1h-1zM916 336h1v1h-1zM933 130h1v1h-1zM869 73h1v1h-1zM829 99h1v1h-1zM867 115h1v1h-1zM894 134h1v1h-1zM984 108h1v1h-1zM968 220h1v1h-1zM778 133h1v1h-1zM930 146h1v1h-1zM991 278h1v1h-1zM956 216h1v1h-1zM839 232h1v1h-1zM994 238h1v1h-1zM802 230h1v1h-1zM840 149h1v1h-1zM806 180h1v1h-1zM941 181h1v1h-1zM831 188h1v1h-1zM980 215h1v1h-1zM797 196h1v1h-1zM812 200h1v1h-1zM763 251h1v1h-1zM911 326h1v1h-1zM808 242h1v1h-1zM933 182h1v1h-1zM884 319h1v1h-1zM932 257h1v1h-1zM988 277h1v1h-1zM854 325h1v1h-1zM872 138h1v1h-1zM960 164h1v1h-1zM972 321h1v1h-1zM897 78h1v1h-1zM851 248h1v1h-1z"/></svg><div style="position:absolute;left:857.3px;top:365.6px;font-size:11.2px;line-height:1;color:#f4f4f4;font-weight:400;white-space:nowrap;">25mm x 25mm</div><div style="position:absolute;left:724.75px;top:39.5px;width:44.0px;height:15.0px;background:#fffbe3"></div><div style="position:absolute;left:730px;width:37px;top:40px;font-size:6.3px;line-height:7px;text-align:right;color:#222">49.8 µm<br>1000.0 µm</div><div style="position:absolute;left:735px;top:41px;width:1.5px;height:4px;background:#000"></div><div style="position:absolute;left:726px;top:50px;width:9.5px;height:1px;background:#222"></div><div style="position:absolute;left:735px;top:48.5px;width:1px;height:3.5px;background:#222"></div><div style="position:absolute;left:1080px;top:45px;font-size:9.6px;line-height:1;color:#f0f0f0;font-weight:400;white-space:nowrap;">Snowdon Summit (1)</div><div style="position:absolute;left:1087px;top:76.5px;font-size:14.3px;line-height:1;color:#f0f0f0;font-weight:400;white-space:nowrap;">Legend:</div><div style="position:absolute;left:1073px;top:107px;width:9px;height:9px;border-radius:50%;background:#ff33ee"></div><div style="position:absolute;left:1073px;top:120.5px;width:9px;height:9px;border-radius:50%;background:#7a7a7a"></div><div style="position:absolute;left:1087.5px;top:105.3px;font-size:11.4px;line-height:1;color:#f0f0f0;font-weight:400;white-space:nowrap;">Plastic</div><div style="position:absolute;left:1087.5px;top:118.8px;font-size:11.4px;line-height:1;color:#f0f0f0;font-weight:400;white-space:nowrap;">Others</div><svg style="position:absolute;left:0;top:0" width="1200" height="679" viewBox="0 0 1200 679"><rect x="55" y="438.5" width="981" height="13.100000000000023" fill="#363636"/><line x1="55" y1="439.0" x2="1036" y2="439.0" stroke="#454545" stroke-width="1"/><line x1="55" y1="451.6" x2="1036" y2="451.6" stroke="#505050" stroke-width="1.2"/><line x1="51.5" y1="596.76" x2="1036" y2="596.76" stroke="#a8a8a8" stroke-width="1" stroke-dasharray="2,1"/><line x1="51.5" y1="564.72" x2="1036" y2="564.72" stroke="#a8a8a8" stroke-width="1" stroke-dasharray="2,1"/><line x1="51.5" y1="532.68" x2="1036" y2="532.68" stroke="#a8a8a8" stroke-width="1" stroke-dasharray="2,1"/><line x1="51.5" y1="500.64" x2="1036" y2="500.64" stroke="#a8a8a8" stroke-width="1" stroke-dasharray="2,1"/><line x1="51.5" y1="468.60" x2="1036" y2="468.60" stroke="#a8a8a8" stroke-width="1" stroke-dasharray="2,1"/><line x1="55.00" y1="438.5" x2="55.00" y2="628.8" stroke="#474747" stroke-width="1.6"/><line x1="177.62" y1="438.5" x2="177.62" y2="628.8" stroke="#474747" stroke-width="1.6"/><line x1="300.25" y1="438.5" x2="300.25" y2="628.8" stroke="#474747" stroke-width="1.6"/><line x1="422.88" y1="438.5" x2="422.88" y2="628.8" stroke="#474747" stroke-width="1.6"/><line x1="545.50" y1="438.5" x2="545.50" y2="628.8" stroke="#474747" stroke-width="1.6"/><line x1="668.12" y1="438.5" x2="668.12" y2="628.8" stroke="#474747" stroke-width="1.6"/><line x1="790.75" y1="438.5" x2="790.75" y2="628.8" stroke="#474747" stroke-width="1.6"/><line x1="913.38" y1="438.5" x2="913.38" y2="628.8" stroke="#474747" stroke-width="1.6"/><line x1="1036.00" y1="438.5" x2="1036.00" y2="628.8" stroke="#474747" stroke-width="1.6"/><line x1="59.50" y1="628.8" x2="59.50" y2="631.8" stroke="#5a5a5a" stroke-width="1"/><line x1="173.62" y1="628.8" x2="173.62" y2="631.8" stroke="#5a5a5a" stroke-width="1"/><line x1="182.12" y1="628.8" x2="182.12" y2="631.8" stroke="#5a5a5a" stroke-width="1"/><line x1="296.25" y1="628.8" x2="296.25" y2="631.8" stroke="#5a5a5a" stroke-width="1"/><line x1="304.75" y1="628.8" x2="304.75" y2="631.8" stroke="#5a5a5a" stroke-width="1"/><line x1="418.88" y1="628.8" x2="418.88" y2="631.8" stroke="#5a5a5a" stroke-width="1"/><line x1="427.38" y1="628.8" x2="427.38" y2="631.8" stroke="#5a5a5a" stroke-width="1"/><line x1="541.50" y1="628.8" x2="541.50" y2="631.8" stroke="#5a5a5a" stroke-width="1"/><line x1="550.00" y1="628.8" x2="550.00" y2="631.8" stroke="#5a5a5a" stroke-width="1"/><line x1="664.12" y1="628.8" x2="664.12" y2="631.8" stroke="#5a5a5a" stroke-width="1"/><line x1="672.62" y1="628.8" x2="672.62" y2="631.8" stroke="#5a5a5a" stroke-width="1"/><line x1="786.75" y1="628.8" x2="786.75" y2="631.8" stroke="#5a5a5a" stroke-width="1"/><line x1="795.25" y1="628.8" x2="795.25" y2="631.8" stroke="#5a5a5a" stroke-width="1"/><line x1="909.38" y1="628.8" x2="909.38" y2="631.8" stroke="#5a5a5a" stroke-width="1"/><line x1="917.88" y1="628.8" x2="917.88" y2="631.8" stroke="#5a5a5a" stroke-width="1"/><line x1="1032.00" y1="628.8" x2="1032.00" y2="631.8" stroke="#5a5a5a" stroke-width="1"/><rect x="70.60" y="614.9" width="92.5" height="13.90" fill="#ff33e8"/><text x="116.31" y="448.6" font-family="Liberation Sans" font-size="10" font-weight="400" fill="#ececec" stroke="#ececec" stroke-width="0.25" text-anchor="middle">Allt Moses</text><rect x="192.10" y="609.2" width="92.5" height="19.60" fill="#ff33e8"/><text x="238.94" y="448.6" font-family="Liberation Sans" font-size="10" font-weight="400" fill="#ececec" stroke="#ececec" stroke-width="0.25" text-anchor="middle">Halfway House (1)</text><rect x="315.80" y="601.25" width="92.5" height="27.55" fill="#ff33e8"/><text x="361.56" y="448.6" font-family="Liberation Sans" font-size="10" font-weight="400" fill="#ececec" stroke="#ececec" stroke-width="0.25" text-anchor="middle">Hebron Gate</text><rect x="437.50" y="602.9" width="92.5" height="25.90" fill="#ff33e8"/><text x="484.19" y="448.6" font-family="Liberation Sans" font-size="10" font-weight="400" fill="#ececec" stroke="#ececec" stroke-width="0.25" text-anchor="middle">Llyn Du’r Arddu</text><rect x="560.80" y="585.0" width="92.5" height="43.80" fill="#ff33e8"/><text x="606.81" y="448.6" font-family="Liberation Sans" font-size="10" font-weight="400" fill="#ececec" stroke="#ececec" stroke-width="0.25" text-anchor="middle">Llyn Du’r Arddu (outlet)</text><rect x="682.75" y="464.7" width="92.5" height="164.10" fill="#ff33e8"/><text x="729.44" y="448.6" font-family="Liberation Sans" font-size="10" font-weight="400" fill="#ececec" stroke="#ececec" stroke-width="0.25" text-anchor="middle">Railway Bridge</text><rect x="806.30" y="470.2" width="92.5" height="158.60" fill="#ff33e8"/><text x="852.06" y="448.6" font-family="Liberation Sans" font-size="10" font-weight="400" fill="#ececec" stroke="#ececec" stroke-width="0.25" text-anchor="middle">Snowdon Summit (1)</text><rect x="928.30" y="614.8" width="92.5" height="14.00" fill="#ff33e8"/><text x="974.69" y="448.6" font-family="Liberation Sans" font-size="10" font-weight="400" fill="#ececec" stroke="#ececec" stroke-width="0.25" text-anchor="middle">Stream at base</text><line x1="52" y1="628.8" x2="1036" y2="628.8" stroke="#4a4a4a" stroke-width="1.5"/><text x="49.8" y="600.76" font-family="Liberation Sans" font-size="11" fill="#e8e8e8" text-anchor="end">1</text><text x="49.8" y="568.72" font-family="Liberation Sans" font-size="11" fill="#e8e8e8" text-anchor="end">2</text><text x="49.8" y="536.68" font-family="Liberation Sans" font-size="11" fill="#e8e8e8" text-anchor="end">3</text><text x="49.8" y="504.64" font-family="Liberation Sans" font-size="11" fill="#e8e8e8" text-anchor="end">4</text><text x="49.8" y="472.60" font-family="Liberation Sans" font-size="11" fill="#e8e8e8" text-anchor="end">5</text><text x="49.8" y="625" font-family="Liberation Sans" font-size="11" fill="#e8e8e8" text-anchor="end">0</text><text transform="translate(27 537.5) rotate(-90)" font-family="Liberation Sans" font-size="9.8" fill="#ececec" stroke="#ececec" stroke-width="0.2" text-anchor="middle">Percent (%) Volume</text></svg><div style="position:absolute;left:1085px;top:445.5px;font-size:14.3px;line-height:1;color:#f0f0f0;font-weight:400;white-space:nowrap;">Legend:</div><div style="position:absolute;left:1071px;top:474.5px;width:9px;height:9px;border-radius:50%;background:#ff33ee"></div><div style="position:absolute;left:1085px;top:473px;font-size:11.4px;line-height:1;color:#f0f0f0;font-weight:400;white-space:nowrap;">Plastic</div><div style="position:absolute;left:1198.5px;top:392px;width:1.5px;height:237px;background:#333"></div><svg style="position:absolute;left:0;top:0" width="1200" height="679"><path d="M515.8,425.2 L515.8,434.2 L518.2,432 L520.2,436 L521.8,435.2 L519.9,431.4 L523.2,431.4 Z" fill="#fff" stroke="#000" stroke-width="0.9" stroke-linejoin="miter"/></svg>
</div></body></html>
